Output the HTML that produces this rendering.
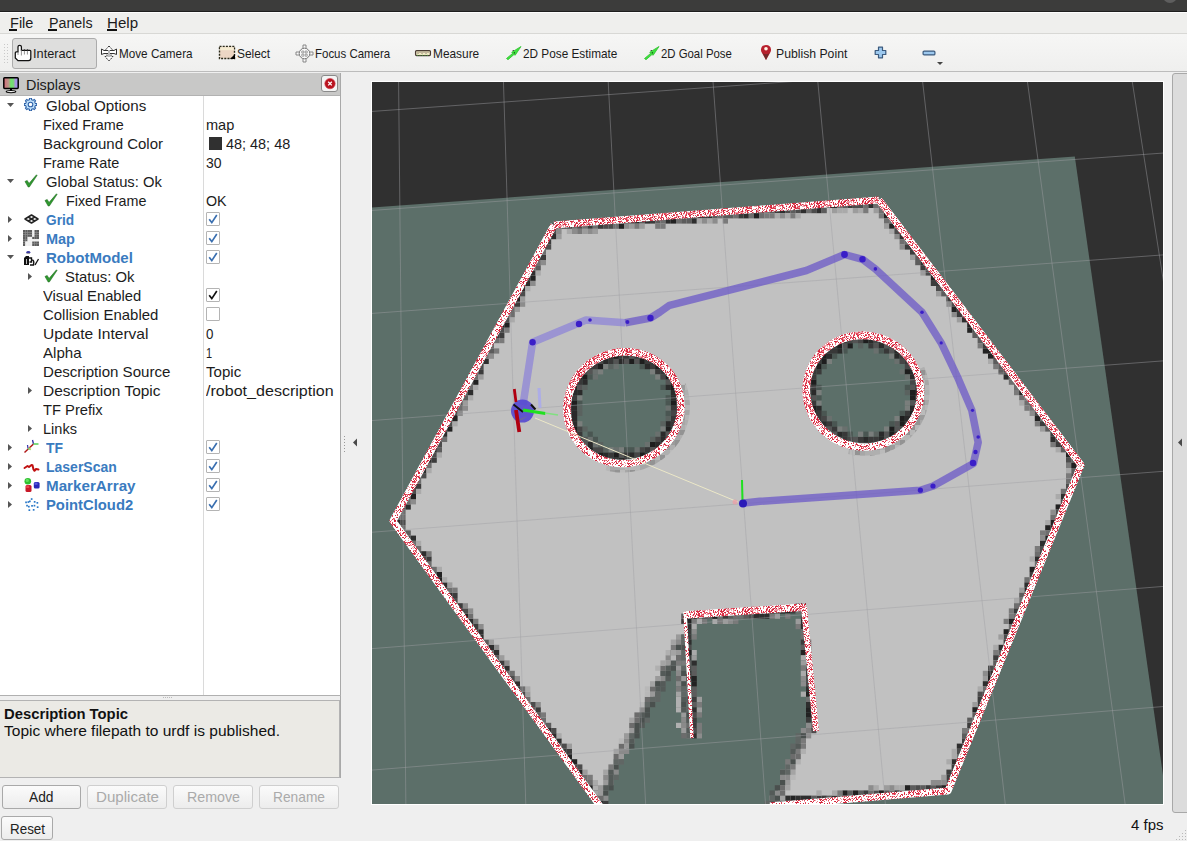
<!DOCTYPE html><html><head><meta charset="utf-8"><style>
html,body{margin:0;padding:0;width:1187px;height:841px;overflow:hidden;background:#efefef;position:relative}
.t{position:absolute;white-space:nowrap;font-family:"Liberation Sans",sans-serif;line-height:normal}
</style></head><body>
<div style="position:absolute;left:0px;top:0px;width:1187px;height:11px;background:#3c3c3b"></div>
<div style="position:absolute;left:0px;top:11px;width:1187px;height:1px;background:#1e1e1e"></div>
<div style="position:absolute;left:0px;top:12px;width:1187px;height:1px;background:#fdfdfd"></div>
<div style="position:absolute;left:0px;top:13px;width:1187px;height:20px;background:#efefed"></div>
<div style="position:absolute;left:0px;top:33px;width:1187px;height:1px;background:#d8d8d5"></div>
<div style="position:absolute;left:0px;top:34px;width:1187px;height:37px;background:linear-gradient(#f6f6f5,#efefee)"></div>
<div style="position:absolute;left:0px;top:71px;width:1187px;height:1px;background:#bcbcbc"></div>
<div style="position:absolute;left:0px;top:72px;width:1187px;height:769px;background:#efefef"></div>
<div class="t" style="left:10.00px;top:15.23px;font-size:14.00px;transform:scaleX(1.0382);transform-origin:0 0;color:#1c1c1c;">File</div>
<div class="t" style="left:48.50px;top:15.23px;font-size:14.00px;transform:scaleX(1.0177);transform-origin:0 0;color:#1c1c1c;">Panels</div>
<div class="t" style="left:107.30px;top:15.23px;font-size:14.00px;transform:scaleX(1.0775);transform-origin:0 0;color:#1c1c1c;">Help</div>
<div style="position:absolute;left:9px;top:29px;width:8px;height:2px;background:#111"></div>
<div style="position:absolute;left:48px;top:29px;width:9px;height:2px;background:#111"></div>
<div style="position:absolute;left:107px;top:29px;width:10px;height:2px;background:#111"></div>
<div style="position:absolute;left:4px;top:44px;width:1px;height:1px;background:#c9c9c9"></div>
<div style="position:absolute;left:7px;top:44px;width:1px;height:1px;background:#c9c9c9"></div>
<div style="position:absolute;left:4px;top:47px;width:1px;height:1px;background:#c9c9c9"></div>
<div style="position:absolute;left:7px;top:47px;width:1px;height:1px;background:#c9c9c9"></div>
<div style="position:absolute;left:4px;top:50px;width:1px;height:1px;background:#c9c9c9"></div>
<div style="position:absolute;left:7px;top:50px;width:1px;height:1px;background:#c9c9c9"></div>
<div style="position:absolute;left:4px;top:53px;width:1px;height:1px;background:#c9c9c9"></div>
<div style="position:absolute;left:7px;top:53px;width:1px;height:1px;background:#c9c9c9"></div>
<div style="position:absolute;left:4px;top:56px;width:1px;height:1px;background:#c9c9c9"></div>
<div style="position:absolute;left:7px;top:56px;width:1px;height:1px;background:#c9c9c9"></div>
<div style="position:absolute;left:4px;top:59px;width:1px;height:1px;background:#c9c9c9"></div>
<div style="position:absolute;left:7px;top:59px;width:1px;height:1px;background:#c9c9c9"></div>
<div style="position:absolute;left:4px;top:62px;width:1px;height:1px;background:#c9c9c9"></div>
<div style="position:absolute;left:7px;top:62px;width:1px;height:1px;background:#c9c9c9"></div>
<div style="position:absolute;left:12px;top:38px;width:83px;height:29px;border:1px solid #acacac;border-radius:3px;background:#dededd"></div>
<div class="t" style="left:33.00px;top:45.94px;font-size:13.00px;transform:scaleX(0.9803);transform-origin:0 0;color:#1c1c1c;">Interact</div>
<div class="t" style="left:119.00px;top:45.94px;font-size:13.00px;transform:scaleX(0.9008);transform-origin:0 0;color:#1c1c1c;">Move Camera</div>
<div class="t" style="left:237.00px;top:45.94px;font-size:13.00px;transform:scaleX(0.9159);transform-origin:0 0;color:#1c1c1c;">Select</div>
<div class="t" style="left:315.00px;top:45.94px;font-size:13.00px;transform:scaleX(0.8818);transform-origin:0 0;color:#1c1c1c;">Focus Camera</div>
<div class="t" style="left:433.00px;top:45.94px;font-size:13.00px;transform:scaleX(0.9136);transform-origin:0 0;color:#1c1c1c;">Measure</div>
<div class="t" style="left:523.00px;top:45.94px;font-size:13.00px;transform:scaleX(0.9071);transform-origin:0 0;color:#1c1c1c;">2D Pose Estimate</div>
<div class="t" style="left:661.20px;top:45.94px;font-size:13.00px;transform:scaleX(0.8749);transform-origin:0 0;color:#1c1c1c;">2D Goal Pose</div>
<div class="t" style="left:775.70px;top:45.94px;font-size:13.00px;transform:scaleX(0.9400);transform-origin:0 0;color:#1c1c1c;">Publish Point</div>
<div style="position:absolute;left:0px;top:73px;width:341px;height:23px;background:#c8c8c7"></div>
<div style="position:absolute;left:0px;top:95px;width:341px;height:1px;background:#b2b2b2"></div>
<div class="t" style="left:25.60px;top:77.28px;font-size:14.50px;transform:scaleX(0.9925);transform-origin:0 0;color:#1c1c1c;">Displays</div>
<div style="position:absolute;left:321px;top:75px;width:15px;height:15px;border:1px solid #8a8a8a;border-radius:3px;background:#f4f4f4"></div>
<svg style="position:absolute;left:322px;top:76px" width="16" height="16"><circle cx="8" cy="7.6" r="5.2" fill="#b8121e" stroke="#d04050" stroke-width="0.6"/><path d="M6.2 5.8 L9.8 9.4 M9.8 5.8 L6.2 9.4" stroke="#fff" stroke-width="1.3"/></svg>
<div style="position:absolute;left:0px;top:96px;width:340px;height:600px;background:#fff"></div>
<div style="position:absolute;left:340px;top:73px;width:1px;height:705px;background:#a9a9a9"></div>
<div style="position:absolute;left:0px;top:695px;width:341px;height:1px;background:#b0b0b0"></div>
<div style="position:absolute;left:203px;top:96px;width:1px;height:599px;background:#dadada"></div>
<div class="t" style="left:45.50px;top:97.98px;font-size:14.50px;transform:scaleX(1.0457);transform-origin:0 0;color:#1c1c1c;">Global Options</div>
<div class="t" style="left:43.40px;top:116.98px;font-size:14.50px;transform:scaleX(0.9912);transform-origin:0 0;color:#1c1c1c;">Fixed Frame</div>
<div class="t" style="left:206.40px;top:116.98px;font-size:14.50px;transform:scaleX(1.0035);transform-origin:0 0;color:#1c1c1c;">map</div>
<div class="t" style="left:43.40px;top:135.98px;font-size:14.50px;transform:scaleX(1.0338);transform-origin:0 0;color:#1c1c1c;">Background Color</div>
<div style="position:absolute;left:209px;top:137px;width:13px;height:13px;background:#303030;border:0"></div>
<div class="t" style="left:226.40px;top:135.98px;font-size:14.50px;transform:scaleX(0.9950);transform-origin:0 0;color:#1c1c1c;">48; 48; 48</div>
<div class="t" style="left:43.40px;top:154.98px;font-size:14.50px;transform:scaleX(0.9953);transform-origin:0 0;color:#1c1c1c;">Frame Rate</div>
<div class="t" style="left:206.40px;top:154.98px;font-size:14.50px;transform:scaleX(0.9630);transform-origin:0 0;color:#1c1c1c;">30</div>
<div class="t" style="left:45.50px;top:173.98px;font-size:14.50px;transform:scaleX(1.0195);transform-origin:0 0;color:#1c1c1c;">Global Status: Ok</div>
<div class="t" style="left:65.80px;top:192.98px;font-size:14.50px;transform:scaleX(0.9887);transform-origin:0 0;color:#1c1c1c;">Fixed Frame</div>
<div class="t" style="left:206.40px;top:192.98px;font-size:14.50px;transform:scaleX(0.9832);transform-origin:0 0;color:#1c1c1c;">OK</div>
<div class="t" style="left:45.90px;top:211.98px;font-size:14.50px;transform:scaleX(0.9430);transform-origin:0 0;font-weight:bold;color:#3a7bbf;">Grid</div>
<div style="position:absolute;left:206px;top:212px;width:12px;height:12px;border:1px solid #b4b4b4;border-radius:1px;background:#fff"></div>
<svg style="position:absolute;left:206px;top:212px" width="14" height="14"><path d="M3.2 7.2 L5.8 10.6 L10.8 3" fill="none" stroke="#3a6fb0" stroke-width="1.7"/></svg>
<div class="t" style="left:45.90px;top:230.98px;font-size:14.50px;transform:scaleX(1.0000);transform-origin:0 0;font-weight:bold;color:#3a7bbf;">Map</div>
<div style="position:absolute;left:206px;top:231px;width:12px;height:12px;border:1px solid #b4b4b4;border-radius:1px;background:#fff"></div>
<svg style="position:absolute;left:206px;top:231px" width="14" height="14"><path d="M3.2 7.2 L5.8 10.6 L10.8 3" fill="none" stroke="#3a6fb0" stroke-width="1.7"/></svg>
<div class="t" style="left:45.90px;top:249.98px;font-size:14.50px;transform:scaleX(1.0378);transform-origin:0 0;font-weight:bold;color:#3a7bbf;">RobotModel</div>
<div style="position:absolute;left:206px;top:250px;width:12px;height:12px;border:1px solid #b4b4b4;border-radius:1px;background:#fff"></div>
<svg style="position:absolute;left:206px;top:250px" width="14" height="14"><path d="M3.2 7.2 L5.8 10.6 L10.8 3" fill="none" stroke="#3a6fb0" stroke-width="1.7"/></svg>
<div class="t" style="left:64.90px;top:268.98px;font-size:14.50px;transform:scaleX(1.0267);transform-origin:0 0;color:#1c1c1c;">Status: Ok</div>
<div class="t" style="left:43.30px;top:287.98px;font-size:14.50px;transform:scaleX(1.0187);transform-origin:0 0;color:#1c1c1c;">Visual Enabled</div>
<div style="position:absolute;left:206px;top:288px;width:12px;height:12px;border:1px solid #b4b4b4;border-radius:1px;background:#fff"></div>
<svg style="position:absolute;left:206px;top:288px" width="14" height="14"><path d="M3.2 7.2 L5.8 10.6 L10.8 3" fill="none" stroke="#111" stroke-width="1.7"/></svg>
<div class="t" style="left:43.30px;top:306.98px;font-size:14.50px;transform:scaleX(1.0293);transform-origin:0 0;color:#1c1c1c;">Collision Enabled</div>
<div style="position:absolute;left:206px;top:307px;width:12px;height:12px;border:1px solid #b4b4b4;border-radius:1px;background:#fff"></div>
<div class="t" style="left:43.30px;top:325.98px;font-size:14.50px;transform:scaleX(1.0721);transform-origin:0 0;color:#1c1c1c;">Update Interval</div>
<div class="t" style="left:206.40px;top:325.98px;font-size:14.50px;transform:scaleX(0.9195);transform-origin:0 0;color:#1c1c1c;">0</div>
<div class="t" style="left:43.30px;top:344.98px;font-size:14.50px;transform:scaleX(1.0399);transform-origin:0 0;color:#1c1c1c;">Alpha</div>
<div class="t" style="left:206.40px;top:344.98px;font-size:14.50px;transform:scaleX(0.7580);transform-origin:0 0;color:#1c1c1c;">1</div>
<div class="t" style="left:43.30px;top:363.98px;font-size:14.50px;transform:scaleX(1.0398);transform-origin:0 0;color:#1c1c1c;">Description Source</div>
<div class="t" style="left:206.40px;top:363.98px;font-size:14.50px;transform:scaleX(1.0397);transform-origin:0 0;color:#1c1c1c;">Topic</div>
<div class="t" style="left:43.30px;top:382.98px;font-size:14.50px;transform:scaleX(1.0669);transform-origin:0 0;color:#1c1c1c;">Description Topic</div>
<div class="t" style="left:205.60px;top:382.98px;font-size:14.50px;transform:scaleX(1.1078);transform-origin:0 0;color:#1c1c1c;">/robot_description</div>
<div class="t" style="left:43.30px;top:401.98px;font-size:14.50px;transform:scaleX(1.0153);transform-origin:0 0;color:#1c1c1c;">TF Prefix</div>
<div class="t" style="left:43.30px;top:420.98px;font-size:14.50px;transform:scaleX(1.0042);transform-origin:0 0;color:#1c1c1c;">Links</div>
<div class="t" style="left:45.80px;top:439.98px;font-size:14.50px;transform:scaleX(0.9610);transform-origin:0 0;font-weight:bold;color:#3a7bbf;">TF</div>
<div style="position:absolute;left:206px;top:440px;width:12px;height:12px;border:1px solid #b4b4b4;border-radius:1px;background:#fff"></div>
<svg style="position:absolute;left:206px;top:440px" width="14" height="14"><path d="M3.2 7.2 L5.8 10.6 L10.8 3" fill="none" stroke="#3a6fb0" stroke-width="1.7"/></svg>
<div class="t" style="left:45.80px;top:458.98px;font-size:14.50px;transform:scaleX(0.9650);transform-origin:0 0;font-weight:bold;color:#3a7bbf;">LaserScan</div>
<div style="position:absolute;left:206px;top:459px;width:12px;height:12px;border:1px solid #b4b4b4;border-radius:1px;background:#fff"></div>
<svg style="position:absolute;left:206px;top:459px" width="14" height="14"><path d="M3.2 7.2 L5.8 10.6 L10.8 3" fill="none" stroke="#3a6fb0" stroke-width="1.7"/></svg>
<div class="t" style="left:45.80px;top:477.98px;font-size:14.50px;transform:scaleX(1.0482);transform-origin:0 0;font-weight:bold;color:#3a7bbf;">MarkerArray</div>
<div style="position:absolute;left:206px;top:478px;width:12px;height:12px;border:1px solid #b4b4b4;border-radius:1px;background:#fff"></div>
<svg style="position:absolute;left:206px;top:478px" width="14" height="14"><path d="M3.2 7.2 L5.8 10.6 L10.8 3" fill="none" stroke="#3a6fb0" stroke-width="1.7"/></svg>
<div class="t" style="left:45.80px;top:496.98px;font-size:14.50px;transform:scaleX(1.0210);transform-origin:0 0;font-weight:bold;color:#3a7bbf;">PointCloud2</div>
<div style="position:absolute;left:206px;top:497px;width:12px;height:12px;border:1px solid #b4b4b4;border-radius:1px;background:#fff"></div>
<svg style="position:absolute;left:206px;top:497px" width="14" height="14"><path d="M3.2 7.2 L5.8 10.6 L10.8 3" fill="none" stroke="#3a6fb0" stroke-width="1.7"/></svg>
<svg style="position:absolute;left:7px;top:103px" width="8" height="5"><path d="M0 0 L7 0 L3.5 4 Z" fill="#555"/></svg>
<svg style="position:absolute;left:7px;top:179px" width="8" height="5"><path d="M0 0 L7 0 L3.5 4 Z" fill="#555"/></svg>
<svg style="position:absolute;left:7px;top:255px" width="8" height="5"><path d="M0 0 L7 0 L3.5 4 Z" fill="#555"/></svg>
<svg style="position:absolute;left:8px;top:216px" width="5" height="8"><path d="M0 0 L4 3.5 L0 7 Z" fill="#555"/></svg>
<svg style="position:absolute;left:8px;top:235px" width="5" height="8"><path d="M0 0 L4 3.5 L0 7 Z" fill="#555"/></svg>
<svg style="position:absolute;left:8px;top:444px" width="5" height="8"><path d="M0 0 L4 3.5 L0 7 Z" fill="#555"/></svg>
<svg style="position:absolute;left:8px;top:463px" width="5" height="8"><path d="M0 0 L4 3.5 L0 7 Z" fill="#555"/></svg>
<svg style="position:absolute;left:8px;top:482px" width="5" height="8"><path d="M0 0 L4 3.5 L0 7 Z" fill="#555"/></svg>
<svg style="position:absolute;left:8px;top:501px" width="5" height="8"><path d="M0 0 L4 3.5 L0 7 Z" fill="#555"/></svg>
<svg style="position:absolute;left:28px;top:273px" width="5" height="8"><path d="M0 0 L4 3.5 L0 7 Z" fill="#555"/></svg>
<svg style="position:absolute;left:28px;top:387px" width="5" height="8"><path d="M0 0 L4 3.5 L0 7 Z" fill="#555"/></svg>
<svg style="position:absolute;left:28px;top:425px" width="5" height="8"><path d="M0 0 L4 3.5 L0 7 Z" fill="#555"/></svg>
<div style="position:absolute;left:0px;top:700px;width:339px;height:76px;border:1px solid #b3b3b3;border-left:0;background:#ebeae5"></div>
<div class="t" style="left:4.40px;top:706.48px;font-size:14.50px;transform:scaleX(1.0217);transform-origin:0 0;font-weight:bold;color:#111;">Description Topic</div>
<div class="t" style="left:4.40px;top:723.28px;font-size:14.50px;transform:scaleX(1.0700);transform-origin:0 0;color:#111;">Topic where filepath to urdf is published.</div>
<div style="position:absolute;left:163px;top:697px;width:1px;height:1px;background:#bbb"></div>
<div style="position:absolute;left:165px;top:697px;width:1px;height:1px;background:#bbb"></div>
<div style="position:absolute;left:167px;top:697px;width:1px;height:1px;background:#bbb"></div>
<div style="position:absolute;left:169px;top:697px;width:1px;height:1px;background:#bbb"></div>
<div style="position:absolute;left:171px;top:697px;width:1px;height:1px;background:#bbb"></div>
<div style="position:absolute;left:1.5px;top:784.5px;width:77.5px;height:22px;border:1px solid #a9a9a9;border-radius:3px;background:linear-gradient(#fbfbfb,#ececec)"></div>
<div class="t" style="left:29.00px;top:789.28px;font-size:14.50px;transform:scaleX(0.9492);transform-origin:0 0;color:#222;">Add</div>
<div style="position:absolute;left:87.4px;top:784.5px;width:77.5px;height:22px;border:1px solid #cfcfcf;border-radius:3px;background:linear-gradient(#fbfbfb,#ececec)"></div>
<div class="t" style="left:95.65px;top:789.28px;font-size:14.50px;transform:scaleX(1.0419);transform-origin:0 0;color:#aaa;">Duplicate</div>
<div style="position:absolute;left:173.3px;top:784.5px;width:77.5px;height:22px;border:1px solid #cfcfcf;border-radius:3px;background:linear-gradient(#fbfbfb,#ececec)"></div>
<div class="t" style="left:186.55px;top:789.28px;font-size:14.50px;transform:scaleX(0.9813);transform-origin:0 0;color:#aaa;">Remove</div>
<div style="position:absolute;left:259.2px;top:784.5px;width:77.5px;height:22px;border:1px solid #cfcfcf;border-radius:3px;background:linear-gradient(#fbfbfb,#ececec)"></div>
<div class="t" style="left:272.95px;top:789.28px;font-size:14.50px;transform:scaleX(0.9487);transform-origin:0 0;color:#aaa;">Rename</div>
<div style="position:absolute;left:1.3px;top:816px;width:50.2px;height:21.5px;border:1px solid #a9a9a9;border-radius:3px;background:linear-gradient(#fbfbfb,#ececec)"></div>
<div class="t" style="left:9.90px;top:820.78px;font-size:14.50px;transform:scaleX(0.9248);transform-origin:0 0;color:#222;">Reset</div>
<div class="t" style="left:1131.00px;top:816.02px;font-size:15.00px;transform:scaleX(0.9985);transform-origin:0 0;color:#111;">4 fps</div>
<div style="position:absolute;left:1185px;top:830px;width:1px;height:1px;background:#b8b8b8"></div>
<div style="position:absolute;left:1185px;top:833px;width:1px;height:1px;background:#b8b8b8"></div>
<div style="position:absolute;left:1182px;top:833px;width:1px;height:1px;background:#b8b8b8"></div>
<div style="position:absolute;left:1185px;top:836px;width:1px;height:1px;background:#b8b8b8"></div>
<div style="position:absolute;left:1182px;top:836px;width:1px;height:1px;background:#b8b8b8"></div>
<div style="position:absolute;left:1179px;top:836px;width:1px;height:1px;background:#b8b8b8"></div>
<div style="position:absolute;left:1185px;top:839px;width:1px;height:1px;background:#b8b8b8"></div>
<div style="position:absolute;left:1182px;top:839px;width:1px;height:1px;background:#b8b8b8"></div>
<div style="position:absolute;left:1179px;top:839px;width:1px;height:1px;background:#b8b8b8"></div>
<div style="position:absolute;left:1176px;top:839px;width:1px;height:1px;background:#b8b8b8"></div>
<div style="position:absolute;left:344px;top:436px;width:1px;height:1px;background:#999"></div>
<div style="position:absolute;left:344px;top:439px;width:1px;height:1px;background:#999"></div>
<div style="position:absolute;left:344px;top:442px;width:1px;height:1px;background:#999"></div>
<div style="position:absolute;left:344px;top:445px;width:1px;height:1px;background:#999"></div>
<div style="position:absolute;left:344px;top:448px;width:1px;height:1px;background:#999"></div>
<div style="position:absolute;left:344px;top:451px;width:1px;height:1px;background:#999"></div>
<svg style="position:absolute;left:352px;top:438px" width="6" height="10"><path d="M5 0.5 L5 8.5 L1 4.5 Z" fill="#4a4a4a"/></svg>
<div style="position:absolute;left:1172px;top:73px;width:20px;height:738px;border:1px solid #a8a8a8;border-radius:3px;background:#dcdcdc"></div>
<svg style="position:absolute;left:1177px;top:438px" width="6" height="10"><path d="M5 0.5 L5 8.5 L1 4.5 Z" fill="#4a4a4a"/></svg>
<div style="position:absolute;left:371px;top:81px;width:793px;height:724px;background:#fff"></div>
<div style="position:absolute;left:372px;top:82px;width:791px;height:722px;background:#303030"></div>
<div style="position:absolute;left:1163px;top:-11px;width:14px;height:13.5px;border-radius:50%;background:#5e5e5e"></div>
<svg style="position:absolute;left:372px;top:82px" width="791" height="722" viewBox="372 82 791 722"><defs><pattern id="spR" patternUnits="userSpaceOnUse" width="24" height="24"><rect width="24" height="24" fill="#ffffff"/><rect x="13" y="19" width="1" height="1" fill="#e24a5c"/><rect x="6" y="10" width="1" height="1" fill="#ee8290"/><rect x="16" y="20" width="1" height="1" fill="#f2a4ae"/><rect x="2" y="1" width="1" height="1" fill="#e24a5c"/><rect x="3" y="2" width="1" height="1" fill="#f2a4ae"/><rect x="22" y="20" width="1" height="1" fill="#ee8290"/><rect x="4" y="0" width="1" height="1" fill="#ee8290"/><rect x="15" y="14" width="1" height="1" fill="#f2a4ae"/><rect x="2" y="11" width="1" height="1" fill="#dc3448"/><rect x="21" y="15" width="1" height="1" fill="#e24a5c"/><rect x="9" y="3" width="1" height="1" fill="#d42038"/><rect x="1" y="14" width="1" height="1" fill="#ee8290"/><rect x="3" y="16" width="1" height="1" fill="#dc3448"/><rect x="18" y="12" width="1" height="1" fill="#f2a4ae"/><rect x="17" y="20" width="1" height="1" fill="#f2a4ae"/><rect x="2" y="23" width="1" height="1" fill="#dc3448"/><rect x="10" y="6" width="1" height="1" fill="#f2a4ae"/><rect x="3" y="20" width="1" height="1" fill="#e24a5c"/><rect x="18" y="2" width="1" height="1" fill="#f2a4ae"/><rect x="2" y="12" width="1" height="1" fill="#e24a5c"/><rect x="5" y="6" width="1" height="1" fill="#f2a4ae"/><rect x="9" y="12" width="1" height="1" fill="#f2a4ae"/><rect x="2" y="15" width="1" height="1" fill="#d42038"/><rect x="16" y="22" width="1" height="1" fill="#dc3448"/><rect x="2" y="2" width="1" height="1" fill="#e24a5c"/><rect x="9" y="10" width="1" height="1" fill="#f2a4ae"/><rect x="1" y="23" width="1" height="1" fill="#d42038"/><rect x="5" y="16" width="1" height="1" fill="#e24a5c"/><rect x="12" y="8" width="1" height="1" fill="#e24a5c"/><rect x="17" y="21" width="1" height="1" fill="#e24a5c"/><rect x="6" y="3" width="1" height="1" fill="#dc3448"/><rect x="5" y="0" width="1" height="1" fill="#f2a4ae"/><rect x="13" y="3" width="1" height="1" fill="#d42038"/><rect x="7" y="17" width="1" height="1" fill="#f2a4ae"/><rect x="4" y="9" width="1" height="1" fill="#d42038"/><rect x="8" y="0" width="1" height="1" fill="#ee8290"/><rect x="15" y="21" width="1" height="1" fill="#f2a4ae"/><rect x="4" y="3" width="1" height="1" fill="#f2a4ae"/><rect x="2" y="16" width="1" height="1" fill="#f2a4ae"/><rect x="2" y="13" width="1" height="1" fill="#dc3448"/><rect x="8" y="18" width="1" height="1" fill="#d42038"/><rect x="21" y="4" width="1" height="1" fill="#f2a4ae"/><rect x="18" y="5" width="1" height="1" fill="#d42038"/><rect x="13" y="9" width="1" height="1" fill="#e24a5c"/><rect x="19" y="20" width="1" height="1" fill="#e24a5c"/><rect x="19" y="8" width="1" height="1" fill="#ee8290"/><rect x="15" y="10" width="1" height="1" fill="#d42038"/><rect x="12" y="18" width="1" height="1" fill="#d42038"/><rect x="10" y="14" width="1" height="1" fill="#f2a4ae"/><rect x="7" y="16" width="1" height="1" fill="#dc3448"/><rect x="10" y="9" width="1" height="1" fill="#f2a4ae"/><rect x="3" y="11" width="1" height="1" fill="#d42038"/><rect x="12" y="19" width="1" height="1" fill="#d42038"/><rect x="21" y="2" width="1" height="1" fill="#dc3448"/><rect x="14" y="15" width="1" height="1" fill="#ee8290"/><rect x="19" y="3" width="1" height="1" fill="#f2a4ae"/><rect x="12" y="6" width="1" height="1" fill="#f2a4ae"/><rect x="23" y="19" width="1" height="1" fill="#f2a4ae"/><rect x="22" y="16" width="1" height="1" fill="#f2a4ae"/><rect x="23" y="9" width="1" height="1" fill="#e24a5c"/><rect x="7" y="0" width="1" height="1" fill="#ee8290"/><rect x="14" y="14" width="1" height="1" fill="#dc3448"/><rect x="6" y="11" width="1" height="1" fill="#f2a4ae"/><rect x="20" y="20" width="1" height="1" fill="#f2a4ae"/><rect x="17" y="23" width="1" height="1" fill="#dc3448"/><rect x="0" y="20" width="1" height="1" fill="#f2a4ae"/><rect x="20" y="12" width="1" height="1" fill="#e24a5c"/><rect x="14" y="6" width="1" height="1" fill="#f2a4ae"/><rect x="1" y="15" width="1" height="1" fill="#ee8290"/><rect x="16" y="7" width="1" height="1" fill="#f2a4ae"/><rect x="11" y="21" width="1" height="1" fill="#e24a5c"/><rect x="12" y="5" width="1" height="1" fill="#dc3448"/><rect x="23" y="21" width="1" height="1" fill="#e24a5c"/><rect x="18" y="16" width="1" height="1" fill="#dc3448"/><rect x="17" y="10" width="1" height="1" fill="#d42038"/><rect x="6" y="16" width="1" height="1" fill="#dc3448"/><rect x="7" y="6" width="1" height="1" fill="#dc3448"/><rect x="14" y="19" width="1" height="1" fill="#ee8290"/><rect x="7" y="11" width="1" height="1" fill="#d42038"/><rect x="12" y="16" width="1" height="1" fill="#e24a5c"/><rect x="21" y="23" width="1" height="1" fill="#dc3448"/><rect x="22" y="19" width="1" height="1" fill="#d42038"/><rect x="17" y="0" width="1" height="1" fill="#e24a5c"/><rect x="9" y="17" width="1" height="1" fill="#ee8290"/><rect x="1" y="11" width="1" height="1" fill="#d42038"/><rect x="17" y="22" width="1" height="1" fill="#e24a5c"/><rect x="22" y="21" width="1" height="1" fill="#ee8290"/><rect x="20" y="3" width="1" height="1" fill="#e24a5c"/><rect x="5" y="18" width="1" height="1" fill="#ee8290"/><rect x="10" y="2" width="1" height="1" fill="#e24a5c"/><rect x="14" y="20" width="1" height="1" fill="#dc3448"/><rect x="14" y="4" width="1" height="1" fill="#e24a5c"/><rect x="1" y="9" width="1" height="1" fill="#d42038"/><rect x="1" y="7" width="1" height="1" fill="#dc3448"/><rect x="23" y="16" width="1" height="1" fill="#dc3448"/><rect x="14" y="23" width="1" height="1" fill="#e24a5c"/><rect x="6" y="14" width="1" height="1" fill="#e24a5c"/><rect x="23" y="23" width="1" height="1" fill="#e24a5c"/><rect x="12" y="7" width="1" height="1" fill="#dc3448"/><rect x="14" y="12" width="1" height="1" fill="#f2a4ae"/><rect x="17" y="12" width="1" height="1" fill="#dc3448"/><rect x="23" y="2" width="1" height="1" fill="#ee8290"/><rect x="6" y="1" width="1" height="1" fill="#dc3448"/><rect x="15" y="6" width="1" height="1" fill="#e24a5c"/><rect x="8" y="5" width="1" height="1" fill="#ee8290"/><rect x="18" y="22" width="1" height="1" fill="#ee8290"/><rect x="22" y="6" width="1" height="1" fill="#d42038"/><rect x="7" y="9" width="1" height="1" fill="#ee8290"/><rect x="0" y="11" width="1" height="1" fill="#d42038"/><rect x="9" y="20" width="1" height="1" fill="#ee8290"/><rect x="7" y="13" width="1" height="1" fill="#f2a4ae"/><rect x="3" y="14" width="1" height="1" fill="#dc3448"/><rect x="13" y="0" width="1" height="1" fill="#dc3448"/><rect x="23" y="15" width="1" height="1" fill="#d42038"/><rect x="10" y="12" width="1" height="1" fill="#dc3448"/><rect x="1" y="6" width="1" height="1" fill="#ee8290"/><rect x="4" y="15" width="1" height="1" fill="#f2a4ae"/><rect x="16" y="9" width="1" height="1" fill="#f2a4ae"/><rect x="22" y="17" width="1" height="1" fill="#ee8290"/><rect x="2" y="18" width="1" height="1" fill="#f2a4ae"/><rect x="15" y="18" width="1" height="1" fill="#d42038"/><rect x="23" y="3" width="1" height="1" fill="#d42038"/><rect x="8" y="11" width="1" height="1" fill="#e24a5c"/><rect x="8" y="8" width="1" height="1" fill="#d42038"/><rect x="18" y="14" width="1" height="1" fill="#d42038"/><rect x="20" y="15" width="1" height="1" fill="#ee8290"/><rect x="1" y="17" width="1" height="1" fill="#ee8290"/><rect x="3" y="13" width="1" height="1" fill="#d42038"/><rect x="9" y="13" width="1" height="1" fill="#e24a5c"/><rect x="8" y="13" width="1" height="1" fill="#ee8290"/><rect x="11" y="17" width="1" height="1" fill="#e24a5c"/><rect x="5" y="22" width="1" height="1" fill="#dc3448"/><rect x="2" y="22" width="1" height="1" fill="#ee8290"/><rect x="17" y="11" width="1" height="1" fill="#dc3448"/><rect x="9" y="4" width="1" height="1" fill="#e24a5c"/><rect x="18" y="13" width="1" height="1" fill="#f2a4ae"/><rect x="23" y="10" width="1" height="1" fill="#f2a4ae"/><rect x="15" y="1" width="1" height="1" fill="#f2a4ae"/><rect x="8" y="20" width="1" height="1" fill="#dc3448"/><rect x="7" y="15" width="1" height="1" fill="#ee8290"/><rect x="14" y="13" width="1" height="1" fill="#d42038"/><rect x="8" y="2" width="1" height="1" fill="#ee8290"/><rect x="4" y="22" width="1" height="1" fill="#d42038"/><rect x="3" y="5" width="1" height="1" fill="#e24a5c"/><rect x="1" y="18" width="1" height="1" fill="#dc3448"/><rect x="3" y="18" width="1" height="1" fill="#d42038"/><rect x="18" y="0" width="1" height="1" fill="#ee8290"/><rect x="18" y="1" width="1" height="1" fill="#d42038"/><rect x="14" y="1" width="1" height="1" fill="#d42038"/><rect x="4" y="23" width="1" height="1" fill="#ee8290"/><rect x="0" y="6" width="1" height="1" fill="#d42038"/><rect x="10" y="8" width="1" height="1" fill="#f2a4ae"/><rect x="12" y="13" width="1" height="1" fill="#e24a5c"/><rect x="3" y="21" width="1" height="1" fill="#d42038"/><rect x="5" y="14" width="1" height="1" fill="#ee8290"/><rect x="6" y="0" width="1" height="1" fill="#d42038"/><rect x="0" y="2" width="1" height="1" fill="#dc3448"/><rect x="21" y="14" width="1" height="1" fill="#d42038"/><rect x="8" y="22" width="1" height="1" fill="#ee8290"/><rect x="11" y="9" width="1" height="1" fill="#f2a4ae"/><rect x="7" y="21" width="1" height="1" fill="#dc3448"/><rect x="19" y="7" width="1" height="1" fill="#ee8290"/><rect x="12" y="1" width="1" height="1" fill="#f2a4ae"/><rect x="6" y="19" width="1" height="1" fill="#e24a5c"/><rect x="22" y="9" width="1" height="1" fill="#d42038"/><rect x="14" y="17" width="1" height="1" fill="#f2a4ae"/><rect x="10" y="23" width="1" height="1" fill="#e24a5c"/><rect x="13" y="4" width="1" height="1" fill="#d42038"/><rect x="13" y="23" width="1" height="1" fill="#e24a5c"/><rect x="14" y="10" width="1" height="1" fill="#ee8290"/><rect x="18" y="23" width="1" height="1" fill="#d42038"/><rect x="1" y="3" width="1" height="1" fill="#e24a5c"/><rect x="21" y="5" width="1" height="1" fill="#e24a5c"/><rect x="16" y="15" width="1" height="1" fill="#ee8290"/><rect x="22" y="3" width="1" height="1" fill="#ee8290"/><rect x="11" y="22" width="1" height="1" fill="#f2a4ae"/><rect x="18" y="20" width="1" height="1" fill="#e24a5c"/><rect x="18" y="21" width="1" height="1" fill="#ee8290"/><rect x="8" y="12" width="1" height="1" fill="#dc3448"/><rect x="8" y="9" width="1" height="1" fill="#f2a4ae"/><rect x="2" y="5" width="1" height="1" fill="#e24a5c"/><rect x="23" y="7" width="1" height="1" fill="#ee8290"/><rect x="13" y="12" width="1" height="1" fill="#ee8290"/><rect x="18" y="19" width="1" height="1" fill="#d42038"/><rect x="20" y="2" width="1" height="1" fill="#ee8290"/><rect x="4" y="1" width="1" height="1" fill="#d42038"/><rect x="1" y="10" width="1" height="1" fill="#d42038"/><rect x="4" y="10" width="1" height="1" fill="#d42038"/><rect x="9" y="9" width="1" height="1" fill="#f2a4ae"/><rect x="21" y="20" width="1" height="1" fill="#f2a4ae"/><rect x="2" y="8" width="1" height="1" fill="#e24a5c"/><rect x="20" y="19" width="1" height="1" fill="#f2a4ae"/><rect x="21" y="19" width="1" height="1" fill="#dc3448"/><rect x="1" y="2" width="1" height="1" fill="#e24a5c"/><rect x="2" y="4" width="1" height="1" fill="#dc3448"/><rect x="0" y="0" width="1" height="1" fill="#d42038"/><rect x="12" y="2" width="1" height="1" fill="#dc3448"/><rect x="22" y="18" width="1" height="1" fill="#dc3448"/><rect x="11" y="10" width="1" height="1" fill="#f2a4ae"/><rect x="2" y="3" width="1" height="1" fill="#dc3448"/><rect x="7" y="18" width="1" height="1" fill="#f2a4ae"/><rect x="13" y="2" width="1" height="1" fill="#ee8290"/><rect x="0" y="13" width="1" height="1" fill="#e24a5c"/><rect x="1" y="12" width="1" height="1" fill="#e24a5c"/><rect x="16" y="4" width="1" height="1" fill="#ee8290"/><rect x="20" y="1" width="1" height="1" fill="#e24a5c"/><rect x="22" y="12" width="1" height="1" fill="#e24a5c"/><rect x="3" y="4" width="1" height="1" fill="#dc3448"/><rect x="19" y="2" width="1" height="1" fill="#ee8290"/><rect x="5" y="9" width="1" height="1" fill="#d42038"/><rect x="19" y="12" width="1" height="1" fill="#e24a5c"/><rect x="12" y="20" width="1" height="1" fill="#d42038"/><rect x="15" y="15" width="1" height="1" fill="#d42038"/><rect x="20" y="6" width="1" height="1" fill="#ee8290"/><rect x="2" y="14" width="1" height="1" fill="#dc3448"/><rect x="19" y="6" width="1" height="1" fill="#e24a5c"/><rect x="21" y="21" width="1" height="1" fill="#d42038"/><rect x="9" y="22" width="1" height="1" fill="#d42038"/><rect x="10" y="5" width="1" height="1" fill="#dc3448"/><rect x="10" y="7" width="1" height="1" fill="#f2a4ae"/><rect x="6" y="15" width="1" height="1" fill="#ee8290"/><rect x="1" y="19" width="1" height="1" fill="#f2a4ae"/><rect x="3" y="1" width="1" height="1" fill="#e24a5c"/><rect x="22" y="11" width="1" height="1" fill="#ee8290"/><rect x="7" y="7" width="1" height="1" fill="#d42038"/><rect x="5" y="15" width="1" height="1" fill="#dc3448"/><rect x="14" y="21" width="1" height="1" fill="#e24a5c"/><rect x="3" y="10" width="1" height="1" fill="#e24a5c"/><rect x="11" y="0" width="1" height="1" fill="#ee8290"/><rect x="19" y="11" width="1" height="1" fill="#dc3448"/><rect x="22" y="13" width="1" height="1" fill="#d42038"/><rect x="11" y="6" width="1" height="1" fill="#ee8290"/><rect x="22" y="14" width="1" height="1" fill="#ee8290"/><rect x="3" y="3" width="1" height="1" fill="#ee8290"/><rect x="11" y="14" width="1" height="1" fill="#f2a4ae"/><rect x="15" y="13" width="1" height="1" fill="#ee8290"/><rect x="14" y="8" width="1" height="1" fill="#e24a5c"/><rect x="6" y="8" width="1" height="1" fill="#d42038"/><rect x="13" y="17" width="1" height="1" fill="#ee8290"/><rect x="1" y="22" width="1" height="1" fill="#e24a5c"/><rect x="5" y="13" width="1" height="1" fill="#ee8290"/><rect x="11" y="1" width="1" height="1" fill="#e24a5c"/><rect x="7" y="19" width="1" height="1" fill="#d42038"/><rect x="20" y="22" width="1" height="1" fill="#ee8290"/><rect x="7" y="14" width="1" height="1" fill="#dc3448"/><rect x="4" y="18" width="1" height="1" fill="#d42038"/><rect x="11" y="8" width="1" height="1" fill="#dc3448"/><rect x="11" y="13" width="1" height="1" fill="#ee8290"/><rect x="10" y="17" width="1" height="1" fill="#f2a4ae"/><rect x="21" y="11" width="1" height="1" fill="#e24a5c"/><rect x="13" y="13" width="1" height="1" fill="#e24a5c"/><rect x="13" y="18" width="1" height="1" fill="#f2a4ae"/><rect x="13" y="1" width="1" height="1" fill="#d42038"/><rect x="22" y="10" width="1" height="1" fill="#d42038"/><rect x="5" y="2" width="1" height="1" fill="#ee8290"/><rect x="16" y="8" width="1" height="1" fill="#d42038"/><rect x="4" y="20" width="1" height="1" fill="#e24a5c"/><rect x="4" y="6" width="1" height="1" fill="#dc3448"/><rect x="13" y="22" width="1" height="1" fill="#f2a4ae"/><rect x="19" y="5" width="1" height="1" fill="#d42038"/><rect x="19" y="22" width="1" height="1" fill="#dc3448"/><rect x="0" y="14" width="1" height="1" fill="#d42038"/><rect x="22" y="1" width="1" height="1" fill="#ee8290"/><rect x="5" y="23" width="1" height="1" fill="#ee8290"/><rect x="10" y="1" width="1" height="1" fill="#e24a5c"/><rect x="5" y="12" width="1" height="1" fill="#d42038"/><rect x="13" y="10" width="1" height="1" fill="#f2a4ae"/><rect x="7" y="8" width="1" height="1" fill="#f2a4ae"/><rect x="19" y="18" width="1" height="1" fill="#e24a5c"/><rect x="7" y="10" width="1" height="1" fill="#f2a4ae"/><rect x="15" y="3" width="1" height="1" fill="#dc3448"/><rect x="18" y="17" width="1" height="1" fill="#ee8290"/><rect x="4" y="16" width="1" height="1" fill="#dc3448"/><rect x="14" y="16" width="1" height="1" fill="#e24a5c"/><rect x="13" y="7" width="1" height="1" fill="#ee8290"/><rect x="10" y="0" width="1" height="1" fill="#f2a4ae"/><rect x="4" y="4" width="1" height="1" fill="#e24a5c"/><rect x="7" y="4" width="1" height="1" fill="#d42038"/><rect x="4" y="8" width="1" height="1" fill="#f2a4ae"/><rect x="20" y="5" width="1" height="1" fill="#dc3448"/><rect x="15" y="20" width="1" height="1" fill="#f2a4ae"/><rect x="18" y="3" width="1" height="1" fill="#e24a5c"/><rect x="15" y="4" width="1" height="1" fill="#f2a4ae"/><rect x="14" y="18" width="1" height="1" fill="#f2a4ae"/><rect x="22" y="8" width="1" height="1" fill="#f2a4ae"/><rect x="8" y="6" width="1" height="1" fill="#d42038"/><rect x="13" y="6" width="1" height="1" fill="#f2a4ae"/><rect x="10" y="4" width="1" height="1" fill="#e24a5c"/><rect x="3" y="19" width="1" height="1" fill="#d42038"/><rect x="9" y="6" width="1" height="1" fill="#d42038"/><rect x="7" y="2" width="1" height="1" fill="#d42038"/><rect x="1" y="20" width="1" height="1" fill="#e24a5c"/><rect x="8" y="10" width="1" height="1" fill="#ee8290"/><rect x="9" y="21" width="1" height="1" fill="#d42038"/><rect x="13" y="8" width="1" height="1" fill="#dc3448"/><rect x="12" y="4" width="1" height="1" fill="#dc3448"/><rect x="3" y="9" width="1" height="1" fill="#f2a4ae"/><rect x="3" y="15" width="1" height="1" fill="#d42038"/><rect x="2" y="17" width="1" height="1" fill="#d42038"/><rect x="13" y="11" width="1" height="1" fill="#f2a4ae"/><rect x="16" y="21" width="1" height="1" fill="#e24a5c"/><rect x="14" y="22" width="1" height="1" fill="#dc3448"/><rect x="20" y="21" width="1" height="1" fill="#ee8290"/><rect x="15" y="2" width="1" height="1" fill="#d42038"/><rect x="20" y="17" width="1" height="1" fill="#dc3448"/><rect x="3" y="7" width="1" height="1" fill="#d42038"/><rect x="2" y="19" width="1" height="1" fill="#f2a4ae"/><rect x="0" y="10" width="1" height="1" fill="#f2a4ae"/><rect x="0" y="7" width="1" height="1" fill="#d42038"/><rect x="12" y="14" width="1" height="1" fill="#f2a4ae"/><rect x="23" y="8" width="1" height="1" fill="#d42038"/><rect x="16" y="16" width="1" height="1" fill="#dc3448"/><rect x="12" y="21" width="1" height="1" fill="#ee8290"/><rect x="4" y="12" width="1" height="1" fill="#d42038"/><rect x="11" y="12" width="1" height="1" fill="#ee8290"/><rect x="5" y="8" width="1" height="1" fill="#e24a5c"/></pattern><pattern id="spW" patternUnits="userSpaceOnUse" width="24" height="24"><rect width="24" height="24" fill="#ffffff"/><rect x="8" y="18" width="1" height="1" fill="#e24a5c"/><rect x="9" y="20" width="1" height="1" fill="#dc3448"/><rect x="19" y="15" width="1" height="1" fill="#dc3448"/><rect x="21" y="1" width="1" height="1" fill="#dc3448"/><rect x="16" y="7" width="1" height="1" fill="#dc3448"/><rect x="3" y="6" width="1" height="1" fill="#ee8290"/><rect x="20" y="10" width="1" height="1" fill="#d42038"/><rect x="12" y="6" width="1" height="1" fill="#e24a5c"/><rect x="1" y="23" width="1" height="1" fill="#d42038"/><rect x="8" y="11" width="1" height="1" fill="#dc3448"/><rect x="3" y="7" width="1" height="1" fill="#dc3448"/><rect x="6" y="6" width="1" height="1" fill="#f2a4ae"/><rect x="14" y="3" width="1" height="1" fill="#dc3448"/><rect x="10" y="20" width="1" height="1" fill="#d42038"/><rect x="12" y="23" width="1" height="1" fill="#d42038"/><rect x="5" y="16" width="1" height="1" fill="#dc3448"/><rect x="0" y="12" width="1" height="1" fill="#f2a4ae"/><rect x="20" y="13" width="1" height="1" fill="#dc3448"/><rect x="2" y="14" width="1" height="1" fill="#dc3448"/><rect x="20" y="17" width="1" height="1" fill="#e24a5c"/><rect x="11" y="11" width="1" height="1" fill="#d42038"/><rect x="4" y="5" width="1" height="1" fill="#e24a5c"/><rect x="9" y="6" width="1" height="1" fill="#e24a5c"/><rect x="20" y="21" width="1" height="1" fill="#e24a5c"/><rect x="12" y="9" width="1" height="1" fill="#f2a4ae"/><rect x="22" y="0" width="1" height="1" fill="#d42038"/><rect x="12" y="4" width="1" height="1" fill="#dc3448"/><rect x="19" y="19" width="1" height="1" fill="#d42038"/><rect x="19" y="21" width="1" height="1" fill="#f2a4ae"/><rect x="22" y="19" width="1" height="1" fill="#d42038"/><rect x="5" y="1" width="1" height="1" fill="#d42038"/><rect x="8" y="12" width="1" height="1" fill="#e24a5c"/><rect x="13" y="7" width="1" height="1" fill="#e24a5c"/><rect x="3" y="15" width="1" height="1" fill="#f2a4ae"/><rect x="20" y="4" width="1" height="1" fill="#d42038"/><rect x="0" y="17" width="1" height="1" fill="#ee8290"/><rect x="12" y="8" width="1" height="1" fill="#e24a5c"/><rect x="19" y="13" width="1" height="1" fill="#ee8290"/><rect x="23" y="18" width="1" height="1" fill="#f2a4ae"/><rect x="21" y="14" width="1" height="1" fill="#dc3448"/><rect x="19" y="4" width="1" height="1" fill="#d42038"/><rect x="23" y="3" width="1" height="1" fill="#d42038"/><rect x="16" y="12" width="1" height="1" fill="#d42038"/><rect x="8" y="22" width="1" height="1" fill="#ee8290"/><rect x="8" y="23" width="1" height="1" fill="#f2a4ae"/><rect x="3" y="4" width="1" height="1" fill="#f2a4ae"/><rect x="3" y="20" width="1" height="1" fill="#e24a5c"/><rect x="6" y="1" width="1" height="1" fill="#dc3448"/><rect x="11" y="4" width="1" height="1" fill="#ee8290"/><rect x="15" y="8" width="1" height="1" fill="#e24a5c"/><rect x="5" y="15" width="1" height="1" fill="#f2a4ae"/><rect x="21" y="16" width="1" height="1" fill="#d42038"/><rect x="11" y="22" width="1" height="1" fill="#d42038"/><rect x="4" y="19" width="1" height="1" fill="#f2a4ae"/><rect x="15" y="13" width="1" height="1" fill="#ee8290"/><rect x="23" y="22" width="1" height="1" fill="#dc3448"/><rect x="21" y="5" width="1" height="1" fill="#ee8290"/><rect x="23" y="4" width="1" height="1" fill="#ee8290"/><rect x="16" y="19" width="1" height="1" fill="#e24a5c"/><rect x="1" y="1" width="1" height="1" fill="#dc3448"/><rect x="6" y="18" width="1" height="1" fill="#f2a4ae"/><rect x="0" y="3" width="1" height="1" fill="#e24a5c"/><rect x="20" y="23" width="1" height="1" fill="#f2a4ae"/><rect x="19" y="5" width="1" height="1" fill="#e24a5c"/><rect x="17" y="7" width="1" height="1" fill="#d42038"/><rect x="6" y="10" width="1" height="1" fill="#dc3448"/><rect x="15" y="12" width="1" height="1" fill="#ee8290"/><rect x="3" y="0" width="1" height="1" fill="#d42038"/><rect x="8" y="21" width="1" height="1" fill="#d42038"/><rect x="7" y="8" width="1" height="1" fill="#e24a5c"/><rect x="8" y="0" width="1" height="1" fill="#dc3448"/><rect x="6" y="17" width="1" height="1" fill="#dc3448"/><rect x="2" y="13" width="1" height="1" fill="#d42038"/><rect x="17" y="22" width="1" height="1" fill="#ee8290"/><rect x="7" y="1" width="1" height="1" fill="#e24a5c"/><rect x="0" y="0" width="1" height="1" fill="#dc3448"/><rect x="6" y="22" width="1" height="1" fill="#ee8290"/><rect x="16" y="0" width="1" height="1" fill="#e24a5c"/><rect x="7" y="5" width="1" height="1" fill="#dc3448"/><rect x="17" y="21" width="1" height="1" fill="#d42038"/><rect x="23" y="14" width="1" height="1" fill="#ee8290"/><rect x="21" y="9" width="1" height="1" fill="#dc3448"/><rect x="20" y="1" width="1" height="1" fill="#ee8290"/><rect x="19" y="18" width="1" height="1" fill="#dc3448"/><rect x="4" y="4" width="1" height="1" fill="#e24a5c"/><rect x="15" y="5" width="1" height="1" fill="#d42038"/><rect x="0" y="6" width="1" height="1" fill="#ee8290"/><rect x="21" y="8" width="1" height="1" fill="#f2a4ae"/><rect x="15" y="18" width="1" height="1" fill="#d42038"/><rect x="6" y="4" width="1" height="1" fill="#e24a5c"/><rect x="5" y="9" width="1" height="1" fill="#dc3448"/><rect x="7" y="22" width="1" height="1" fill="#e24a5c"/><rect x="1" y="9" width="1" height="1" fill="#ee8290"/><rect x="8" y="9" width="1" height="1" fill="#e24a5c"/><rect x="8" y="7" width="1" height="1" fill="#e24a5c"/><rect x="18" y="13" width="1" height="1" fill="#dc3448"/><rect x="12" y="13" width="1" height="1" fill="#e24a5c"/><rect x="1" y="15" width="1" height="1" fill="#ee8290"/><rect x="7" y="16" width="1" height="1" fill="#ee8290"/><rect x="19" y="17" width="1" height="1" fill="#d42038"/><rect x="9" y="3" width="1" height="1" fill="#f2a4ae"/><rect x="16" y="2" width="1" height="1" fill="#dc3448"/><rect x="5" y="20" width="1" height="1" fill="#f2a4ae"/><rect x="18" y="5" width="1" height="1" fill="#e24a5c"/><rect x="1" y="0" width="1" height="1" fill="#e24a5c"/><rect x="5" y="23" width="1" height="1" fill="#dc3448"/><rect x="2" y="4" width="1" height="1" fill="#dc3448"/><rect x="1" y="2" width="1" height="1" fill="#d42038"/><rect x="17" y="19" width="1" height="1" fill="#f2a4ae"/><rect x="14" y="2" width="1" height="1" fill="#e24a5c"/><rect x="6" y="2" width="1" height="1" fill="#dc3448"/><rect x="13" y="13" width="1" height="1" fill="#d42038"/><rect x="22" y="2" width="1" height="1" fill="#e24a5c"/><rect x="5" y="7" width="1" height="1" fill="#d42038"/><rect x="23" y="8" width="1" height="1" fill="#f2a4ae"/><rect x="9" y="7" width="1" height="1" fill="#e24a5c"/><rect x="10" y="21" width="1" height="1" fill="#dc3448"/><rect x="21" y="0" width="1" height="1" fill="#d42038"/><rect x="4" y="1" width="1" height="1" fill="#d42038"/><rect x="16" y="11" width="1" height="1" fill="#e24a5c"/><rect x="7" y="23" width="1" height="1" fill="#dc3448"/><rect x="16" y="17" width="1" height="1" fill="#dc3448"/><rect x="22" y="20" width="1" height="1" fill="#ee8290"/><rect x="18" y="20" width="1" height="1" fill="#d42038"/><rect x="0" y="14" width="1" height="1" fill="#d42038"/><rect x="21" y="7" width="1" height="1" fill="#e24a5c"/><rect x="16" y="5" width="1" height="1" fill="#ee8290"/><rect x="13" y="11" width="1" height="1" fill="#e24a5c"/><rect x="22" y="16" width="1" height="1" fill="#e24a5c"/><rect x="11" y="19" width="1" height="1" fill="#f2a4ae"/><rect x="11" y="17" width="1" height="1" fill="#dc3448"/><rect x="4" y="8" width="1" height="1" fill="#d42038"/><rect x="21" y="22" width="1" height="1" fill="#ee8290"/><rect x="1" y="17" width="1" height="1" fill="#dc3448"/><rect x="21" y="12" width="1" height="1" fill="#ee8290"/><rect x="15" y="14" width="1" height="1" fill="#ee8290"/><rect x="23" y="23" width="1" height="1" fill="#dc3448"/><rect x="9" y="14" width="1" height="1" fill="#e24a5c"/><rect x="13" y="2" width="1" height="1" fill="#d42038"/><rect x="16" y="1" width="1" height="1" fill="#d42038"/><rect x="2" y="22" width="1" height="1" fill="#d42038"/><rect x="13" y="17" width="1" height="1" fill="#ee8290"/><rect x="19" y="9" width="1" height="1" fill="#d42038"/><rect x="10" y="8" width="1" height="1" fill="#ee8290"/><rect x="18" y="9" width="1" height="1" fill="#dc3448"/><rect x="20" y="0" width="1" height="1" fill="#d42038"/><rect x="2" y="17" width="1" height="1" fill="#f2a4ae"/><rect x="22" y="14" width="1" height="1" fill="#e24a5c"/><rect x="10" y="1" width="1" height="1" fill="#dc3448"/><rect x="8" y="20" width="1" height="1" fill="#ee8290"/><rect x="7" y="7" width="1" height="1" fill="#ee8290"/><rect x="6" y="0" width="1" height="1" fill="#dc3448"/><rect x="6" y="8" width="1" height="1" fill="#d42038"/><rect x="5" y="10" width="1" height="1" fill="#d42038"/><rect x="20" y="7" width="1" height="1" fill="#dc3448"/><rect x="17" y="13" width="1" height="1" fill="#e24a5c"/><rect x="13" y="22" width="1" height="1" fill="#ee8290"/><rect x="5" y="13" width="1" height="1" fill="#f2a4ae"/><rect x="8" y="15" width="1" height="1" fill="#dc3448"/><rect x="13" y="23" width="1" height="1" fill="#e24a5c"/><rect x="5" y="2" width="1" height="1" fill="#ee8290"/><rect x="21" y="6" width="1" height="1" fill="#ee8290"/><rect x="10" y="7" width="1" height="1" fill="#dc3448"/><rect x="11" y="21" width="1" height="1" fill="#d42038"/><rect x="14" y="6" width="1" height="1" fill="#dc3448"/><rect x="20" y="2" width="1" height="1" fill="#e24a5c"/><rect x="20" y="14" width="1" height="1" fill="#dc3448"/><rect x="3" y="13" width="1" height="1" fill="#d42038"/><rect x="18" y="2" width="1" height="1" fill="#dc3448"/><rect x="3" y="10" width="1" height="1" fill="#d42038"/><rect x="1" y="14" width="1" height="1" fill="#dc3448"/><rect x="4" y="10" width="1" height="1" fill="#d42038"/><rect x="10" y="16" width="1" height="1" fill="#d42038"/><rect x="10" y="14" width="1" height="1" fill="#ee8290"/><rect x="20" y="22" width="1" height="1" fill="#e24a5c"/><rect x="4" y="16" width="1" height="1" fill="#d42038"/><rect x="9" y="15" width="1" height="1" fill="#f2a4ae"/><rect x="7" y="2" width="1" height="1" fill="#ee8290"/><rect x="16" y="4" width="1" height="1" fill="#ee8290"/><rect x="18" y="6" width="1" height="1" fill="#ee8290"/><rect x="9" y="2" width="1" height="1" fill="#ee8290"/><rect x="2" y="23" width="1" height="1" fill="#f2a4ae"/><rect x="11" y="16" width="1" height="1" fill="#d42038"/><rect x="4" y="2" width="1" height="1" fill="#ee8290"/><rect x="5" y="4" width="1" height="1" fill="#ee8290"/><rect x="1" y="22" width="1" height="1" fill="#ee8290"/><rect x="3" y="17" width="1" height="1" fill="#ee8290"/><rect x="17" y="17" width="1" height="1" fill="#d42038"/><rect x="11" y="20" width="1" height="1" fill="#f2a4ae"/><rect x="16" y="6" width="1" height="1" fill="#d42038"/><rect x="6" y="19" width="1" height="1" fill="#d42038"/><rect x="18" y="18" width="1" height="1" fill="#e24a5c"/><rect x="7" y="20" width="1" height="1" fill="#d42038"/><rect x="5" y="12" width="1" height="1" fill="#dc3448"/><rect x="12" y="3" width="1" height="1" fill="#dc3448"/><rect x="4" y="7" width="1" height="1" fill="#dc3448"/><rect x="0" y="10" width="1" height="1" fill="#ee8290"/><rect x="8" y="19" width="1" height="1" fill="#dc3448"/><rect x="8" y="4" width="1" height="1" fill="#dc3448"/><rect x="17" y="12" width="1" height="1" fill="#e24a5c"/><rect x="21" y="23" width="1" height="1" fill="#dc3448"/><rect x="4" y="11" width="1" height="1" fill="#e24a5c"/><rect x="23" y="20" width="1" height="1" fill="#d42038"/><rect x="5" y="18" width="1" height="1" fill="#ee8290"/><rect x="22" y="8" width="1" height="1" fill="#e24a5c"/><rect x="1" y="7" width="1" height="1" fill="#f2a4ae"/><rect x="10" y="15" width="1" height="1" fill="#e24a5c"/><rect x="5" y="22" width="1" height="1" fill="#ee8290"/><rect x="23" y="16" width="1" height="1" fill="#ee8290"/><rect x="22" y="18" width="1" height="1" fill="#dc3448"/><rect x="2" y="16" width="1" height="1" fill="#ee8290"/><rect x="14" y="15" width="1" height="1" fill="#f2a4ae"/><rect x="10" y="17" width="1" height="1" fill="#d42038"/><rect x="11" y="6" width="1" height="1" fill="#f2a4ae"/><rect x="13" y="10" width="1" height="1" fill="#e24a5c"/><rect x="4" y="14" width="1" height="1" fill="#dc3448"/><rect x="23" y="15" width="1" height="1" fill="#e24a5c"/><rect x="21" y="15" width="1" height="1" fill="#e24a5c"/></pattern><pattern id="spM" patternUnits="userSpaceOnUse" width="24" height="24"><rect width="24" height="24" fill="#ffffff"/><rect x="17" y="9" width="1" height="1" fill="#d42038"/><rect x="2" y="18" width="1" height="1" fill="#e24a5c"/><rect x="1" y="10" width="1" height="1" fill="#ee8290"/><rect x="20" y="13" width="1" height="1" fill="#dc3448"/><rect x="23" y="13" width="1" height="1" fill="#ee8290"/><rect x="23" y="5" width="1" height="1" fill="#d42038"/><rect x="13" y="21" width="1" height="1" fill="#dc3448"/><rect x="6" y="20" width="1" height="1" fill="#f2a4ae"/><rect x="18" y="4" width="1" height="1" fill="#f2a4ae"/><rect x="4" y="11" width="1" height="1" fill="#d42038"/><rect x="3" y="1" width="1" height="1" fill="#d42038"/><rect x="11" y="7" width="1" height="1" fill="#e24a5c"/><rect x="3" y="14" width="1" height="1" fill="#d42038"/><rect x="8" y="21" width="1" height="1" fill="#ee8290"/><rect x="4" y="2" width="1" height="1" fill="#f2a4ae"/><rect x="17" y="23" width="1" height="1" fill="#d42038"/><rect x="21" y="6" width="1" height="1" fill="#d42038"/><rect x="19" y="1" width="1" height="1" fill="#f2a4ae"/><rect x="7" y="9" width="1" height="1" fill="#dc3448"/><rect x="9" y="23" width="1" height="1" fill="#e24a5c"/><rect x="5" y="16" width="1" height="1" fill="#d42038"/><rect x="17" y="18" width="1" height="1" fill="#d42038"/><rect x="19" y="15" width="1" height="1" fill="#f2a4ae"/><rect x="10" y="0" width="1" height="1" fill="#d42038"/><rect x="22" y="23" width="1" height="1" fill="#e24a5c"/><rect x="5" y="4" width="1" height="1" fill="#e24a5c"/><rect x="12" y="12" width="1" height="1" fill="#dc3448"/><rect x="22" y="21" width="1" height="1" fill="#ee8290"/><rect x="11" y="22" width="1" height="1" fill="#e24a5c"/><rect x="11" y="10" width="1" height="1" fill="#e24a5c"/><rect x="15" y="21" width="1" height="1" fill="#d42038"/><rect x="10" y="20" width="1" height="1" fill="#ee8290"/><rect x="11" y="2" width="1" height="1" fill="#f2a4ae"/><rect x="8" y="11" width="1" height="1" fill="#ee8290"/><rect x="18" y="17" width="1" height="1" fill="#e24a5c"/><rect x="10" y="13" width="1" height="1" fill="#ee8290"/><rect x="7" y="22" width="1" height="1" fill="#f2a4ae"/><rect x="10" y="11" width="1" height="1" fill="#ee8290"/><rect x="10" y="1" width="1" height="1" fill="#dc3448"/><rect x="6" y="13" width="1" height="1" fill="#e24a5c"/><rect x="12" y="0" width="1" height="1" fill="#ee8290"/><rect x="8" y="0" width="1" height="1" fill="#f2a4ae"/><rect x="13" y="22" width="1" height="1" fill="#dc3448"/><rect x="23" y="22" width="1" height="1" fill="#e24a5c"/><rect x="16" y="21" width="1" height="1" fill="#f2a4ae"/><rect x="10" y="17" width="1" height="1" fill="#ee8290"/><rect x="22" y="10" width="1" height="1" fill="#f2a4ae"/><rect x="21" y="15" width="1" height="1" fill="#f2a4ae"/><rect x="9" y="20" width="1" height="1" fill="#e24a5c"/><rect x="4" y="6" width="1" height="1" fill="#ee8290"/><rect x="19" y="19" width="1" height="1" fill="#ee8290"/><rect x="1" y="13" width="1" height="1" fill="#d42038"/><rect x="4" y="8" width="1" height="1" fill="#e24a5c"/><rect x="0" y="4" width="1" height="1" fill="#e24a5c"/><rect x="20" y="6" width="1" height="1" fill="#dc3448"/><rect x="21" y="23" width="1" height="1" fill="#e24a5c"/><rect x="19" y="3" width="1" height="1" fill="#ee8290"/><rect x="15" y="22" width="1" height="1" fill="#ee8290"/><rect x="1" y="17" width="1" height="1" fill="#dc3448"/><rect x="22" y="20" width="1" height="1" fill="#e24a5c"/><rect x="9" y="22" width="1" height="1" fill="#ee8290"/><rect x="5" y="2" width="1" height="1" fill="#d42038"/><rect x="2" y="3" width="1" height="1" fill="#f2a4ae"/><rect x="8" y="2" width="1" height="1" fill="#d42038"/><rect x="8" y="6" width="1" height="1" fill="#ee8290"/><rect x="19" y="20" width="1" height="1" fill="#dc3448"/><rect x="1" y="14" width="1" height="1" fill="#f2a4ae"/><rect x="22" y="11" width="1" height="1" fill="#f2a4ae"/><rect x="10" y="22" width="1" height="1" fill="#f2a4ae"/><rect x="18" y="11" width="1" height="1" fill="#d42038"/><rect x="3" y="19" width="1" height="1" fill="#ee8290"/><rect x="9" y="13" width="1" height="1" fill="#f2a4ae"/><rect x="12" y="20" width="1" height="1" fill="#dc3448"/><rect x="5" y="13" width="1" height="1" fill="#ee8290"/><rect x="16" y="12" width="1" height="1" fill="#ee8290"/><rect x="16" y="14" width="1" height="1" fill="#dc3448"/><rect x="14" y="4" width="1" height="1" fill="#ee8290"/><rect x="20" y="4" width="1" height="1" fill="#f2a4ae"/><rect x="0" y="3" width="1" height="1" fill="#e24a5c"/><rect x="2" y="6" width="1" height="1" fill="#ee8290"/><rect x="13" y="14" width="1" height="1" fill="#ee8290"/><rect x="12" y="17" width="1" height="1" fill="#d42038"/><rect x="15" y="3" width="1" height="1" fill="#dc3448"/><rect x="13" y="5" width="1" height="1" fill="#e24a5c"/><rect x="7" y="11" width="1" height="1" fill="#e24a5c"/><rect x="4" y="15" width="1" height="1" fill="#f2a4ae"/><rect x="0" y="19" width="1" height="1" fill="#d42038"/><rect x="7" y="20" width="1" height="1" fill="#ee8290"/><rect x="7" y="6" width="1" height="1" fill="#f2a4ae"/><rect x="3" y="0" width="1" height="1" fill="#ee8290"/><rect x="0" y="22" width="1" height="1" fill="#ee8290"/><rect x="21" y="19" width="1" height="1" fill="#f2a4ae"/><rect x="5" y="10" width="1" height="1" fill="#ee8290"/><rect x="20" y="9" width="1" height="1" fill="#d42038"/><rect x="12" y="18" width="1" height="1" fill="#d42038"/><rect x="15" y="14" width="1" height="1" fill="#e24a5c"/><rect x="23" y="17" width="1" height="1" fill="#e24a5c"/><rect x="19" y="11" width="1" height="1" fill="#ee8290"/><rect x="20" y="18" width="1" height="1" fill="#f2a4ae"/><rect x="23" y="23" width="1" height="1" fill="#dc3448"/><rect x="0" y="5" width="1" height="1" fill="#dc3448"/><rect x="17" y="11" width="1" height="1" fill="#f2a4ae"/><rect x="6" y="23" width="1" height="1" fill="#ee8290"/><rect x="8" y="17" width="1" height="1" fill="#d42038"/><rect x="14" y="11" width="1" height="1" fill="#e24a5c"/><rect x="21" y="4" width="1" height="1" fill="#dc3448"/><rect x="3" y="22" width="1" height="1" fill="#e24a5c"/><rect x="20" y="12" width="1" height="1" fill="#f2a4ae"/><rect x="6" y="15" width="1" height="1" fill="#d42038"/><rect x="1" y="15" width="1" height="1" fill="#d42038"/><rect x="19" y="21" width="1" height="1" fill="#d42038"/><rect x="0" y="16" width="1" height="1" fill="#d42038"/><rect x="16" y="23" width="1" height="1" fill="#f2a4ae"/><rect x="22" y="12" width="1" height="1" fill="#ee8290"/><rect x="11" y="16" width="1" height="1" fill="#ee8290"/><rect x="10" y="7" width="1" height="1" fill="#d42038"/><rect x="1" y="8" width="1" height="1" fill="#f2a4ae"/><rect x="8" y="16" width="1" height="1" fill="#ee8290"/><rect x="21" y="9" width="1" height="1" fill="#f2a4ae"/><rect x="19" y="7" width="1" height="1" fill="#e24a5c"/><rect x="8" y="10" width="1" height="1" fill="#dc3448"/><rect x="14" y="3" width="1" height="1" fill="#f2a4ae"/><rect x="11" y="17" width="1" height="1" fill="#ee8290"/><rect x="3" y="7" width="1" height="1" fill="#f2a4ae"/><rect x="13" y="15" width="1" height="1" fill="#e24a5c"/><rect x="11" y="9" width="1" height="1" fill="#e24a5c"/><rect x="1" y="22" width="1" height="1" fill="#ee8290"/><rect x="22" y="5" width="1" height="1" fill="#f2a4ae"/><rect x="3" y="11" width="1" height="1" fill="#dc3448"/><rect x="22" y="14" width="1" height="1" fill="#e24a5c"/><rect x="14" y="20" width="1" height="1" fill="#e24a5c"/><rect x="5" y="18" width="1" height="1" fill="#d42038"/><rect x="19" y="16" width="1" height="1" fill="#e24a5c"/><rect x="6" y="1" width="1" height="1" fill="#e24a5c"/><rect x="14" y="5" width="1" height="1" fill="#dc3448"/><rect x="22" y="8" width="1" height="1" fill="#d42038"/><rect x="23" y="10" width="1" height="1" fill="#d42038"/><rect x="1" y="2" width="1" height="1" fill="#e24a5c"/><rect x="19" y="22" width="1" height="1" fill="#ee8290"/><rect x="22" y="17" width="1" height="1" fill="#dc3448"/><rect x="12" y="2" width="1" height="1" fill="#ee8290"/><rect x="7" y="14" width="1" height="1" fill="#d42038"/><rect x="8" y="20" width="1" height="1" fill="#d42038"/><rect x="18" y="7" width="1" height="1" fill="#f2a4ae"/><rect x="0" y="9" width="1" height="1" fill="#ee8290"/><rect x="16" y="8" width="1" height="1" fill="#f2a4ae"/><rect x="17" y="2" width="1" height="1" fill="#f2a4ae"/><rect x="7" y="18" width="1" height="1" fill="#dc3448"/><rect x="13" y="17" width="1" height="1" fill="#f2a4ae"/><rect x="4" y="4" width="1" height="1" fill="#f2a4ae"/><rect x="8" y="8" width="1" height="1" fill="#dc3448"/><rect x="15" y="12" width="1" height="1" fill="#e24a5c"/><rect x="8" y="15" width="1" height="1" fill="#e24a5c"/><rect x="19" y="9" width="1" height="1" fill="#d42038"/><rect x="20" y="17" width="1" height="1" fill="#d42038"/><rect x="9" y="6" width="1" height="1" fill="#d42038"/><rect x="3" y="8" width="1" height="1" fill="#f2a4ae"/><rect x="9" y="0" width="1" height="1" fill="#d42038"/><rect x="2" y="10" width="1" height="1" fill="#dc3448"/><rect x="22" y="13" width="1" height="1" fill="#e24a5c"/><rect x="17" y="15" width="1" height="1" fill="#e24a5c"/><rect x="12" y="7" width="1" height="1" fill="#e24a5c"/><rect x="17" y="20" width="1" height="1" fill="#d42038"/><rect x="9" y="19" width="1" height="1" fill="#d42038"/><rect x="16" y="11" width="1" height="1" fill="#d42038"/><rect x="18" y="15" width="1" height="1" fill="#f2a4ae"/><rect x="22" y="4" width="1" height="1" fill="#f2a4ae"/><rect x="0" y="7" width="1" height="1" fill="#e24a5c"/><rect x="18" y="6" width="1" height="1" fill="#e24a5c"/><rect x="11" y="18" width="1" height="1" fill="#dc3448"/><rect x="21" y="17" width="1" height="1" fill="#e24a5c"/><rect x="13" y="16" width="1" height="1" fill="#f2a4ae"/><rect x="18" y="14" width="1" height="1" fill="#f2a4ae"/><rect x="1" y="21" width="1" height="1" fill="#f2a4ae"/><rect x="12" y="5" width="1" height="1" fill="#dc3448"/><rect x="13" y="6" width="1" height="1" fill="#f2a4ae"/><rect x="7" y="21" width="1" height="1" fill="#e24a5c"/><rect x="15" y="17" width="1" height="1" fill="#f2a4ae"/><rect x="10" y="18" width="1" height="1" fill="#ee8290"/><rect x="3" y="15" width="1" height="1" fill="#d42038"/><rect x="3" y="2" width="1" height="1" fill="#ee8290"/><rect x="7" y="10" width="1" height="1" fill="#d42038"/><rect x="18" y="10" width="1" height="1" fill="#dc3448"/><rect x="3" y="10" width="1" height="1" fill="#f2a4ae"/><rect x="22" y="15" width="1" height="1" fill="#d42038"/><rect x="20" y="21" width="1" height="1" fill="#dc3448"/><rect x="23" y="21" width="1" height="1" fill="#dc3448"/><rect x="2" y="7" width="1" height="1" fill="#dc3448"/><rect x="8" y="4" width="1" height="1" fill="#d42038"/><rect x="22" y="1" width="1" height="1" fill="#dc3448"/><rect x="16" y="1" width="1" height="1" fill="#e24a5c"/><rect x="4" y="5" width="1" height="1" fill="#e24a5c"/><rect x="6" y="10" width="1" height="1" fill="#d42038"/><rect x="2" y="16" width="1" height="1" fill="#ee8290"/><rect x="20" y="5" width="1" height="1" fill="#e24a5c"/><rect x="19" y="4" width="1" height="1" fill="#d42038"/><rect x="6" y="17" width="1" height="1" fill="#d42038"/><rect x="1" y="3" width="1" height="1" fill="#ee8290"/><rect x="12" y="23" width="1" height="1" fill="#ee8290"/><rect x="13" y="13" width="1" height="1" fill="#d42038"/><rect x="21" y="7" width="1" height="1" fill="#ee8290"/><rect x="1" y="20" width="1" height="1" fill="#f2a4ae"/><rect x="15" y="4" width="1" height="1" fill="#dc3448"/><rect x="19" y="12" width="1" height="1" fill="#f2a4ae"/><rect x="14" y="16" width="1" height="1" fill="#ee8290"/><rect x="17" y="22" width="1" height="1" fill="#ee8290"/><rect x="18" y="19" width="1" height="1" fill="#e24a5c"/><rect x="4" y="17" width="1" height="1" fill="#d42038"/><rect x="17" y="16" width="1" height="1" fill="#f2a4ae"/><rect x="17" y="7" width="1" height="1" fill="#d42038"/><rect x="13" y="2" width="1" height="1" fill="#e24a5c"/><rect x="23" y="2" width="1" height="1" fill="#ee8290"/><rect x="10" y="2" width="1" height="1" fill="#e24a5c"/><rect x="3" y="21" width="1" height="1" fill="#e24a5c"/><rect x="12" y="1" width="1" height="1" fill="#e24a5c"/><rect x="20" y="10" width="1" height="1" fill="#ee8290"/><rect x="0" y="21" width="1" height="1" fill="#e24a5c"/><rect x="8" y="12" width="1" height="1" fill="#dc3448"/><rect x="11" y="1" width="1" height="1" fill="#ee8290"/><rect x="19" y="18" width="1" height="1" fill="#f2a4ae"/><rect x="16" y="3" width="1" height="1" fill="#e24a5c"/><rect x="7" y="15" width="1" height="1" fill="#dc3448"/><rect x="2" y="15" width="1" height="1" fill="#f2a4ae"/><rect x="3" y="4" width="1" height="1" fill="#dc3448"/><rect x="5" y="6" width="1" height="1" fill="#dc3448"/><rect x="23" y="9" width="1" height="1" fill="#f2a4ae"/><rect x="14" y="23" width="1" height="1" fill="#d42038"/><rect x="11" y="23" width="1" height="1" fill="#d42038"/><rect x="14" y="8" width="1" height="1" fill="#dc3448"/><rect x="20" y="2" width="1" height="1" fill="#e24a5c"/><rect x="18" y="9" width="1" height="1" fill="#f2a4ae"/><rect x="6" y="21" width="1" height="1" fill="#ee8290"/><rect x="2" y="12" width="1" height="1" fill="#e24a5c"/><rect x="8" y="7" width="1" height="1" fill="#dc3448"/><rect x="20" y="1" width="1" height="1" fill="#f2a4ae"/><rect x="9" y="17" width="1" height="1" fill="#f2a4ae"/><rect x="18" y="21" width="1" height="1" fill="#d42038"/><rect x="13" y="9" width="1" height="1" fill="#f2a4ae"/><rect x="6" y="12" width="1" height="1" fill="#e24a5c"/><rect x="13" y="20" width="1" height="1" fill="#e24a5c"/><rect x="8" y="23" width="1" height="1" fill="#d42038"/><rect x="18" y="8" width="1" height="1" fill="#d42038"/><rect x="12" y="10" width="1" height="1" fill="#d42038"/><rect x="5" y="7" width="1" height="1" fill="#d42038"/><rect x="9" y="1" width="1" height="1" fill="#f2a4ae"/><rect x="14" y="6" width="1" height="1" fill="#e24a5c"/><rect x="20" y="8" width="1" height="1" fill="#ee8290"/><rect x="9" y="12" width="1" height="1" fill="#e24a5c"/><rect x="22" y="2" width="1" height="1" fill="#d42038"/><rect x="9" y="8" width="1" height="1" fill="#d42038"/><rect x="21" y="1" width="1" height="1" fill="#d42038"/><rect x="0" y="11" width="1" height="1" fill="#e24a5c"/><rect x="0" y="1" width="1" height="1" fill="#d42038"/><rect x="13" y="4" width="1" height="1" fill="#d42038"/><rect x="10" y="10" width="1" height="1" fill="#d42038"/><rect x="21" y="11" width="1" height="1" fill="#d42038"/><rect x="5" y="0" width="1" height="1" fill="#f2a4ae"/><rect x="16" y="20" width="1" height="1" fill="#ee8290"/><rect x="13" y="10" width="1" height="1" fill="#e24a5c"/><rect x="9" y="18" width="1" height="1" fill="#f2a4ae"/><rect x="15" y="16" width="1" height="1" fill="#d42038"/><rect x="23" y="20" width="1" height="1" fill="#dc3448"/><rect x="14" y="22" width="1" height="1" fill="#d42038"/><rect x="20" y="16" width="1" height="1" fill="#e24a5c"/></pattern><pattern id="bkD" patternUnits="userSpaceOnUse" width="30" height="30"><rect x="0" y="0" width="5" height="5" fill="#2e2e2e"/><rect x="0" y="5" width="5" height="5" fill="#2e2e2e"/><rect x="0" y="10" width="5" height="5" fill="#202020"/><rect x="0" y="15" width="5" height="5" fill="#202020"/><rect x="0" y="20" width="5" height="5" fill="#202020"/><rect x="0" y="25" width="5" height="5" fill="#6e6e6e"/><rect x="5" y="0" width="5" height="5" fill="#202020"/><rect x="5" y="5" width="5" height="5" fill="#6e6e6e"/><rect x="5" y="10" width="5" height="5" fill="#6e6e6e"/><rect x="5" y="15" width="5" height="5" fill="#3c3c3c"/><rect x="5" y="20" width="5" height="5" fill="#4a4a4a"/><rect x="5" y="25" width="5" height="5" fill="#202020"/><rect x="10" y="0" width="5" height="5" fill="#2e2e2e"/><rect x="10" y="5" width="5" height="5" fill="#202020"/><rect x="10" y="10" width="5" height="5" fill="#6e6e6e"/><rect x="10" y="15" width="5" height="5" fill="#2e2e2e"/><rect x="10" y="20" width="5" height="5" fill="#3c3c3c"/><rect x="10" y="25" width="5" height="5" fill="#3c3c3c"/><rect x="15" y="0" width="5" height="5" fill="#3c3c3c"/><rect x="15" y="5" width="5" height="5" fill="#4a4a4a"/><rect x="15" y="10" width="5" height="5" fill="#3c3c3c"/><rect x="15" y="15" width="5" height="5" fill="#202020"/><rect x="15" y="20" width="5" height="5" fill="#3c3c3c"/><rect x="15" y="25" width="5" height="5" fill="#3c3c3c"/><rect x="20" y="0" width="5" height="5" fill="#3c3c3c"/><rect x="20" y="5" width="5" height="5" fill="#202020"/><rect x="20" y="10" width="5" height="5" fill="#6e6e6e"/><rect x="20" y="15" width="5" height="5" fill="#3c3c3c"/><rect x="20" y="20" width="5" height="5" fill="#3c3c3c"/><rect x="20" y="25" width="5" height="5" fill="#5c5c5c"/><rect x="25" y="0" width="5" height="5" fill="#5c5c5c"/><rect x="25" y="5" width="5" height="5" fill="#4a4a4a"/><rect x="25" y="10" width="5" height="5" fill="#3c3c3c"/><rect x="25" y="15" width="5" height="5" fill="#5c5c5c"/><rect x="25" y="20" width="5" height="5" fill="#6e6e6e"/><rect x="25" y="25" width="5" height="5" fill="#202020"/></pattern><pattern id="bkL" patternUnits="userSpaceOnUse" width="30" height="30"><rect x="0" y="0" width="5" height="5" fill="#9a9a9a"/><rect x="0" y="5" width="5" height="5" fill="#5a5a5a"/><rect x="0" y="10" width="5" height="5" fill="#9a9a9a"/><rect x="0" y="15" width="5" height="5" fill="#aaaaaa"/><rect x="0" y="20" width="5" height="5" fill="#5a5a5a"/><rect x="0" y="25" width="5" height="5" fill="#888888"/><rect x="5" y="0" width="5" height="5" fill="#9a9a9a"/><rect x="5" y="5" width="5" height="5" fill="#b4b4b4"/><rect x="5" y="10" width="5" height="5" fill="#5a5a5a"/><rect x="5" y="15" width="5" height="5" fill="#aaaaaa"/><rect x="5" y="20" width="5" height="5" fill="#aaaaaa"/><rect x="5" y="25" width="5" height="5" fill="#707070"/><rect x="10" y="0" width="5" height="5" fill="#b4b4b4"/><rect x="10" y="5" width="5" height="5" fill="#5a5a5a"/><rect x="10" y="10" width="5" height="5" fill="#aaaaaa"/><rect x="10" y="15" width="5" height="5" fill="#888888"/><rect x="10" y="20" width="5" height="5" fill="#707070"/><rect x="10" y="25" width="5" height="5" fill="#9a9a9a"/><rect x="15" y="0" width="5" height="5" fill="#5a5a5a"/><rect x="15" y="5" width="5" height="5" fill="#aaaaaa"/><rect x="15" y="10" width="5" height="5" fill="#707070"/><rect x="15" y="15" width="5" height="5" fill="#888888"/><rect x="15" y="20" width="5" height="5" fill="#5a5a5a"/><rect x="15" y="25" width="5" height="5" fill="#5a5a5a"/><rect x="20" y="0" width="5" height="5" fill="#888888"/><rect x="20" y="5" width="5" height="5" fill="#9a9a9a"/><rect x="20" y="10" width="5" height="5" fill="#5a5a5a"/><rect x="20" y="15" width="5" height="5" fill="#9a9a9a"/><rect x="20" y="20" width="5" height="5" fill="#b4b4b4"/><rect x="20" y="25" width="5" height="5" fill="#707070"/><rect x="25" y="0" width="5" height="5" fill="#9a9a9a"/><rect x="25" y="5" width="5" height="5" fill="#aaaaaa"/><rect x="25" y="10" width="5" height="5" fill="#888888"/><rect x="25" y="15" width="5" height="5" fill="#aaaaaa"/><rect x="25" y="20" width="5" height="5" fill="#888888"/><rect x="25" y="25" width="5" height="5" fill="#aaaaaa"/></pattern><clipPath id="cpFree"><polygon points="554.0,225.5 879.0,201.0 1081.0,465.0 948.0,791.0 771.0,806.0 804.0,732.0 816.0,730.0 806.0,607.0 685.0,615.0 685.0,636.0 601.0,797.0 598.0,806.0 393.0,521.0"/></clipPath><clipPath id="cpNotch"><polygon points="685,615 806,607 816,730 692,738"/></clipPath><clipPath id="cpC1"><polygon points="680.8,402.7 680.9,406.6 680.7,410.5 680.3,414.4 679.6,418.3 678.6,422.1 677.3,425.8 675.8,429.5 674.0,433.0 671.9,436.5 669.7,439.7 667.2,442.9 664.5,445.8 661.5,448.6 658.4,451.2 655.2,453.5 651.7,455.7 648.2,457.5 644.5,459.2 640.7,460.6 636.8,461.7 632.8,462.6 628.9,463.1 624.8,463.4 620.8,463.5 616.8,463.2 612.9,462.7 608.9,461.9 605.1,460.8 601.4,459.5 597.7,457.9 594.2,456.1 590.9,454.0 587.7,451.7 584.7,449.1 581.9,446.4 579.3,443.5 576.9,440.4 574.8,437.2 572.9,433.8 571.2,430.2 569.8,426.6 568.7,422.9 567.9,419.1 567.3,415.2 567.0,411.3 567.0,407.4 567.2,403.5 567.8,399.7 568.6,395.8 569.6,392.1 571.0,388.4 572.6,384.8 574.4,381.3 576.5,377.9 578.8,374.7 581.3,371.7 584.0,368.8 586.9,366.1 590.0,363.6 593.3,361.3 596.7,359.3 600.2,357.5 603.8,355.9 607.6,354.6 611.4,353.5 615.2,352.7 619.1,352.1 623.1,351.8 627.0,351.8 630.9,352.0 634.8,352.5 638.7,353.3 642.4,354.3 646.1,355.6 649.7,357.1 653.1,358.9 656.4,360.9 659.6,363.1 662.6,365.6 665.4,368.2 668.0,371.1 670.4,374.1 672.6,377.3 674.5,380.6 676.2,384.1 677.7,387.6 678.9,391.3 679.8,395.1 680.4,398.9"/></clipPath><clipPath id="cpC2"><polygon points="920.2,386.3 920.5,390.2 920.5,394.1 920.2,398.0 919.7,401.8 918.8,405.6 917.7,409.4 916.4,413.0 914.7,416.6 912.8,420.0 910.7,423.3 908.4,426.4 905.8,429.4 903.0,432.1 900.0,434.7 896.8,437.1 893.4,439.2 889.9,441.1 886.3,442.7 882.6,444.1 878.7,445.2 874.8,446.1 870.8,446.7 866.8,447.0 862.8,447.0 858.8,446.8 854.8,446.2 850.8,445.4 846.9,444.4 843.1,443.0 839.4,441.4 835.8,439.6 832.3,437.5 829.1,435.2 825.9,432.7 823.0,430.0 820.3,427.0 817.7,423.9 815.4,420.7 813.4,417.3 811.6,413.8 810.0,410.1 808.7,406.4 807.7,402.6 806.9,398.8 806.5,394.9 806.3,391.0 806.4,387.1 806.7,383.2 807.4,379.4 808.3,375.6 809.4,371.9 810.9,368.3 812.6,364.9 814.5,361.5 816.7,358.3 819.0,355.2 821.6,352.4 824.4,349.7 827.4,347.2 830.6,344.9 833.9,342.9 837.3,341.0 840.9,339.5 844.6,338.1 848.4,337.0 852.2,336.2 856.1,335.7 860.0,335.4 864.0,335.3 867.9,335.6 871.8,336.1 875.7,336.9 879.6,337.9 883.3,339.2 887.0,340.7 890.5,342.5 893.9,344.5 897.2,346.7 900.3,349.1 903.2,351.8 906.0,354.6 908.5,357.6 910.8,360.8 912.9,364.2 914.8,367.6 916.4,371.2 917.8,374.9 918.8,378.6 919.7,382.4"/></clipPath></defs><rect x="372" y="82" width="791" height="722" fill="#303030"/><polygon points="76.5,228.8 1074.8,156.5 1208.8,1096.4 25.5,1198.1" fill="#5c6f69"/><polygon points="554.0,225.5 879.0,201.0 1081.0,465.0 948.0,791.0 771.0,806.0 804.0,732.0 816.0,730.0 806.0,607.0 685.0,615.0 685.0,636.0 601.0,797.0 598.0,806.0 393.0,521.0" fill="#c1c1c1"/><polygon points="680.8,402.7 680.9,406.6 680.7,410.5 680.3,414.4 679.6,418.3 678.6,422.1 677.3,425.8 675.8,429.5 674.0,433.0 671.9,436.5 669.7,439.7 667.2,442.9 664.5,445.8 661.5,448.6 658.4,451.2 655.2,453.5 651.7,455.7 648.2,457.5 644.5,459.2 640.7,460.6 636.8,461.7 632.8,462.6 628.9,463.1 624.8,463.4 620.8,463.5 616.8,463.2 612.9,462.7 608.9,461.9 605.1,460.8 601.4,459.5 597.7,457.9 594.2,456.1 590.9,454.0 587.7,451.7 584.7,449.1 581.9,446.4 579.3,443.5 576.9,440.4 574.8,437.2 572.9,433.8 571.2,430.2 569.8,426.6 568.7,422.9 567.9,419.1 567.3,415.2 567.0,411.3 567.0,407.4 567.2,403.5 567.8,399.7 568.6,395.8 569.6,392.1 571.0,388.4 572.6,384.8 574.4,381.3 576.5,377.9 578.8,374.7 581.3,371.7 584.0,368.8 586.9,366.1 590.0,363.6 593.3,361.3 596.7,359.3 600.2,357.5 603.8,355.9 607.6,354.6 611.4,353.5 615.2,352.7 619.1,352.1 623.1,351.8 627.0,351.8 630.9,352.0 634.8,352.5 638.7,353.3 642.4,354.3 646.1,355.6 649.7,357.1 653.1,358.9 656.4,360.9 659.6,363.1 662.6,365.6 665.4,368.2 668.0,371.1 670.4,374.1 672.6,377.3 674.5,380.6 676.2,384.1 677.7,387.6 678.9,391.3 679.8,395.1 680.4,398.9" fill="#5c6f69"/><polygon points="920.2,386.3 920.5,390.2 920.5,394.1 920.2,398.0 919.7,401.8 918.8,405.6 917.7,409.4 916.4,413.0 914.7,416.6 912.8,420.0 910.7,423.3 908.4,426.4 905.8,429.4 903.0,432.1 900.0,434.7 896.8,437.1 893.4,439.2 889.9,441.1 886.3,442.7 882.6,444.1 878.7,445.2 874.8,446.1 870.8,446.7 866.8,447.0 862.8,447.0 858.8,446.8 854.8,446.2 850.8,445.4 846.9,444.4 843.1,443.0 839.4,441.4 835.8,439.6 832.3,437.5 829.1,435.2 825.9,432.7 823.0,430.0 820.3,427.0 817.7,423.9 815.4,420.7 813.4,417.3 811.6,413.8 810.0,410.1 808.7,406.4 807.7,402.6 806.9,398.8 806.5,394.9 806.3,391.0 806.4,387.1 806.7,383.2 807.4,379.4 808.3,375.6 809.4,371.9 810.9,368.3 812.6,364.9 814.5,361.5 816.7,358.3 819.0,355.2 821.6,352.4 824.4,349.7 827.4,347.2 830.6,344.9 833.9,342.9 837.3,341.0 840.9,339.5 844.6,338.1 848.4,337.0 852.2,336.2 856.1,335.7 860.0,335.4 864.0,335.3 867.9,335.6 871.8,336.1 875.7,336.9 879.6,337.9 883.3,339.2 887.0,340.7 890.5,342.5 893.9,344.5 897.2,346.7 900.3,349.1 903.2,351.8 906.0,354.6 908.5,357.6 910.8,360.8 912.9,364.2 914.8,367.6 916.4,371.2 917.8,374.9 918.8,378.6 919.7,382.4" fill="#5c6f69"/><g><rect x="598.0" y="800.8" width="5.2" height="5.2" fill="#2e2e2e"/><rect x="603.2" y="800.8" width="5.2" height="5.2" fill="#3c3c3c"/><rect x="603.2" y="795.6" width="5.2" height="5.2" fill="#8c8c8c"/><rect x="598.0" y="795.6" width="5.2" height="5.2" fill="#6e6e6e"/><rect x="598.0" y="790.4" width="5.2" height="5.2" fill="#8c8c8c"/><rect x="592.8" y="795.6" width="5.2" height="5.2" fill="#4c4c4c"/><rect x="592.8" y="790.4" width="5.2" height="5.2" fill="#2e2e2e"/><rect x="592.8" y="785.2" width="5.2" height="5.2" fill="#222222"/><rect x="587.6" y="790.4" width="5.2" height="5.2" fill="#6e6e6e"/><rect x="587.6" y="785.2" width="5.2" height="5.2" fill="#222222"/><rect x="592.8" y="780.0" width="5.2" height="5.2" fill="#aaaaaa"/><rect x="587.6" y="780.0" width="5.2" height="5.2" fill="#6e6e6e"/><rect x="582.4" y="780.0" width="5.2" height="5.2" fill="#5c5c5c"/><rect x="587.6" y="774.8" width="5.2" height="5.2" fill="#7a7a7a"/><rect x="582.4" y="774.8" width="5.2" height="5.2" fill="#6e6e6e"/><rect x="582.4" y="769.6" width="5.2" height="5.2" fill="#9c9c9c"/><rect x="577.2" y="774.8" width="5.2" height="5.2" fill="#3c3c3c"/><rect x="577.2" y="769.6" width="5.2" height="5.2" fill="#222222"/><rect x="577.2" y="764.4" width="5.2" height="5.2" fill="#4c4c4c"/><rect x="572.0" y="764.4" width="5.2" height="5.2" fill="#4c4c4c"/><rect x="572.0" y="759.2" width="5.2" height="5.2" fill="#222222"/><rect x="566.8" y="759.2" width="5.2" height="5.2" fill="#4c4c4c"/><rect x="566.8" y="754.0" width="5.2" height="5.2" fill="#222222"/><rect x="566.8" y="748.8" width="5.2" height="5.2" fill="#3c3c3c"/><rect x="561.6" y="754.0" width="5.2" height="5.2" fill="#2e2e2e"/><rect x="561.6" y="748.8" width="5.2" height="5.2" fill="#3c3c3c"/><rect x="566.8" y="743.6" width="5.2" height="5.2" fill="#9c9c9c"/><rect x="561.6" y="743.6" width="5.2" height="5.2" fill="#4c4c4c"/><rect x="556.4" y="743.6" width="5.2" height="5.2" fill="#5c5c5c"/><rect x="556.4" y="738.4" width="5.2" height="5.2" fill="#2e2e2e"/><rect x="556.4" y="733.2" width="5.2" height="5.2" fill="#aaaaaa"/><rect x="551.2" y="738.4" width="5.2" height="5.2" fill="#6e6e6e"/><rect x="551.2" y="733.2" width="5.2" height="5.2" fill="#2e2e2e"/><rect x="551.2" y="728.0" width="5.2" height="5.2" fill="#4c4c4c"/><rect x="546.0" y="728.0" width="5.2" height="5.2" fill="#2e2e2e"/><rect x="546.0" y="722.8" width="5.2" height="5.2" fill="#5c5c5c"/><rect x="540.8" y="722.8" width="5.2" height="5.2" fill="#6e6e6e"/><rect x="540.8" y="717.6" width="5.2" height="5.2" fill="#6e6e6e"/><rect x="540.8" y="712.4" width="5.2" height="5.2" fill="#7a7a7a"/><rect x="535.6" y="717.6" width="5.2" height="5.2" fill="#3c3c3c"/><rect x="535.6" y="712.4" width="5.2" height="5.2" fill="#5c5c5c"/><rect x="535.6" y="707.2" width="5.2" height="5.2" fill="#3c3c3c"/><rect x="530.4" y="707.2" width="5.2" height="5.2" fill="#5c5c5c"/><rect x="535.6" y="702.0" width="5.2" height="5.2" fill="#8c8c8c"/><rect x="530.4" y="702.0" width="5.2" height="5.2" fill="#4c4c4c"/><rect x="525.2" y="702.0" width="5.2" height="5.2" fill="#6e6e6e"/><rect x="525.2" y="696.8" width="5.2" height="5.2" fill="#6e6e6e"/><rect x="525.2" y="691.6" width="5.2" height="5.2" fill="#9c9c9c"/><rect x="520.0" y="696.8" width="5.2" height="5.2" fill="#2e2e2e"/><rect x="520.0" y="691.6" width="5.2" height="5.2" fill="#4c4c4c"/><rect x="525.2" y="686.4" width="5.2" height="5.2" fill="#aaaaaa"/><rect x="520.0" y="686.4" width="5.2" height="5.2" fill="#6e6e6e"/><rect x="514.8" y="686.4" width="5.2" height="5.2" fill="#3c3c3c"/><rect x="514.8" y="681.2" width="5.2" height="5.2" fill="#2e2e2e"/><rect x="514.8" y="676.0" width="5.2" height="5.2" fill="#8c8c8c"/><rect x="509.6" y="681.2" width="5.2" height="5.2" fill="#3c3c3c"/><rect x="509.6" y="676.0" width="5.2" height="5.2" fill="#4c4c4c"/><rect x="509.6" y="670.8" width="5.2" height="5.2" fill="#6e6e6e"/><rect x="504.4" y="670.8" width="5.2" height="5.2" fill="#6e6e6e"/><rect x="504.4" y="665.6" width="5.2" height="5.2" fill="#2e2e2e"/><rect x="499.2" y="665.6" width="5.2" height="5.2" fill="#5c5c5c"/><rect x="504.4" y="660.4" width="5.2" height="5.2" fill="#8c8c8c"/><rect x="499.2" y="660.4" width="5.2" height="5.2" fill="#3c3c3c"/><rect x="499.2" y="655.2" width="5.2" height="5.2" fill="#9c9c9c"/><rect x="494.0" y="660.4" width="5.2" height="5.2" fill="#6e6e6e"/><rect x="494.0" y="655.2" width="5.2" height="5.2" fill="#5c5c5c"/><rect x="494.0" y="650.0" width="5.2" height="5.2" fill="#2e2e2e"/><rect x="488.8" y="650.0" width="5.2" height="5.2" fill="#6e6e6e"/><rect x="494.0" y="644.8" width="5.2" height="5.2" fill="#8c8c8c"/><rect x="488.8" y="644.8" width="5.2" height="5.2" fill="#2e2e2e"/><rect x="483.6" y="644.8" width="5.2" height="5.2" fill="#6e6e6e"/><rect x="488.8" y="639.6" width="5.2" height="5.2" fill="#9c9c9c"/><rect x="483.6" y="639.6" width="5.2" height="5.2" fill="#5c5c5c"/><rect x="478.4" y="639.6" width="5.2" height="5.2" fill="#3c3c3c"/><rect x="478.4" y="634.4" width="5.2" height="5.2" fill="#2e2e2e"/><rect x="478.4" y="629.2" width="5.2" height="5.2" fill="#2e2e2e"/><rect x="473.2" y="629.2" width="5.2" height="5.2" fill="#3c3c3c"/><rect x="478.4" y="624.0" width="5.2" height="5.2" fill="#8c8c8c"/><rect x="473.2" y="624.0" width="5.2" height="5.2" fill="#3c3c3c"/><rect x="468.0" y="624.0" width="5.2" height="5.2" fill="#6e6e6e"/><rect x="473.2" y="618.8" width="5.2" height="5.2" fill="#7a7a7a"/><rect x="468.0" y="618.8" width="5.2" height="5.2" fill="#2e2e2e"/><rect x="468.0" y="613.6" width="5.2" height="5.2" fill="#6e6e6e"/><rect x="462.8" y="613.6" width="5.2" height="5.2" fill="#222222"/><rect x="468.0" y="608.4" width="5.2" height="5.2" fill="#8c8c8c"/><rect x="462.8" y="608.4" width="5.2" height="5.2" fill="#4c4c4c"/><rect x="457.6" y="608.4" width="5.2" height="5.2" fill="#2e2e2e"/><rect x="462.8" y="603.2" width="5.2" height="5.2" fill="#8c8c8c"/><rect x="457.6" y="603.2" width="5.2" height="5.2" fill="#3c3c3c"/><rect x="452.4" y="603.2" width="5.2" height="5.2" fill="#3c3c3c"/><rect x="452.4" y="598.0" width="5.2" height="5.2" fill="#4c4c4c"/><rect x="452.4" y="592.8" width="5.2" height="5.2" fill="#3c3c3c"/><rect x="447.2" y="592.8" width="5.2" height="5.2" fill="#2e2e2e"/><rect x="452.4" y="587.6" width="5.2" height="5.2" fill="#7a7a7a"/><rect x="447.2" y="587.6" width="5.2" height="5.2" fill="#6e6e6e"/><rect x="442.0" y="587.6" width="5.2" height="5.2" fill="#222222"/><rect x="447.2" y="582.4" width="5.2" height="5.2" fill="#9c9c9c"/><rect x="442.0" y="582.4" width="5.2" height="5.2" fill="#2e2e2e"/><rect x="442.0" y="577.2" width="5.2" height="5.2" fill="#aaaaaa"/><rect x="436.8" y="582.4" width="5.2" height="5.2" fill="#4c4c4c"/><rect x="436.8" y="577.2" width="5.2" height="5.2" fill="#222222"/><rect x="436.8" y="572.0" width="5.2" height="5.2" fill="#222222"/><rect x="431.6" y="572.0" width="5.2" height="5.2" fill="#4c4c4c"/><rect x="436.8" y="566.8" width="5.2" height="5.2" fill="#aaaaaa"/><rect x="431.6" y="566.8" width="5.2" height="5.2" fill="#6e6e6e"/><rect x="426.4" y="566.8" width="5.2" height="5.2" fill="#2e2e2e"/><rect x="426.4" y="561.6" width="5.2" height="5.2" fill="#6e6e6e"/><rect x="426.4" y="556.4" width="5.2" height="5.2" fill="#3c3c3c"/><rect x="421.2" y="556.4" width="5.2" height="5.2" fill="#4c4c4c"/><rect x="426.4" y="551.2" width="5.2" height="5.2" fill="#7a7a7a"/><rect x="421.2" y="551.2" width="5.2" height="5.2" fill="#2e2e2e"/><rect x="416.0" y="551.2" width="5.2" height="5.2" fill="#3c3c3c"/><rect x="416.0" y="546.0" width="5.2" height="5.2" fill="#6e6e6e"/><rect x="416.0" y="540.8" width="5.2" height="5.2" fill="#aaaaaa"/><rect x="410.8" y="546.0" width="5.2" height="5.2" fill="#222222"/><rect x="410.8" y="540.8" width="5.2" height="5.2" fill="#6e6e6e"/><rect x="410.8" y="535.6" width="5.2" height="5.2" fill="#2e2e2e"/><rect x="405.6" y="535.6" width="5.2" height="5.2" fill="#4c4c4c"/><rect x="405.6" y="530.4" width="5.2" height="5.2" fill="#5c5c5c"/><rect x="400.4" y="530.4" width="5.2" height="5.2" fill="#5c5c5c"/><rect x="400.4" y="525.2" width="5.2" height="5.2" fill="#6e6e6e"/><rect x="400.4" y="520.0" width="5.2" height="5.2" fill="#4c4c4c"/><rect x="395.2" y="520.0" width="5.2" height="5.2" fill="#2e2e2e"/><rect x="400.4" y="514.8" width="5.2" height="5.2" fill="#6e6e6e"/><rect x="395.2" y="514.8" width="5.2" height="5.2" fill="#6e6e6e"/><rect x="395.2" y="509.6" width="5.2" height="5.2" fill="#6e6e6e"/><rect x="400.4" y="509.6" width="5.2" height="5.2" fill="#6e6e6e"/><rect x="400.4" y="504.4" width="5.2" height="5.2" fill="#5c5c5c"/><rect x="405.6" y="504.4" width="5.2" height="5.2" fill="#2e2e2e"/><rect x="405.6" y="499.2" width="5.2" height="5.2" fill="#6e6e6e"/><rect x="410.8" y="499.2" width="5.2" height="5.2" fill="#8c8c8c"/><rect x="405.6" y="494.0" width="5.2" height="5.2" fill="#6e6e6e"/><rect x="410.8" y="494.0" width="5.2" height="5.2" fill="#222222"/><rect x="410.8" y="488.8" width="5.2" height="5.2" fill="#4c4c4c"/><rect x="416.0" y="488.8" width="5.2" height="5.2" fill="#aaaaaa"/><rect x="410.8" y="483.6" width="5.2" height="5.2" fill="#3c3c3c"/><rect x="416.0" y="483.6" width="5.2" height="5.2" fill="#3c3c3c"/><rect x="416.0" y="478.4" width="5.2" height="5.2" fill="#6e6e6e"/><rect x="416.0" y="473.2" width="5.2" height="5.2" fill="#222222"/><rect x="421.2" y="473.2" width="5.2" height="5.2" fill="#4c4c4c"/><rect x="421.2" y="468.0" width="5.2" height="5.2" fill="#2e2e2e"/><rect x="426.4" y="468.0" width="5.2" height="5.2" fill="#aaaaaa"/><rect x="421.2" y="462.8" width="5.2" height="5.2" fill="#6e6e6e"/><rect x="426.4" y="462.8" width="5.2" height="5.2" fill="#6e6e6e"/><rect x="426.4" y="457.6" width="5.2" height="5.2" fill="#2e2e2e"/><rect x="431.6" y="457.6" width="5.2" height="5.2" fill="#3c3c3c"/><rect x="426.4" y="452.4" width="5.2" height="5.2" fill="#4c4c4c"/><rect x="431.6" y="452.4" width="5.2" height="5.2" fill="#4c4c4c"/><rect x="436.8" y="452.4" width="5.2" height="5.2" fill="#aaaaaa"/><rect x="431.6" y="447.2" width="5.2" height="5.2" fill="#222222"/><rect x="436.8" y="447.2" width="5.2" height="5.2" fill="#5c5c5c"/><rect x="436.8" y="442.0" width="5.2" height="5.2" fill="#4c4c4c"/><rect x="436.8" y="436.8" width="5.2" height="5.2" fill="#6e6e6e"/><rect x="442.0" y="436.8" width="5.2" height="5.2" fill="#6e6e6e"/><rect x="442.0" y="431.6" width="5.2" height="5.2" fill="#2e2e2e"/><rect x="442.0" y="426.4" width="5.2" height="5.2" fill="#3c3c3c"/><rect x="447.2" y="426.4" width="5.2" height="5.2" fill="#222222"/><rect x="447.2" y="421.2" width="5.2" height="5.2" fill="#4c4c4c"/><rect x="452.4" y="421.2" width="5.2" height="5.2" fill="#aaaaaa"/><rect x="447.2" y="416.0" width="5.2" height="5.2" fill="#222222"/><rect x="452.4" y="416.0" width="5.2" height="5.2" fill="#222222"/><rect x="452.4" y="410.8" width="5.2" height="5.2" fill="#3c3c3c"/><rect x="457.6" y="410.8" width="5.2" height="5.2" fill="#8c8c8c"/><rect x="452.4" y="405.6" width="5.2" height="5.2" fill="#2e2e2e"/><rect x="457.6" y="405.6" width="5.2" height="5.2" fill="#6e6e6e"/><rect x="462.8" y="405.6" width="5.2" height="5.2" fill="#8c8c8c"/><rect x="457.6" y="400.4" width="5.2" height="5.2" fill="#5c5c5c"/><rect x="462.8" y="400.4" width="5.2" height="5.2" fill="#9c9c9c"/><rect x="457.6" y="395.2" width="5.2" height="5.2" fill="#222222"/><rect x="462.8" y="395.2" width="5.2" height="5.2" fill="#5c5c5c"/><rect x="468.0" y="395.2" width="5.2" height="5.2" fill="#aaaaaa"/><rect x="462.8" y="390.0" width="5.2" height="5.2" fill="#5c5c5c"/><rect x="468.0" y="390.0" width="5.2" height="5.2" fill="#2e2e2e"/><rect x="468.0" y="384.8" width="5.2" height="5.2" fill="#6e6e6e"/><rect x="473.2" y="384.8" width="5.2" height="5.2" fill="#aaaaaa"/><rect x="468.0" y="379.6" width="5.2" height="5.2" fill="#5c5c5c"/><rect x="473.2" y="379.6" width="5.2" height="5.2" fill="#222222"/><rect x="473.2" y="374.4" width="5.2" height="5.2" fill="#6e6e6e"/><rect x="478.4" y="374.4" width="5.2" height="5.2" fill="#9c9c9c"/><rect x="473.2" y="369.2" width="5.2" height="5.2" fill="#5c5c5c"/><rect x="478.4" y="369.2" width="5.2" height="5.2" fill="#3c3c3c"/><rect x="478.4" y="364.0" width="5.2" height="5.2" fill="#4c4c4c"/><rect x="478.4" y="358.8" width="5.2" height="5.2" fill="#4c4c4c"/><rect x="483.6" y="358.8" width="5.2" height="5.2" fill="#2e2e2e"/><rect x="483.6" y="353.6" width="5.2" height="5.2" fill="#6e6e6e"/><rect x="488.8" y="353.6" width="5.2" height="5.2" fill="#8c8c8c"/><rect x="483.6" y="348.4" width="5.2" height="5.2" fill="#4c4c4c"/><rect x="488.8" y="348.4" width="5.2" height="5.2" fill="#5c5c5c"/><rect x="494.0" y="348.4" width="5.2" height="5.2" fill="#7a7a7a"/><rect x="488.8" y="343.2" width="5.2" height="5.2" fill="#6e6e6e"/><rect x="488.8" y="338.0" width="5.2" height="5.2" fill="#3c3c3c"/><rect x="494.0" y="338.0" width="5.2" height="5.2" fill="#6e6e6e"/><rect x="499.2" y="338.0" width="5.2" height="5.2" fill="#7a7a7a"/><rect x="494.0" y="332.8" width="5.2" height="5.2" fill="#3c3c3c"/><rect x="499.2" y="332.8" width="5.2" height="5.2" fill="#3c3c3c"/><rect x="494.0" y="327.6" width="5.2" height="5.2" fill="#4c4c4c"/><rect x="499.2" y="327.6" width="5.2" height="5.2" fill="#4c4c4c"/><rect x="504.4" y="327.6" width="5.2" height="5.2" fill="#7a7a7a"/><rect x="499.2" y="322.4" width="5.2" height="5.2" fill="#222222"/><rect x="504.4" y="322.4" width="5.2" height="5.2" fill="#222222"/><rect x="504.4" y="317.2" width="5.2" height="5.2" fill="#4c4c4c"/><rect x="509.6" y="317.2" width="5.2" height="5.2" fill="#aaaaaa"/><rect x="504.4" y="312.0" width="5.2" height="5.2" fill="#6e6e6e"/><rect x="509.6" y="312.0" width="5.2" height="5.2" fill="#6e6e6e"/><rect x="509.6" y="306.8" width="5.2" height="5.2" fill="#6e6e6e"/><rect x="514.8" y="306.8" width="5.2" height="5.2" fill="#9c9c9c"/><rect x="509.6" y="301.6" width="5.2" height="5.2" fill="#5c5c5c"/><rect x="514.8" y="301.6" width="5.2" height="5.2" fill="#3c3c3c"/><rect x="514.8" y="296.4" width="5.2" height="5.2" fill="#222222"/><rect x="520.0" y="301.6" width="5.2" height="5.2" fill="#8c8c8c"/><rect x="520.0" y="296.4" width="5.2" height="5.2" fill="#9c9c9c"/><rect x="514.8" y="291.2" width="5.2" height="5.2" fill="#6e6e6e"/><rect x="520.0" y="291.2" width="5.2" height="5.2" fill="#4c4c4c"/><rect x="520.0" y="286.0" width="5.2" height="5.2" fill="#2e2e2e"/><rect x="525.2" y="286.0" width="5.2" height="5.2" fill="#aaaaaa"/><rect x="520.0" y="280.8" width="5.2" height="5.2" fill="#4c4c4c"/><rect x="525.2" y="280.8" width="5.2" height="5.2" fill="#2e2e2e"/><rect x="530.4" y="280.8" width="5.2" height="5.2" fill="#8c8c8c"/><rect x="525.2" y="275.6" width="5.2" height="5.2" fill="#2e2e2e"/><rect x="530.4" y="275.6" width="5.2" height="5.2" fill="#222222"/><rect x="525.2" y="270.4" width="5.2" height="5.2" fill="#6e6e6e"/><rect x="530.4" y="270.4" width="5.2" height="5.2" fill="#2e2e2e"/><rect x="535.6" y="270.4" width="5.2" height="5.2" fill="#aaaaaa"/><rect x="530.4" y="265.2" width="5.2" height="5.2" fill="#6e6e6e"/><rect x="535.6" y="265.2" width="5.2" height="5.2" fill="#5c5c5c"/><rect x="535.6" y="260.0" width="5.2" height="5.2" fill="#6e6e6e"/><rect x="540.8" y="260.0" width="5.2" height="5.2" fill="#8c8c8c"/><rect x="535.6" y="254.8" width="5.2" height="5.2" fill="#2e2e2e"/><rect x="540.8" y="254.8" width="5.2" height="5.2" fill="#3c3c3c"/><rect x="540.8" y="249.6" width="5.2" height="5.2" fill="#6e6e6e"/><rect x="540.8" y="244.4" width="5.2" height="5.2" fill="#4c4c4c"/><rect x="546.0" y="244.4" width="5.2" height="5.2" fill="#4c4c4c"/><rect x="546.0" y="239.2" width="5.2" height="5.2" fill="#3c3c3c"/><rect x="546.0" y="234.0" width="5.2" height="5.2" fill="#6e6e6e"/><rect x="551.2" y="234.0" width="5.2" height="5.2" fill="#2e2e2e"/><rect x="551.2" y="228.8" width="5.2" height="5.2" fill="#4c4c4c"/><rect x="556.4" y="234.0" width="5.2" height="5.2" fill="#9c9c9c"/><rect x="556.4" y="228.8" width="5.2" height="5.2" fill="#8c8c8c"/><rect x="551.2" y="223.6" width="5.2" height="5.2" fill="#3c3c3c"/><rect x="556.4" y="223.6" width="5.2" height="5.2" fill="#6e6e6e"/><rect x="561.6" y="223.6" width="5.2" height="5.2" fill="#4c4c4c"/><rect x="566.8" y="223.6" width="5.2" height="5.2" fill="#3c3c3c"/><rect x="566.8" y="228.8" width="5.2" height="5.2" fill="#aaaaaa"/><rect x="572.0" y="223.6" width="5.2" height="5.2" fill="#6e6e6e"/><rect x="572.0" y="228.8" width="5.2" height="5.2" fill="#8c8c8c"/><rect x="577.2" y="223.6" width="5.2" height="5.2" fill="#4c4c4c"/><rect x="577.2" y="228.8" width="5.2" height="5.2" fill="#7a7a7a"/><rect x="582.4" y="223.6" width="5.2" height="5.2" fill="#6e6e6e"/><rect x="582.4" y="228.8" width="5.2" height="5.2" fill="#9c9c9c"/><rect x="587.6" y="223.6" width="5.2" height="5.2" fill="#3c3c3c"/><rect x="587.6" y="228.8" width="5.2" height="5.2" fill="#8c8c8c"/><rect x="592.8" y="223.6" width="5.2" height="5.2" fill="#6e6e6e"/><rect x="592.8" y="228.8" width="5.2" height="5.2" fill="#9c9c9c"/><rect x="598.0" y="223.6" width="5.2" height="5.2" fill="#3c3c3c"/><rect x="603.2" y="223.6" width="5.2" height="5.2" fill="#4c4c4c"/><rect x="608.4" y="223.6" width="5.2" height="5.2" fill="#4c4c4c"/><rect x="608.4" y="218.4" width="5.2" height="5.2" fill="#4c4c4c"/><rect x="613.6" y="218.4" width="5.2" height="5.2" fill="#5c5c5c"/><rect x="613.6" y="223.6" width="5.2" height="5.2" fill="#6e6e6e"/><rect x="618.8" y="223.6" width="5.2" height="5.2" fill="#222222"/><rect x="618.8" y="218.4" width="5.2" height="5.2" fill="#6e6e6e"/><rect x="624.0" y="218.4" width="5.2" height="5.2" fill="#3c3c3c"/><rect x="624.0" y="223.6" width="5.2" height="5.2" fill="#8c8c8c"/><rect x="629.2" y="223.6" width="5.2" height="5.2" fill="#9c9c9c"/><rect x="629.2" y="218.4" width="5.2" height="5.2" fill="#4c4c4c"/><rect x="634.4" y="218.4" width="5.2" height="5.2" fill="#222222"/><rect x="634.4" y="223.6" width="5.2" height="5.2" fill="#7a7a7a"/><rect x="639.6" y="218.4" width="5.2" height="5.2" fill="#5c5c5c"/><rect x="639.6" y="223.6" width="5.2" height="5.2" fill="#9c9c9c"/><rect x="644.8" y="218.4" width="5.2" height="5.2" fill="#2e2e2e"/><rect x="650.0" y="218.4" width="5.2" height="5.2" fill="#3c3c3c"/><rect x="655.2" y="218.4" width="5.2" height="5.2" fill="#5c5c5c"/><rect x="655.2" y="223.6" width="5.2" height="5.2" fill="#7a7a7a"/><rect x="660.4" y="218.4" width="5.2" height="5.2" fill="#6e6e6e"/><rect x="660.4" y="223.6" width="5.2" height="5.2" fill="#7a7a7a"/><rect x="665.6" y="218.4" width="5.2" height="5.2" fill="#2e2e2e"/><rect x="670.8" y="218.4" width="5.2" height="5.2" fill="#222222"/><rect x="676.0" y="218.4" width="5.2" height="5.2" fill="#6e6e6e"/><rect x="676.0" y="213.2" width="5.2" height="5.2" fill="#3c3c3c"/><rect x="681.2" y="213.2" width="5.2" height="5.2" fill="#3c3c3c"/><rect x="681.2" y="218.4" width="5.2" height="5.2" fill="#5c5c5c"/><rect x="686.4" y="213.2" width="5.2" height="5.2" fill="#222222"/><rect x="686.4" y="218.4" width="5.2" height="5.2" fill="#5c5c5c"/><rect x="691.6" y="213.2" width="5.2" height="5.2" fill="#2e2e2e"/><rect x="691.6" y="218.4" width="5.2" height="5.2" fill="#2e2e2e"/><rect x="696.8" y="213.2" width="5.2" height="5.2" fill="#2e2e2e"/><rect x="696.8" y="218.4" width="5.2" height="5.2" fill="#aaaaaa"/><rect x="702.0" y="213.2" width="5.2" height="5.2" fill="#3c3c3c"/><rect x="702.0" y="218.4" width="5.2" height="5.2" fill="#8c8c8c"/><rect x="707.2" y="213.2" width="5.2" height="5.2" fill="#2e2e2e"/><rect x="707.2" y="218.4" width="5.2" height="5.2" fill="#aaaaaa"/><rect x="712.4" y="213.2" width="5.2" height="5.2" fill="#5c5c5c"/><rect x="712.4" y="218.4" width="5.2" height="5.2" fill="#8c8c8c"/><rect x="717.6" y="213.2" width="5.2" height="5.2" fill="#6e6e6e"/><rect x="722.8" y="213.2" width="5.2" height="5.2" fill="#5c5c5c"/><rect x="722.8" y="218.4" width="5.2" height="5.2" fill="#7a7a7a"/><rect x="728.0" y="213.2" width="5.2" height="5.2" fill="#5c5c5c"/><rect x="733.2" y="213.2" width="5.2" height="5.2" fill="#6e6e6e"/><rect x="738.4" y="213.2" width="5.2" height="5.2" fill="#3c3c3c"/><rect x="743.6" y="213.2" width="5.2" height="5.2" fill="#2e2e2e"/><rect x="743.6" y="208.0" width="5.2" height="5.2" fill="#4c4c4c"/><rect x="748.8" y="213.2" width="5.2" height="5.2" fill="#6e6e6e"/><rect x="748.8" y="208.0" width="5.2" height="5.2" fill="#2e2e2e"/><rect x="754.0" y="208.0" width="5.2" height="5.2" fill="#5c5c5c"/><rect x="754.0" y="213.2" width="5.2" height="5.2" fill="#222222"/><rect x="759.2" y="213.2" width="5.2" height="5.2" fill="#6e6e6e"/><rect x="759.2" y="208.0" width="5.2" height="5.2" fill="#4c4c4c"/><rect x="764.4" y="208.0" width="5.2" height="5.2" fill="#6e6e6e"/><rect x="764.4" y="213.2" width="5.2" height="5.2" fill="#7a7a7a"/><rect x="769.6" y="208.0" width="5.2" height="5.2" fill="#5c5c5c"/><rect x="769.6" y="213.2" width="5.2" height="5.2" fill="#7a7a7a"/><rect x="774.8" y="208.0" width="5.2" height="5.2" fill="#3c3c3c"/><rect x="774.8" y="213.2" width="5.2" height="5.2" fill="#aaaaaa"/><rect x="780.0" y="208.0" width="5.2" height="5.2" fill="#2e2e2e"/><rect x="780.0" y="213.2" width="5.2" height="5.2" fill="#8c8c8c"/><rect x="785.2" y="208.0" width="5.2" height="5.2" fill="#4c4c4c"/><rect x="785.2" y="213.2" width="5.2" height="5.2" fill="#aaaaaa"/><rect x="790.4" y="208.0" width="5.2" height="5.2" fill="#5c5c5c"/><rect x="790.4" y="213.2" width="5.2" height="5.2" fill="#7a7a7a"/><rect x="795.6" y="208.0" width="5.2" height="5.2" fill="#4c4c4c"/><rect x="795.6" y="213.2" width="5.2" height="5.2" fill="#aaaaaa"/><rect x="800.8" y="208.0" width="5.2" height="5.2" fill="#2e2e2e"/><rect x="806.0" y="208.0" width="5.2" height="5.2" fill="#6e6e6e"/><rect x="811.2" y="208.0" width="5.2" height="5.2" fill="#4c4c4c"/><rect x="811.2" y="202.8" width="5.2" height="5.2" fill="#2e2e2e"/><rect x="816.4" y="202.8" width="5.2" height="5.2" fill="#4c4c4c"/><rect x="816.4" y="208.0" width="5.2" height="5.2" fill="#2e2e2e"/><rect x="821.6" y="202.8" width="5.2" height="5.2" fill="#5c5c5c"/><rect x="821.6" y="208.0" width="5.2" height="5.2" fill="#5c5c5c"/><rect x="826.8" y="202.8" width="5.2" height="5.2" fill="#222222"/><rect x="832.0" y="202.8" width="5.2" height="5.2" fill="#2e2e2e"/><rect x="832.0" y="208.0" width="5.2" height="5.2" fill="#9c9c9c"/><rect x="837.2" y="208.0" width="5.2" height="5.2" fill="#aaaaaa"/><rect x="837.2" y="202.8" width="5.2" height="5.2" fill="#6e6e6e"/><rect x="842.4" y="202.8" width="5.2" height="5.2" fill="#5c5c5c"/><rect x="842.4" y="208.0" width="5.2" height="5.2" fill="#aaaaaa"/><rect x="847.6" y="202.8" width="5.2" height="5.2" fill="#3c3c3c"/><rect x="852.8" y="202.8" width="5.2" height="5.2" fill="#4c4c4c"/><rect x="852.8" y="208.0" width="5.2" height="5.2" fill="#9c9c9c"/><rect x="858.0" y="202.8" width="5.2" height="5.2" fill="#4c4c4c"/><rect x="858.0" y="208.0" width="5.2" height="5.2" fill="#aaaaaa"/><rect x="863.2" y="202.8" width="5.2" height="5.2" fill="#6e6e6e"/><rect x="863.2" y="208.0" width="5.2" height="5.2" fill="#7a7a7a"/><rect x="868.4" y="202.8" width="5.2" height="5.2" fill="#2e2e2e"/><rect x="873.6" y="202.8" width="5.2" height="5.2" fill="#6e6e6e"/><rect x="873.6" y="208.0" width="5.2" height="5.2" fill="#9c9c9c"/><rect x="878.8" y="202.8" width="5.2" height="5.2" fill="#6e6e6e"/><rect x="878.8" y="208.0" width="5.2" height="5.2" fill="#6e6e6e"/><rect x="873.6" y="197.6" width="5.2" height="5.2" fill="#222222"/><rect x="878.8" y="213.2" width="5.2" height="5.2" fill="#7a7a7a"/><rect x="884.0" y="208.0" width="5.2" height="5.2" fill="#5c5c5c"/><rect x="884.0" y="213.2" width="5.2" height="5.2" fill="#222222"/><rect x="884.0" y="218.4" width="5.2" height="5.2" fill="#6e6e6e"/><rect x="889.2" y="218.4" width="5.2" height="5.2" fill="#6e6e6e"/><rect x="884.0" y="223.6" width="5.2" height="5.2" fill="#9c9c9c"/><rect x="889.2" y="223.6" width="5.2" height="5.2" fill="#222222"/><rect x="894.4" y="223.6" width="5.2" height="5.2" fill="#5c5c5c"/><rect x="889.2" y="228.8" width="5.2" height="5.2" fill="#aaaaaa"/><rect x="894.4" y="228.8" width="5.2" height="5.2" fill="#4c4c4c"/><rect x="894.4" y="234.0" width="5.2" height="5.2" fill="#8c8c8c"/><rect x="899.6" y="228.8" width="5.2" height="5.2" fill="#222222"/><rect x="899.6" y="234.0" width="5.2" height="5.2" fill="#2e2e2e"/><rect x="899.6" y="239.2" width="5.2" height="5.2" fill="#6e6e6e"/><rect x="904.8" y="234.0" width="5.2" height="5.2" fill="#4c4c4c"/><rect x="904.8" y="239.2" width="5.2" height="5.2" fill="#6e6e6e"/><rect x="899.6" y="244.4" width="5.2" height="5.2" fill="#8c8c8c"/><rect x="904.8" y="244.4" width="5.2" height="5.2" fill="#3c3c3c"/><rect x="910.0" y="244.4" width="5.2" height="5.2" fill="#222222"/><rect x="910.0" y="249.6" width="5.2" height="5.2" fill="#3c3c3c"/><rect x="910.0" y="254.8" width="5.2" height="5.2" fill="#9c9c9c"/><rect x="915.2" y="249.6" width="5.2" height="5.2" fill="#4c4c4c"/><rect x="915.2" y="254.8" width="5.2" height="5.2" fill="#5c5c5c"/><rect x="915.2" y="260.0" width="5.2" height="5.2" fill="#5c5c5c"/><rect x="920.4" y="260.0" width="5.2" height="5.2" fill="#2e2e2e"/><rect x="920.4" y="265.2" width="5.2" height="5.2" fill="#3c3c3c"/><rect x="925.6" y="265.2" width="5.2" height="5.2" fill="#4c4c4c"/><rect x="920.4" y="270.4" width="5.2" height="5.2" fill="#9c9c9c"/><rect x="925.6" y="270.4" width="5.2" height="5.2" fill="#4c4c4c"/><rect x="930.8" y="270.4" width="5.2" height="5.2" fill="#3c3c3c"/><rect x="930.8" y="275.6" width="5.2" height="5.2" fill="#222222"/><rect x="930.8" y="280.8" width="5.2" height="5.2" fill="#3c3c3c"/><rect x="936.0" y="275.6" width="5.2" height="5.2" fill="#3c3c3c"/><rect x="936.0" y="280.8" width="5.2" height="5.2" fill="#3c3c3c"/><rect x="936.0" y="286.0" width="5.2" height="5.2" fill="#4c4c4c"/><rect x="941.2" y="286.0" width="5.2" height="5.2" fill="#4c4c4c"/><rect x="936.0" y="291.2" width="5.2" height="5.2" fill="#9c9c9c"/><rect x="941.2" y="291.2" width="5.2" height="5.2" fill="#5c5c5c"/><rect x="946.4" y="291.2" width="5.2" height="5.2" fill="#3c3c3c"/><rect x="946.4" y="296.4" width="5.2" height="5.2" fill="#3c3c3c"/><rect x="946.4" y="301.6" width="5.2" height="5.2" fill="#8c8c8c"/><rect x="951.6" y="296.4" width="5.2" height="5.2" fill="#6e6e6e"/><rect x="951.6" y="301.6" width="5.2" height="5.2" fill="#4c4c4c"/><rect x="951.6" y="306.8" width="5.2" height="5.2" fill="#222222"/><rect x="956.8" y="306.8" width="5.2" height="5.2" fill="#3c3c3c"/><rect x="951.6" y="312.0" width="5.2" height="5.2" fill="#8c8c8c"/><rect x="956.8" y="312.0" width="5.2" height="5.2" fill="#3c3c3c"/><rect x="962.0" y="312.0" width="5.2" height="5.2" fill="#6e6e6e"/><rect x="956.8" y="317.2" width="5.2" height="5.2" fill="#9c9c9c"/><rect x="962.0" y="317.2" width="5.2" height="5.2" fill="#2e2e2e"/><rect x="967.2" y="317.2" width="5.2" height="5.2" fill="#6e6e6e"/><rect x="967.2" y="322.4" width="5.2" height="5.2" fill="#222222"/><rect x="967.2" y="327.6" width="5.2" height="5.2" fill="#222222"/><rect x="972.4" y="327.6" width="5.2" height="5.2" fill="#4c4c4c"/><rect x="972.4" y="332.8" width="5.2" height="5.2" fill="#5c5c5c"/><rect x="977.6" y="332.8" width="5.2" height="5.2" fill="#4c4c4c"/><rect x="977.6" y="338.0" width="5.2" height="5.2" fill="#5c5c5c"/><rect x="977.6" y="343.2" width="5.2" height="5.2" fill="#7a7a7a"/><rect x="982.8" y="338.0" width="5.2" height="5.2" fill="#4c4c4c"/><rect x="982.8" y="343.2" width="5.2" height="5.2" fill="#3c3c3c"/><rect x="982.8" y="348.4" width="5.2" height="5.2" fill="#222222"/><rect x="988.0" y="348.4" width="5.2" height="5.2" fill="#222222"/><rect x="988.0" y="353.6" width="5.2" height="5.2" fill="#222222"/><rect x="993.2" y="353.6" width="5.2" height="5.2" fill="#2e2e2e"/><rect x="988.0" y="358.8" width="5.2" height="5.2" fill="#aaaaaa"/><rect x="993.2" y="358.8" width="5.2" height="5.2" fill="#5c5c5c"/><rect x="998.4" y="358.8" width="5.2" height="5.2" fill="#6e6e6e"/><rect x="993.2" y="364.0" width="5.2" height="5.2" fill="#7a7a7a"/><rect x="998.4" y="364.0" width="5.2" height="5.2" fill="#5c5c5c"/><rect x="998.4" y="369.2" width="5.2" height="5.2" fill="#5c5c5c"/><rect x="1003.6" y="364.0" width="5.2" height="5.2" fill="#5c5c5c"/><rect x="1003.6" y="369.2" width="5.2" height="5.2" fill="#4c4c4c"/><rect x="1003.6" y="374.4" width="5.2" height="5.2" fill="#2e2e2e"/><rect x="1008.8" y="374.4" width="5.2" height="5.2" fill="#6e6e6e"/><rect x="1008.8" y="379.6" width="5.2" height="5.2" fill="#6e6e6e"/><rect x="1014.0" y="379.6" width="5.2" height="5.2" fill="#5c5c5c"/><rect x="1014.0" y="384.8" width="5.2" height="5.2" fill="#6e6e6e"/><rect x="1014.0" y="390.0" width="5.2" height="5.2" fill="#7a7a7a"/><rect x="1019.2" y="384.8" width="5.2" height="5.2" fill="#2e2e2e"/><rect x="1019.2" y="390.0" width="5.2" height="5.2" fill="#222222"/><rect x="1019.2" y="395.2" width="5.2" height="5.2" fill="#6e6e6e"/><rect x="1024.4" y="395.2" width="5.2" height="5.2" fill="#6e6e6e"/><rect x="1019.2" y="400.4" width="5.2" height="5.2" fill="#aaaaaa"/><rect x="1024.4" y="400.4" width="5.2" height="5.2" fill="#6e6e6e"/><rect x="1029.6" y="400.4" width="5.2" height="5.2" fill="#2e2e2e"/><rect x="1024.4" y="405.6" width="5.2" height="5.2" fill="#7a7a7a"/><rect x="1029.6" y="405.6" width="5.2" height="5.2" fill="#6e6e6e"/><rect x="1029.6" y="410.8" width="5.2" height="5.2" fill="#8c8c8c"/><rect x="1034.8" y="405.6" width="5.2" height="5.2" fill="#222222"/><rect x="1034.8" y="410.8" width="5.2" height="5.2" fill="#4c4c4c"/><rect x="1034.8" y="416.0" width="5.2" height="5.2" fill="#222222"/><rect x="1040.0" y="416.0" width="5.2" height="5.2" fill="#6e6e6e"/><rect x="1034.8" y="421.2" width="5.2" height="5.2" fill="#7a7a7a"/><rect x="1040.0" y="421.2" width="5.2" height="5.2" fill="#3c3c3c"/><rect x="1045.2" y="421.2" width="5.2" height="5.2" fill="#2e2e2e"/><rect x="1040.0" y="426.4" width="5.2" height="5.2" fill="#9c9c9c"/><rect x="1045.2" y="426.4" width="5.2" height="5.2" fill="#5c5c5c"/><rect x="1050.4" y="426.4" width="5.2" height="5.2" fill="#3c3c3c"/><rect x="1050.4" y="431.6" width="5.2" height="5.2" fill="#3c3c3c"/><rect x="1050.4" y="436.8" width="5.2" height="5.2" fill="#2e2e2e"/><rect x="1055.6" y="436.8" width="5.2" height="5.2" fill="#4c4c4c"/><rect x="1050.4" y="442.0" width="5.2" height="5.2" fill="#7a7a7a"/><rect x="1055.6" y="442.0" width="5.2" height="5.2" fill="#3c3c3c"/><rect x="1060.8" y="442.0" width="5.2" height="5.2" fill="#222222"/><rect x="1055.6" y="447.2" width="5.2" height="5.2" fill="#aaaaaa"/><rect x="1060.8" y="447.2" width="5.2" height="5.2" fill="#5c5c5c"/><rect x="1066.0" y="447.2" width="5.2" height="5.2" fill="#5c5c5c"/><rect x="1066.0" y="452.4" width="5.2" height="5.2" fill="#222222"/><rect x="1066.0" y="457.6" width="5.2" height="5.2" fill="#4c4c4c"/><rect x="1071.2" y="452.4" width="5.2" height="5.2" fill="#5c5c5c"/><rect x="1071.2" y="457.6" width="5.2" height="5.2" fill="#5c5c5c"/><rect x="1066.0" y="462.8" width="5.2" height="5.2" fill="#7a7a7a"/><rect x="1071.2" y="462.8" width="5.2" height="5.2" fill="#222222"/><rect x="1076.4" y="462.8" width="5.2" height="5.2" fill="#4c4c4c"/><rect x="1071.2" y="468.0" width="5.2" height="5.2" fill="#5c5c5c"/><rect x="1076.4" y="468.0" width="5.2" height="5.2" fill="#6e6e6e"/><rect x="1066.0" y="468.0" width="5.2" height="5.2" fill="#aaaaaa"/><rect x="1071.2" y="473.2" width="5.2" height="5.2" fill="#4c4c4c"/><rect x="1066.0" y="473.2" width="5.2" height="5.2" fill="#7a7a7a"/><rect x="1071.2" y="478.4" width="5.2" height="5.2" fill="#222222"/><rect x="1066.0" y="478.4" width="5.2" height="5.2" fill="#6e6e6e"/><rect x="1066.0" y="483.6" width="5.2" height="5.2" fill="#4c4c4c"/><rect x="1066.0" y="488.8" width="5.2" height="5.2" fill="#5c5c5c"/><rect x="1060.8" y="488.8" width="5.2" height="5.2" fill="#6e6e6e"/><rect x="1060.8" y="494.0" width="5.2" height="5.2" fill="#2e2e2e"/><rect x="1055.6" y="494.0" width="5.2" height="5.2" fill="#aaaaaa"/><rect x="1060.8" y="499.2" width="5.2" height="5.2" fill="#4c4c4c"/><rect x="1060.8" y="504.4" width="5.2" height="5.2" fill="#222222"/><rect x="1055.6" y="504.4" width="5.2" height="5.2" fill="#222222"/><rect x="1055.6" y="509.6" width="5.2" height="5.2" fill="#4c4c4c"/><rect x="1050.4" y="509.6" width="5.2" height="5.2" fill="#8c8c8c"/><rect x="1055.6" y="514.8" width="5.2" height="5.2" fill="#2e2e2e"/><rect x="1050.4" y="514.8" width="5.2" height="5.2" fill="#6e6e6e"/><rect x="1050.4" y="520.0" width="5.2" height="5.2" fill="#222222"/><rect x="1045.2" y="520.0" width="5.2" height="5.2" fill="#aaaaaa"/><rect x="1050.4" y="525.2" width="5.2" height="5.2" fill="#222222"/><rect x="1045.2" y="525.2" width="5.2" height="5.2" fill="#222222"/><rect x="1050.4" y="530.4" width="5.2" height="5.2" fill="#6e6e6e"/><rect x="1045.2" y="530.4" width="5.2" height="5.2" fill="#6e6e6e"/><rect x="1040.0" y="530.4" width="5.2" height="5.2" fill="#7a7a7a"/><rect x="1045.2" y="535.6" width="5.2" height="5.2" fill="#222222"/><rect x="1040.0" y="535.6" width="5.2" height="5.2" fill="#8c8c8c"/><rect x="1045.2" y="540.8" width="5.2" height="5.2" fill="#222222"/><rect x="1040.0" y="540.8" width="5.2" height="5.2" fill="#2e2e2e"/><rect x="1040.0" y="546.0" width="5.2" height="5.2" fill="#4c4c4c"/><rect x="1034.8" y="546.0" width="5.2" height="5.2" fill="#7a7a7a"/><rect x="1040.0" y="551.2" width="5.2" height="5.2" fill="#3c3c3c"/><rect x="1034.8" y="551.2" width="5.2" height="5.2" fill="#6e6e6e"/><rect x="1040.0" y="556.4" width="5.2" height="5.2" fill="#5c5c5c"/><rect x="1034.8" y="556.4" width="5.2" height="5.2" fill="#2e2e2e"/><rect x="1029.6" y="556.4" width="5.2" height="5.2" fill="#aaaaaa"/><rect x="1034.8" y="561.6" width="5.2" height="5.2" fill="#6e6e6e"/><rect x="1034.8" y="566.8" width="5.2" height="5.2" fill="#2e2e2e"/><rect x="1029.6" y="566.8" width="5.2" height="5.2" fill="#222222"/><rect x="1029.6" y="572.0" width="5.2" height="5.2" fill="#3c3c3c"/><rect x="1029.6" y="577.2" width="5.2" height="5.2" fill="#6e6e6e"/><rect x="1024.4" y="577.2" width="5.2" height="5.2" fill="#6e6e6e"/><rect x="1024.4" y="582.4" width="5.2" height="5.2" fill="#2e2e2e"/><rect x="1024.4" y="587.6" width="5.2" height="5.2" fill="#222222"/><rect x="1019.2" y="587.6" width="5.2" height="5.2" fill="#9c9c9c"/><rect x="1024.4" y="592.8" width="5.2" height="5.2" fill="#6e6e6e"/><rect x="1019.2" y="592.8" width="5.2" height="5.2" fill="#5c5c5c"/><rect x="1019.2" y="598.0" width="5.2" height="5.2" fill="#6e6e6e"/><rect x="1014.0" y="598.0" width="5.2" height="5.2" fill="#aaaaaa"/><rect x="1019.2" y="603.2" width="5.2" height="5.2" fill="#4c4c4c"/><rect x="1014.0" y="603.2" width="5.2" height="5.2" fill="#6e6e6e"/><rect x="1014.0" y="608.4" width="5.2" height="5.2" fill="#3c3c3c"/><rect x="1008.8" y="608.4" width="5.2" height="5.2" fill="#7a7a7a"/><rect x="1014.0" y="613.6" width="5.2" height="5.2" fill="#6e6e6e"/><rect x="1008.8" y="613.6" width="5.2" height="5.2" fill="#7a7a7a"/><rect x="1014.0" y="618.8" width="5.2" height="5.2" fill="#222222"/><rect x="1008.8" y="618.8" width="5.2" height="5.2" fill="#222222"/><rect x="1003.6" y="618.8" width="5.2" height="5.2" fill="#7a7a7a"/><rect x="1008.8" y="624.0" width="5.2" height="5.2" fill="#6e6e6e"/><rect x="1008.8" y="629.2" width="5.2" height="5.2" fill="#5c5c5c"/><rect x="1003.6" y="629.2" width="5.2" height="5.2" fill="#222222"/><rect x="1003.6" y="634.4" width="5.2" height="5.2" fill="#4c4c4c"/><rect x="998.4" y="634.4" width="5.2" height="5.2" fill="#9c9c9c"/><rect x="1003.6" y="639.6" width="5.2" height="5.2" fill="#3c3c3c"/><rect x="1003.6" y="644.8" width="5.2" height="5.2" fill="#5c5c5c"/><rect x="998.4" y="644.8" width="5.2" height="5.2" fill="#2e2e2e"/><rect x="993.2" y="644.8" width="5.2" height="5.2" fill="#aaaaaa"/><rect x="998.4" y="650.0" width="5.2" height="5.2" fill="#5c5c5c"/><rect x="993.2" y="650.0" width="5.2" height="5.2" fill="#7a7a7a"/><rect x="998.4" y="655.2" width="5.2" height="5.2" fill="#3c3c3c"/><rect x="993.2" y="655.2" width="5.2" height="5.2" fill="#3c3c3c"/><rect x="993.2" y="660.4" width="5.2" height="5.2" fill="#5c5c5c"/><rect x="993.2" y="665.6" width="5.2" height="5.2" fill="#4c4c4c"/><rect x="988.0" y="665.6" width="5.2" height="5.2" fill="#4c4c4c"/><rect x="993.2" y="670.8" width="5.2" height="5.2" fill="#6e6e6e"/><rect x="988.0" y="670.8" width="5.2" height="5.2" fill="#2e2e2e"/><rect x="982.8" y="670.8" width="5.2" height="5.2" fill="#8c8c8c"/><rect x="988.0" y="676.0" width="5.2" height="5.2" fill="#222222"/><rect x="982.8" y="676.0" width="5.2" height="5.2" fill="#9c9c9c"/><rect x="988.0" y="681.2" width="5.2" height="5.2" fill="#6e6e6e"/><rect x="982.8" y="681.2" width="5.2" height="5.2" fill="#2e2e2e"/><rect x="982.8" y="686.4" width="5.2" height="5.2" fill="#6e6e6e"/><rect x="977.6" y="686.4" width="5.2" height="5.2" fill="#aaaaaa"/><rect x="982.8" y="691.6" width="5.2" height="5.2" fill="#4c4c4c"/><rect x="977.6" y="691.6" width="5.2" height="5.2" fill="#4c4c4c"/><rect x="982.8" y="696.8" width="5.2" height="5.2" fill="#4c4c4c"/><rect x="977.6" y="696.8" width="5.2" height="5.2" fill="#3c3c3c"/><rect x="977.6" y="702.0" width="5.2" height="5.2" fill="#3c3c3c"/><rect x="972.4" y="702.0" width="5.2" height="5.2" fill="#9c9c9c"/><rect x="977.6" y="707.2" width="5.2" height="5.2" fill="#3c3c3c"/><rect x="972.4" y="707.2" width="5.2" height="5.2" fill="#222222"/><rect x="972.4" y="712.4" width="5.2" height="5.2" fill="#5c5c5c"/><rect x="972.4" y="717.6" width="5.2" height="5.2" fill="#6e6e6e"/><rect x="967.2" y="717.6" width="5.2" height="5.2" fill="#5c5c5c"/><rect x="967.2" y="722.8" width="5.2" height="5.2" fill="#3c3c3c"/><rect x="967.2" y="728.0" width="5.2" height="5.2" fill="#6e6e6e"/><rect x="962.0" y="728.0" width="5.2" height="5.2" fill="#7a7a7a"/><rect x="967.2" y="733.2" width="5.2" height="5.2" fill="#2e2e2e"/><rect x="962.0" y="733.2" width="5.2" height="5.2" fill="#5c5c5c"/><rect x="962.0" y="738.4" width="5.2" height="5.2" fill="#3c3c3c"/><rect x="962.0" y="743.6" width="5.2" height="5.2" fill="#4c4c4c"/><rect x="956.8" y="743.6" width="5.2" height="5.2" fill="#2e2e2e"/><rect x="956.8" y="748.8" width="5.2" height="5.2" fill="#4c4c4c"/><rect x="951.6" y="748.8" width="5.2" height="5.2" fill="#aaaaaa"/><rect x="956.8" y="754.0" width="5.2" height="5.2" fill="#6e6e6e"/><rect x="951.6" y="754.0" width="5.2" height="5.2" fill="#aaaaaa"/><rect x="956.8" y="759.2" width="5.2" height="5.2" fill="#5c5c5c"/><rect x="951.6" y="759.2" width="5.2" height="5.2" fill="#2e2e2e"/><rect x="946.4" y="759.2" width="5.2" height="5.2" fill="#aaaaaa"/><rect x="951.6" y="764.4" width="5.2" height="5.2" fill="#3c3c3c"/><rect x="951.6" y="769.6" width="5.2" height="5.2" fill="#222222"/><rect x="946.4" y="769.6" width="5.2" height="5.2" fill="#3c3c3c"/><rect x="946.4" y="774.8" width="5.2" height="5.2" fill="#3c3c3c"/><rect x="941.2" y="774.8" width="5.2" height="5.2" fill="#9c9c9c"/><rect x="946.4" y="780.0" width="5.2" height="5.2" fill="#4c4c4c"/><rect x="941.2" y="780.0" width="5.2" height="5.2" fill="#8c8c8c"/><rect x="946.4" y="785.2" width="5.2" height="5.2" fill="#5c5c5c"/><rect x="941.2" y="785.2" width="5.2" height="5.2" fill="#222222"/><rect x="936.0" y="785.2" width="5.2" height="5.2" fill="#3c3c3c"/><rect x="936.0" y="780.0" width="5.2" height="5.2" fill="#8c8c8c"/><rect x="930.8" y="785.2" width="5.2" height="5.2" fill="#5c5c5c"/><rect x="930.8" y="780.0" width="5.2" height="5.2" fill="#8c8c8c"/><rect x="925.6" y="785.2" width="5.2" height="5.2" fill="#3c3c3c"/><rect x="920.4" y="785.2" width="5.2" height="5.2" fill="#5c5c5c"/><rect x="915.2" y="790.4" width="5.2" height="5.2" fill="#6e6e6e"/><rect x="915.2" y="785.2" width="5.2" height="5.2" fill="#4c4c4c"/><rect x="910.0" y="790.4" width="5.2" height="5.2" fill="#3c3c3c"/><rect x="910.0" y="785.2" width="5.2" height="5.2" fill="#5c5c5c"/><rect x="904.8" y="785.2" width="5.2" height="5.2" fill="#222222"/><rect x="904.8" y="790.4" width="5.2" height="5.2" fill="#5c5c5c"/><rect x="899.6" y="790.4" width="5.2" height="5.2" fill="#5c5c5c"/><rect x="899.6" y="785.2" width="5.2" height="5.2" fill="#aaaaaa"/><rect x="894.4" y="785.2" width="5.2" height="5.2" fill="#aaaaaa"/><rect x="894.4" y="790.4" width="5.2" height="5.2" fill="#2e2e2e"/><rect x="889.2" y="790.4" width="5.2" height="5.2" fill="#6e6e6e"/><rect x="889.2" y="785.2" width="5.2" height="5.2" fill="#8c8c8c"/><rect x="884.0" y="785.2" width="5.2" height="5.2" fill="#9c9c9c"/><rect x="884.0" y="790.4" width="5.2" height="5.2" fill="#5c5c5c"/><rect x="878.8" y="790.4" width="5.2" height="5.2" fill="#222222"/><rect x="873.6" y="790.4" width="5.2" height="5.2" fill="#4c4c4c"/><rect x="873.6" y="785.2" width="5.2" height="5.2" fill="#aaaaaa"/><rect x="868.4" y="790.4" width="5.2" height="5.2" fill="#6e6e6e"/><rect x="868.4" y="785.2" width="5.2" height="5.2" fill="#8c8c8c"/><rect x="863.2" y="790.4" width="5.2" height="5.2" fill="#3c3c3c"/><rect x="858.0" y="790.4" width="5.2" height="5.2" fill="#5c5c5c"/><rect x="852.8" y="790.4" width="5.2" height="5.2" fill="#222222"/><rect x="852.8" y="795.6" width="5.2" height="5.2" fill="#4c4c4c"/><rect x="847.6" y="795.6" width="5.2" height="5.2" fill="#4c4c4c"/><rect x="847.6" y="790.4" width="5.2" height="5.2" fill="#5c5c5c"/><rect x="842.4" y="790.4" width="5.2" height="5.2" fill="#222222"/><rect x="842.4" y="795.6" width="5.2" height="5.2" fill="#5c5c5c"/><rect x="837.2" y="795.6" width="5.2" height="5.2" fill="#3c3c3c"/><rect x="837.2" y="790.4" width="5.2" height="5.2" fill="#7a7a7a"/><rect x="832.0" y="795.6" width="5.2" height="5.2" fill="#2e2e2e"/><rect x="832.0" y="790.4" width="5.2" height="5.2" fill="#aaaaaa"/><rect x="826.8" y="795.6" width="5.2" height="5.2" fill="#5c5c5c"/><rect x="821.6" y="795.6" width="5.2" height="5.2" fill="#3c3c3c"/><rect x="816.4" y="795.6" width="5.2" height="5.2" fill="#3c3c3c"/><rect x="816.4" y="790.4" width="5.2" height="5.2" fill="#aaaaaa"/><rect x="811.2" y="795.6" width="5.2" height="5.2" fill="#5c5c5c"/><rect x="806.0" y="795.6" width="5.2" height="5.2" fill="#2e2e2e"/><rect x="800.8" y="795.6" width="5.2" height="5.2" fill="#2e2e2e"/><rect x="795.6" y="795.6" width="5.2" height="5.2" fill="#2e2e2e"/><rect x="790.4" y="800.8" width="5.2" height="5.2" fill="#2e2e2e"/><rect x="790.4" y="795.6" width="5.2" height="5.2" fill="#222222"/><rect x="785.2" y="795.6" width="5.2" height="5.2" fill="#2e2e2e"/><rect x="785.2" y="800.8" width="5.2" height="5.2" fill="#6e6e6e"/><rect x="780.0" y="800.8" width="5.2" height="5.2" fill="#3c3c3c"/><rect x="780.0" y="795.6" width="5.2" height="5.2" fill="#3c3c3c"/><rect x="774.8" y="800.8" width="5.2" height="5.2" fill="#5c5c5c"/><rect x="769.6" y="800.8" width="5.2" height="5.2" fill="#3c3c3c"/><rect x="769.6" y="795.6" width="5.2" height="5.2" fill="#aaaaaa"/><rect x="691.6" y="733.2" width="5.2" height="5.2" fill="#2e2e2e"/><rect x="696.8" y="733.2" width="5.2" height="5.2" fill="#8c8c8c"/><rect x="696.8" y="728.0" width="5.2" height="5.2" fill="#7a7a7a"/><rect x="691.6" y="728.0" width="5.2" height="5.2" fill="#4c4c4c"/><rect x="691.6" y="722.8" width="5.2" height="5.2" fill="#3c3c3c"/><rect x="696.8" y="722.8" width="5.2" height="5.2" fill="#7a7a7a"/><rect x="691.6" y="717.6" width="5.2" height="5.2" fill="#3c3c3c"/><rect x="691.6" y="712.4" width="5.2" height="5.2" fill="#4c4c4c"/><rect x="696.8" y="712.4" width="5.2" height="5.2" fill="#7a7a7a"/><rect x="691.6" y="707.2" width="5.2" height="5.2" fill="#2e2e2e"/><rect x="696.8" y="707.2" width="5.2" height="5.2" fill="#9c9c9c"/><rect x="691.6" y="702.0" width="5.2" height="5.2" fill="#5c5c5c"/><rect x="696.8" y="702.0" width="5.2" height="5.2" fill="#7a7a7a"/><rect x="691.6" y="696.8" width="5.2" height="5.2" fill="#3c3c3c"/><rect x="696.8" y="696.8" width="5.2" height="5.2" fill="#9c9c9c"/><rect x="691.6" y="691.6" width="5.2" height="5.2" fill="#5c5c5c"/><rect x="691.6" y="686.4" width="5.2" height="5.2" fill="#5c5c5c"/><rect x="691.6" y="681.2" width="5.2" height="5.2" fill="#222222"/><rect x="691.6" y="676.0" width="5.2" height="5.2" fill="#222222"/><rect x="686.4" y="676.0" width="5.2" height="5.2" fill="#222222"/><rect x="686.4" y="670.8" width="5.2" height="5.2" fill="#2e2e2e"/><rect x="691.6" y="670.8" width="5.2" height="5.2" fill="#5c5c5c"/><rect x="686.4" y="665.6" width="5.2" height="5.2" fill="#4c4c4c"/><rect x="691.6" y="665.6" width="5.2" height="5.2" fill="#5c5c5c"/><rect x="686.4" y="660.4" width="5.2" height="5.2" fill="#5c5c5c"/><rect x="691.6" y="660.4" width="5.2" height="5.2" fill="#2e2e2e"/><rect x="686.4" y="655.2" width="5.2" height="5.2" fill="#3c3c3c"/><rect x="691.6" y="655.2" width="5.2" height="5.2" fill="#9c9c9c"/><rect x="691.6" y="650.0" width="5.2" height="5.2" fill="#aaaaaa"/><rect x="686.4" y="650.0" width="5.2" height="5.2" fill="#222222"/><rect x="686.4" y="644.8" width="5.2" height="5.2" fill="#4c4c4c"/><rect x="686.4" y="639.6" width="5.2" height="5.2" fill="#2e2e2e"/><rect x="686.4" y="634.4" width="5.2" height="5.2" fill="#3c3c3c"/><rect x="691.6" y="634.4" width="5.2" height="5.2" fill="#7a7a7a"/><rect x="686.4" y="629.2" width="5.2" height="5.2" fill="#3c3c3c"/><rect x="691.6" y="629.2" width="5.2" height="5.2" fill="#8c8c8c"/><rect x="686.4" y="624.0" width="5.2" height="5.2" fill="#2e2e2e"/><rect x="691.6" y="624.0" width="5.2" height="5.2" fill="#aaaaaa"/><rect x="686.4" y="618.8" width="5.2" height="5.2" fill="#222222"/><rect x="691.6" y="618.8" width="5.2" height="5.2" fill="#7a7a7a"/><rect x="686.4" y="613.6" width="5.2" height="5.2" fill="#222222"/><rect x="691.6" y="613.6" width="5.2" height="5.2" fill="#222222"/><rect x="681.2" y="613.6" width="5.2" height="5.2" fill="#5c5c5c"/><rect x="681.2" y="618.8" width="5.2" height="5.2" fill="#3c3c3c"/><rect x="696.8" y="613.6" width="5.2" height="5.2" fill="#6e6e6e"/><rect x="696.8" y="618.8" width="5.2" height="5.2" fill="#aaaaaa"/><rect x="702.0" y="613.6" width="5.2" height="5.2" fill="#4c4c4c"/><rect x="702.0" y="618.8" width="5.2" height="5.2" fill="#7a7a7a"/><rect x="707.2" y="613.6" width="5.2" height="5.2" fill="#5c5c5c"/><rect x="712.4" y="618.8" width="5.2" height="5.2" fill="#aaaaaa"/><rect x="712.4" y="613.6" width="5.2" height="5.2" fill="#222222"/><rect x="717.6" y="613.6" width="5.2" height="5.2" fill="#6e6e6e"/><rect x="717.6" y="618.8" width="5.2" height="5.2" fill="#7a7a7a"/><rect x="722.8" y="613.6" width="5.2" height="5.2" fill="#3c3c3c"/><rect x="722.8" y="618.8" width="5.2" height="5.2" fill="#9c9c9c"/><rect x="728.0" y="613.6" width="5.2" height="5.2" fill="#5c5c5c"/><rect x="728.0" y="618.8" width="5.2" height="5.2" fill="#8c8c8c"/><rect x="733.2" y="613.6" width="5.2" height="5.2" fill="#6e6e6e"/><rect x="733.2" y="618.8" width="5.2" height="5.2" fill="#7a7a7a"/><rect x="738.4" y="613.6" width="5.2" height="5.2" fill="#6e6e6e"/><rect x="743.6" y="613.6" width="5.2" height="5.2" fill="#5c5c5c"/><rect x="748.8" y="613.6" width="5.2" height="5.2" fill="#4c4c4c"/><rect x="748.8" y="608.4" width="5.2" height="5.2" fill="#2e2e2e"/><rect x="754.0" y="608.4" width="5.2" height="5.2" fill="#4c4c4c"/><rect x="754.0" y="613.6" width="5.2" height="5.2" fill="#2e2e2e"/><rect x="759.2" y="608.4" width="5.2" height="5.2" fill="#3c3c3c"/><rect x="759.2" y="613.6" width="5.2" height="5.2" fill="#2e2e2e"/><rect x="764.4" y="608.4" width="5.2" height="5.2" fill="#6e6e6e"/><rect x="764.4" y="613.6" width="5.2" height="5.2" fill="#2e2e2e"/><rect x="769.6" y="608.4" width="5.2" height="5.2" fill="#2e2e2e"/><rect x="769.6" y="613.6" width="5.2" height="5.2" fill="#7a7a7a"/><rect x="774.8" y="608.4" width="5.2" height="5.2" fill="#3c3c3c"/><rect x="774.8" y="613.6" width="5.2" height="5.2" fill="#9c9c9c"/><rect x="780.0" y="608.4" width="5.2" height="5.2" fill="#222222"/><rect x="785.2" y="608.4" width="5.2" height="5.2" fill="#222222"/><rect x="785.2" y="613.6" width="5.2" height="5.2" fill="#7a7a7a"/><rect x="790.4" y="608.4" width="5.2" height="5.2" fill="#3c3c3c"/><rect x="795.6" y="608.4" width="5.2" height="5.2" fill="#6e6e6e"/><rect x="800.8" y="608.4" width="5.2" height="5.2" fill="#6e6e6e"/><rect x="800.8" y="613.6" width="5.2" height="5.2" fill="#4c4c4c"/><rect x="800.8" y="603.2" width="5.2" height="5.2" fill="#222222"/><rect x="795.6" y="603.2" width="5.2" height="5.2" fill="#7a7a7a"/><rect x="800.8" y="618.8" width="5.2" height="5.2" fill="#2e2e2e"/><rect x="795.6" y="618.8" width="5.2" height="5.2" fill="#9c9c9c"/><rect x="795.6" y="624.0" width="5.2" height="5.2" fill="#7a7a7a"/><rect x="800.8" y="624.0" width="5.2" height="5.2" fill="#2e2e2e"/><rect x="800.8" y="629.2" width="5.2" height="5.2" fill="#6e6e6e"/><rect x="800.8" y="634.4" width="5.2" height="5.2" fill="#6e6e6e"/><rect x="800.8" y="639.6" width="5.2" height="5.2" fill="#3c3c3c"/><rect x="806.0" y="639.6" width="5.2" height="5.2" fill="#5c5c5c"/><rect x="800.8" y="644.8" width="5.2" height="5.2" fill="#5c5c5c"/><rect x="806.0" y="644.8" width="5.2" height="5.2" fill="#4c4c4c"/><rect x="806.0" y="650.0" width="5.2" height="5.2" fill="#6e6e6e"/><rect x="800.8" y="650.0" width="5.2" height="5.2" fill="#222222"/><rect x="800.8" y="655.2" width="5.2" height="5.2" fill="#aaaaaa"/><rect x="806.0" y="655.2" width="5.2" height="5.2" fill="#3c3c3c"/><rect x="806.0" y="660.4" width="5.2" height="5.2" fill="#3c3c3c"/><rect x="800.8" y="660.4" width="5.2" height="5.2" fill="#9c9c9c"/><rect x="806.0" y="665.6" width="5.2" height="5.2" fill="#4c4c4c"/><rect x="800.8" y="665.6" width="5.2" height="5.2" fill="#7a7a7a"/><rect x="806.0" y="670.8" width="5.2" height="5.2" fill="#3c3c3c"/><rect x="800.8" y="670.8" width="5.2" height="5.2" fill="#aaaaaa"/><rect x="806.0" y="676.0" width="5.2" height="5.2" fill="#4c4c4c"/><rect x="800.8" y="676.0" width="5.2" height="5.2" fill="#8c8c8c"/><rect x="806.0" y="681.2" width="5.2" height="5.2" fill="#4c4c4c"/><rect x="800.8" y="681.2" width="5.2" height="5.2" fill="#8c8c8c"/><rect x="806.0" y="686.4" width="5.2" height="5.2" fill="#2e2e2e"/><rect x="806.0" y="691.6" width="5.2" height="5.2" fill="#222222"/><rect x="800.8" y="691.6" width="5.2" height="5.2" fill="#aaaaaa"/><rect x="806.0" y="696.8" width="5.2" height="5.2" fill="#6e6e6e"/><rect x="806.0" y="702.0" width="5.2" height="5.2" fill="#2e2e2e"/><rect x="806.0" y="707.2" width="5.2" height="5.2" fill="#222222"/><rect x="811.2" y="707.2" width="5.2" height="5.2" fill="#2e2e2e"/><rect x="811.2" y="712.4" width="5.2" height="5.2" fill="#2e2e2e"/><rect x="806.0" y="712.4" width="5.2" height="5.2" fill="#222222"/><rect x="811.2" y="717.6" width="5.2" height="5.2" fill="#5c5c5c"/><rect x="806.0" y="717.6" width="5.2" height="5.2" fill="#3c3c3c"/><rect x="811.2" y="722.8" width="5.2" height="5.2" fill="#6e6e6e"/><rect x="806.0" y="722.8" width="5.2" height="5.2" fill="#8c8c8c"/><rect x="811.2" y="728.0" width="5.2" height="5.2" fill="#4c4c4c"/><rect x="806.0" y="728.0" width="5.2" height="5.2" fill="#7a7a7a"/><rect x="676.0" y="400.4" width="5.2" height="5.2" fill="#464646"/><rect x="670.8" y="400.4" width="5.2" height="5.2" fill="#1e1e1e"/><rect x="665.6" y="400.4" width="5.2" height="5.2" fill="#4a5652"/><rect x="676.0" y="405.6" width="5.2" height="5.2" fill="#464646"/><rect x="670.8" y="405.6" width="5.2" height="5.2" fill="#383838"/><rect x="665.6" y="405.6" width="5.2" height="5.2" fill="#6a706e"/><rect x="676.0" y="410.8" width="5.2" height="5.2" fill="#2a2a2a"/><rect x="670.8" y="410.8" width="5.2" height="5.2" fill="#464646"/><rect x="665.6" y="410.8" width="5.2" height="5.2" fill="#4a5652"/><rect x="676.0" y="416.0" width="5.2" height="5.2" fill="#3a3a3a"/><rect x="670.8" y="416.0" width="5.2" height="5.2" fill="#383838"/><rect x="665.6" y="416.0" width="5.2" height="5.2" fill="#5a625f"/><rect x="670.8" y="421.2" width="5.2" height="5.2" fill="#383838"/><rect x="665.6" y="421.2" width="5.2" height="5.2" fill="#2a2a2a"/><rect x="670.8" y="426.4" width="5.2" height="5.2" fill="#3a3a3a"/><rect x="665.6" y="426.4" width="5.2" height="5.2" fill="#1e1e1e"/><rect x="660.4" y="421.2" width="5.2" height="5.2" fill="#5a625f"/><rect x="670.8" y="431.6" width="5.2" height="5.2" fill="#3a3a3a"/><rect x="660.4" y="426.4" width="5.2" height="5.2" fill="#7a7e7c"/><rect x="665.6" y="431.6" width="5.2" height="5.2" fill="#545454"/><rect x="660.4" y="431.6" width="5.2" height="5.2" fill="#2a2a2a"/><rect x="665.6" y="436.8" width="5.2" height="5.2" fill="#464646"/><rect x="660.4" y="436.8" width="5.2" height="5.2" fill="#2a2a2a"/><rect x="655.2" y="431.6" width="5.2" height="5.2" fill="#6a706e"/><rect x="655.2" y="436.8" width="5.2" height="5.2" fill="#464646"/><rect x="660.4" y="442.0" width="5.2" height="5.2" fill="#464646"/><rect x="655.2" y="442.0" width="5.2" height="5.2" fill="#2a2a2a"/><rect x="650.0" y="436.8" width="5.2" height="5.2" fill="#5a625f"/><rect x="650.0" y="442.0" width="5.2" height="5.2" fill="#1e1e1e"/><rect x="655.2" y="447.2" width="5.2" height="5.2" fill="#383838"/><rect x="650.0" y="447.2" width="5.2" height="5.2" fill="#545454"/><rect x="644.8" y="442.0" width="5.2" height="5.2" fill="#6a706e"/><rect x="644.8" y="447.2" width="5.2" height="5.2" fill="#383838"/><rect x="650.0" y="452.4" width="5.2" height="5.2" fill="#2a2a2a"/><rect x="644.8" y="452.4" width="5.2" height="5.2" fill="#383838"/><rect x="639.6" y="447.2" width="5.2" height="5.2" fill="#464646"/><rect x="639.6" y="452.4" width="5.2" height="5.2" fill="#1e1e1e"/><rect x="634.4" y="447.2" width="5.2" height="5.2" fill="#6a706e"/><rect x="634.4" y="452.4" width="5.2" height="5.2" fill="#464646"/><rect x="634.4" y="457.6" width="5.2" height="5.2" fill="#464646"/><rect x="629.2" y="447.2" width="5.2" height="5.2" fill="#4a5652"/><rect x="629.2" y="452.4" width="5.2" height="5.2" fill="#2a2a2a"/><rect x="629.2" y="457.6" width="5.2" height="5.2" fill="#545454"/><rect x="624.0" y="447.2" width="5.2" height="5.2" fill="#4a5652"/><rect x="624.0" y="452.4" width="5.2" height="5.2" fill="#3a3a3a"/><rect x="624.0" y="457.6" width="5.2" height="5.2" fill="#3a3a3a"/><rect x="618.8" y="457.6" width="5.2" height="5.2" fill="#2a2a2a"/><rect x="618.8" y="452.4" width="5.2" height="5.2" fill="#545454"/><rect x="618.8" y="447.2" width="5.2" height="5.2" fill="#7a7e7c"/><rect x="613.6" y="457.6" width="5.2" height="5.2" fill="#383838"/><rect x="613.6" y="452.4" width="5.2" height="5.2" fill="#1e1e1e"/><rect x="613.6" y="447.2" width="5.2" height="5.2" fill="#6a706e"/><rect x="608.4" y="457.6" width="5.2" height="5.2" fill="#2a2a2a"/><rect x="608.4" y="452.4" width="5.2" height="5.2" fill="#383838"/><rect x="608.4" y="447.2" width="5.2" height="5.2" fill="#7a7e7c"/><rect x="603.2" y="457.6" width="5.2" height="5.2" fill="#383838"/><rect x="603.2" y="452.4" width="5.2" height="5.2" fill="#2a2a2a"/><rect x="603.2" y="447.2" width="5.2" height="5.2" fill="#5a625f"/><rect x="598.0" y="452.4" width="5.2" height="5.2" fill="#1e1e1e"/><rect x="598.0" y="447.2" width="5.2" height="5.2" fill="#464646"/><rect x="592.8" y="452.4" width="5.2" height="5.2" fill="#383838"/><rect x="592.8" y="447.2" width="5.2" height="5.2" fill="#464646"/><rect x="598.0" y="442.0" width="5.2" height="5.2" fill="#5a625f"/><rect x="587.6" y="447.2" width="5.2" height="5.2" fill="#1e1e1e"/><rect x="592.8" y="442.0" width="5.2" height="5.2" fill="#6a706e"/><rect x="587.6" y="442.0" width="5.2" height="5.2" fill="#2a2a2a"/><rect x="592.8" y="436.8" width="5.2" height="5.2" fill="#4a5652"/><rect x="582.4" y="447.2" width="5.2" height="5.2" fill="#464646"/><rect x="582.4" y="442.0" width="5.2" height="5.2" fill="#545454"/><rect x="587.6" y="436.8" width="5.2" height="5.2" fill="#6a706e"/><rect x="582.4" y="436.8" width="5.2" height="5.2" fill="#545454"/><rect x="577.2" y="442.0" width="5.2" height="5.2" fill="#2a2a2a"/><rect x="577.2" y="436.8" width="5.2" height="5.2" fill="#464646"/><rect x="587.6" y="431.6" width="5.2" height="5.2" fill="#4a5652"/><rect x="577.2" y="431.6" width="5.2" height="5.2" fill="#383838"/><rect x="582.4" y="426.4" width="5.2" height="5.2" fill="#5a625f"/><rect x="572.0" y="431.6" width="5.2" height="5.2" fill="#383838"/><rect x="577.2" y="426.4" width="5.2" height="5.2" fill="#464646"/><rect x="572.0" y="426.4" width="5.2" height="5.2" fill="#1e1e1e"/><rect x="577.2" y="421.2" width="5.2" height="5.2" fill="#7a7e7c"/><rect x="572.0" y="421.2" width="5.2" height="5.2" fill="#2a2a2a"/><rect x="566.8" y="421.2" width="5.2" height="5.2" fill="#383838"/><rect x="572.0" y="416.0" width="5.2" height="5.2" fill="#2a2a2a"/><rect x="566.8" y="416.0" width="5.2" height="5.2" fill="#2a2a2a"/><rect x="577.2" y="410.8" width="5.2" height="5.2" fill="#5a625f"/><rect x="566.8" y="410.8" width="5.2" height="5.2" fill="#545454"/><rect x="572.0" y="410.8" width="5.2" height="5.2" fill="#2a2a2a"/><rect x="566.8" y="405.6" width="5.2" height="5.2" fill="#3a3a3a"/><rect x="572.0" y="405.6" width="5.2" height="5.2" fill="#2a2a2a"/><rect x="577.2" y="405.6" width="5.2" height="5.2" fill="#5a625f"/><rect x="566.8" y="400.4" width="5.2" height="5.2" fill="#545454"/><rect x="572.0" y="400.4" width="5.2" height="5.2" fill="#1e1e1e"/><rect x="577.2" y="400.4" width="5.2" height="5.2" fill="#4a5652"/><rect x="566.8" y="395.2" width="5.2" height="5.2" fill="#545454"/><rect x="572.0" y="395.2" width="5.2" height="5.2" fill="#3a3a3a"/><rect x="577.2" y="395.2" width="5.2" height="5.2" fill="#7a7e7c"/><rect x="566.8" y="390.0" width="5.2" height="5.2" fill="#383838"/><rect x="572.0" y="390.0" width="5.2" height="5.2" fill="#2a2a2a"/><rect x="577.2" y="390.0" width="5.2" height="5.2" fill="#2a2a2a"/><rect x="572.0" y="384.8" width="5.2" height="5.2" fill="#2a2a2a"/><rect x="577.2" y="384.8" width="5.2" height="5.2" fill="#545454"/><rect x="582.4" y="384.8" width="5.2" height="5.2" fill="#5a625f"/><rect x="572.0" y="379.6" width="5.2" height="5.2" fill="#545454"/><rect x="577.2" y="379.6" width="5.2" height="5.2" fill="#383838"/><rect x="582.4" y="379.6" width="5.2" height="5.2" fill="#2a2a2a"/><rect x="577.2" y="374.4" width="5.2" height="5.2" fill="#1e1e1e"/><rect x="582.4" y="374.4" width="5.2" height="5.2" fill="#1e1e1e"/><rect x="582.4" y="369.2" width="5.2" height="5.2" fill="#464646"/><rect x="587.6" y="374.4" width="5.2" height="5.2" fill="#4a5652"/><rect x="587.6" y="369.2" width="5.2" height="5.2" fill="#545454"/><rect x="592.8" y="374.4" width="5.2" height="5.2" fill="#6a706e"/><rect x="587.6" y="364.0" width="5.2" height="5.2" fill="#383838"/><rect x="592.8" y="369.2" width="5.2" height="5.2" fill="#6a706e"/><rect x="592.8" y="364.0" width="5.2" height="5.2" fill="#3a3a3a"/><rect x="598.0" y="369.2" width="5.2" height="5.2" fill="#7a7e7c"/><rect x="592.8" y="358.8" width="5.2" height="5.2" fill="#1e1e1e"/><rect x="598.0" y="364.0" width="5.2" height="5.2" fill="#1e1e1e"/><rect x="598.0" y="358.8" width="5.2" height="5.2" fill="#464646"/><rect x="603.2" y="364.0" width="5.2" height="5.2" fill="#7a7e7c"/><rect x="603.2" y="358.8" width="5.2" height="5.2" fill="#2a2a2a"/><rect x="603.2" y="353.6" width="5.2" height="5.2" fill="#3a3a3a"/><rect x="608.4" y="358.8" width="5.2" height="5.2" fill="#383838"/><rect x="608.4" y="364.0" width="5.2" height="5.2" fill="#5a625f"/><rect x="608.4" y="353.6" width="5.2" height="5.2" fill="#2a2a2a"/><rect x="613.6" y="358.8" width="5.2" height="5.2" fill="#545454"/><rect x="613.6" y="364.0" width="5.2" height="5.2" fill="#6a706e"/><rect x="613.6" y="353.6" width="5.2" height="5.2" fill="#1e1e1e"/><rect x="618.8" y="358.8" width="5.2" height="5.2" fill="#2a2a2a"/><rect x="618.8" y="353.6" width="5.2" height="5.2" fill="#3a3a3a"/><rect x="624.0" y="353.6" width="5.2" height="5.2" fill="#383838"/><rect x="624.0" y="358.8" width="5.2" height="5.2" fill="#545454"/><rect x="629.2" y="353.6" width="5.2" height="5.2" fill="#545454"/><rect x="629.2" y="358.8" width="5.2" height="5.2" fill="#1e1e1e"/><rect x="634.4" y="353.6" width="5.2" height="5.2" fill="#383838"/><rect x="634.4" y="358.8" width="5.2" height="5.2" fill="#545454"/><rect x="639.6" y="353.6" width="5.2" height="5.2" fill="#464646"/><rect x="639.6" y="358.8" width="5.2" height="5.2" fill="#1e1e1e"/><rect x="639.6" y="364.0" width="5.2" height="5.2" fill="#4a5652"/><rect x="644.8" y="353.6" width="5.2" height="5.2" fill="#383838"/><rect x="644.8" y="358.8" width="5.2" height="5.2" fill="#3a3a3a"/><rect x="644.8" y="364.0" width="5.2" height="5.2" fill="#2a2a2a"/><rect x="650.0" y="358.8" width="5.2" height="5.2" fill="#383838"/><rect x="650.0" y="364.0" width="5.2" height="5.2" fill="#3a3a3a"/><rect x="650.0" y="369.2" width="5.2" height="5.2" fill="#7a7e7c"/><rect x="655.2" y="358.8" width="5.2" height="5.2" fill="#545454"/><rect x="655.2" y="364.0" width="5.2" height="5.2" fill="#1e1e1e"/><rect x="655.2" y="369.2" width="5.2" height="5.2" fill="#383838"/><rect x="660.4" y="364.0" width="5.2" height="5.2" fill="#1e1e1e"/><rect x="660.4" y="369.2" width="5.2" height="5.2" fill="#3a3a3a"/><rect x="655.2" y="374.4" width="5.2" height="5.2" fill="#7a7e7c"/><rect x="660.4" y="374.4" width="5.2" height="5.2" fill="#464646"/><rect x="665.6" y="369.2" width="5.2" height="5.2" fill="#545454"/><rect x="665.6" y="374.4" width="5.2" height="5.2" fill="#1e1e1e"/><rect x="665.6" y="379.6" width="5.2" height="5.2" fill="#545454"/><rect x="670.8" y="379.6" width="5.2" height="5.2" fill="#2a2a2a"/><rect x="660.4" y="384.8" width="5.2" height="5.2" fill="#4a5652"/><rect x="665.6" y="384.8" width="5.2" height="5.2" fill="#2a2a2a"/><rect x="670.8" y="384.8" width="5.2" height="5.2" fill="#1e1e1e"/><rect x="670.8" y="390.0" width="5.2" height="5.2" fill="#2a2a2a"/><rect x="676.0" y="390.0" width="5.2" height="5.2" fill="#2a2a2a"/><rect x="670.8" y="395.2" width="5.2" height="5.2" fill="#2a2a2a"/><rect x="665.6" y="395.2" width="5.2" height="5.2" fill="#4a5652"/><rect x="676.0" y="395.2" width="5.2" height="5.2" fill="#383838"/><rect x="915.2" y="384.8" width="5.2" height="5.2" fill="#383838"/><rect x="910.0" y="384.8" width="5.2" height="5.2" fill="#545454"/><rect x="904.8" y="384.8" width="5.2" height="5.2" fill="#4a5652"/><rect x="915.2" y="390.0" width="5.2" height="5.2" fill="#1e1e1e"/><rect x="910.0" y="390.0" width="5.2" height="5.2" fill="#1e1e1e"/><rect x="904.8" y="390.0" width="5.2" height="5.2" fill="#5a625f"/><rect x="915.2" y="395.2" width="5.2" height="5.2" fill="#383838"/><rect x="910.0" y="395.2" width="5.2" height="5.2" fill="#1e1e1e"/><rect x="915.2" y="400.4" width="5.2" height="5.2" fill="#3a3a3a"/><rect x="910.0" y="400.4" width="5.2" height="5.2" fill="#545454"/><rect x="904.8" y="400.4" width="5.2" height="5.2" fill="#7a7e7c"/><rect x="915.2" y="405.6" width="5.2" height="5.2" fill="#545454"/><rect x="910.0" y="405.6" width="5.2" height="5.2" fill="#2a2a2a"/><rect x="904.8" y="405.6" width="5.2" height="5.2" fill="#7a7e7c"/><rect x="910.0" y="410.8" width="5.2" height="5.2" fill="#1e1e1e"/><rect x="904.8" y="410.8" width="5.2" height="5.2" fill="#383838"/><rect x="899.6" y="410.8" width="5.2" height="5.2" fill="#4a5652"/><rect x="910.0" y="416.0" width="5.2" height="5.2" fill="#3a3a3a"/><rect x="904.8" y="416.0" width="5.2" height="5.2" fill="#2a2a2a"/><rect x="899.6" y="416.0" width="5.2" height="5.2" fill="#1e1e1e"/><rect x="904.8" y="421.2" width="5.2" height="5.2" fill="#383838"/><rect x="899.6" y="421.2" width="5.2" height="5.2" fill="#1e1e1e"/><rect x="894.4" y="416.0" width="5.2" height="5.2" fill="#7a7e7c"/><rect x="899.6" y="426.4" width="5.2" height="5.2" fill="#464646"/><rect x="894.4" y="421.2" width="5.2" height="5.2" fill="#545454"/><rect x="894.4" y="426.4" width="5.2" height="5.2" fill="#545454"/><rect x="894.4" y="431.6" width="5.2" height="5.2" fill="#383838"/><rect x="889.2" y="426.4" width="5.2" height="5.2" fill="#1e1e1e"/><rect x="889.2" y="421.2" width="5.2" height="5.2" fill="#4a5652"/><rect x="889.2" y="431.6" width="5.2" height="5.2" fill="#1e1e1e"/><rect x="884.0" y="426.4" width="5.2" height="5.2" fill="#7a7e7c"/><rect x="889.2" y="436.8" width="5.2" height="5.2" fill="#2a2a2a"/><rect x="884.0" y="431.6" width="5.2" height="5.2" fill="#545454"/><rect x="884.0" y="436.8" width="5.2" height="5.2" fill="#545454"/><rect x="878.8" y="431.6" width="5.2" height="5.2" fill="#2a2a2a"/><rect x="878.8" y="436.8" width="5.2" height="5.2" fill="#2a2a2a"/><rect x="873.6" y="431.6" width="5.2" height="5.2" fill="#5a625f"/><rect x="873.6" y="436.8" width="5.2" height="5.2" fill="#3a3a3a"/><rect x="873.6" y="442.0" width="5.2" height="5.2" fill="#545454"/><rect x="868.4" y="431.6" width="5.2" height="5.2" fill="#7a7e7c"/><rect x="868.4" y="436.8" width="5.2" height="5.2" fill="#3a3a3a"/><rect x="868.4" y="442.0" width="5.2" height="5.2" fill="#464646"/><rect x="863.2" y="436.8" width="5.2" height="5.2" fill="#2a2a2a"/><rect x="863.2" y="431.6" width="5.2" height="5.2" fill="#4a5652"/><rect x="863.2" y="442.0" width="5.2" height="5.2" fill="#3a3a3a"/><rect x="858.0" y="442.0" width="5.2" height="5.2" fill="#464646"/><rect x="858.0" y="436.8" width="5.2" height="5.2" fill="#3a3a3a"/><rect x="858.0" y="431.6" width="5.2" height="5.2" fill="#7a7e7c"/><rect x="852.8" y="442.0" width="5.2" height="5.2" fill="#545454"/><rect x="852.8" y="436.8" width="5.2" height="5.2" fill="#545454"/><rect x="847.6" y="442.0" width="5.2" height="5.2" fill="#1e1e1e"/><rect x="847.6" y="436.8" width="5.2" height="5.2" fill="#464646"/><rect x="847.6" y="431.6" width="5.2" height="5.2" fill="#4a5652"/><rect x="842.4" y="436.8" width="5.2" height="5.2" fill="#383838"/><rect x="842.4" y="431.6" width="5.2" height="5.2" fill="#383838"/><rect x="837.2" y="436.8" width="5.2" height="5.2" fill="#464646"/><rect x="837.2" y="431.6" width="5.2" height="5.2" fill="#2a2a2a"/><rect x="842.4" y="426.4" width="5.2" height="5.2" fill="#6a706e"/><rect x="837.2" y="426.4" width="5.2" height="5.2" fill="#7a7e7c"/><rect x="832.0" y="431.6" width="5.2" height="5.2" fill="#545454"/><rect x="832.0" y="426.4" width="5.2" height="5.2" fill="#383838"/><rect x="826.8" y="431.6" width="5.2" height="5.2" fill="#464646"/><rect x="826.8" y="426.4" width="5.2" height="5.2" fill="#545454"/><rect x="832.0" y="421.2" width="5.2" height="5.2" fill="#4a5652"/><rect x="826.8" y="421.2" width="5.2" height="5.2" fill="#383838"/><rect x="821.6" y="426.4" width="5.2" height="5.2" fill="#545454"/><rect x="821.6" y="421.2" width="5.2" height="5.2" fill="#2a2a2a"/><rect x="826.8" y="416.0" width="5.2" height="5.2" fill="#6a706e"/><rect x="816.4" y="421.2" width="5.2" height="5.2" fill="#2a2a2a"/><rect x="821.6" y="416.0" width="5.2" height="5.2" fill="#464646"/><rect x="816.4" y="416.0" width="5.2" height="5.2" fill="#3a3a3a"/><rect x="821.6" y="410.8" width="5.2" height="5.2" fill="#4a5652"/><rect x="816.4" y="410.8" width="5.2" height="5.2" fill="#383838"/><rect x="811.2" y="410.8" width="5.2" height="5.2" fill="#1e1e1e"/><rect x="816.4" y="405.6" width="5.2" height="5.2" fill="#2a2a2a"/><rect x="811.2" y="405.6" width="5.2" height="5.2" fill="#1e1e1e"/><rect x="811.2" y="400.4" width="5.2" height="5.2" fill="#383838"/><rect x="816.4" y="400.4" width="5.2" height="5.2" fill="#7a7e7c"/><rect x="806.0" y="400.4" width="5.2" height="5.2" fill="#2a2a2a"/><rect x="811.2" y="395.2" width="5.2" height="5.2" fill="#545454"/><rect x="816.4" y="395.2" width="5.2" height="5.2" fill="#4a5652"/><rect x="806.0" y="395.2" width="5.2" height="5.2" fill="#2a2a2a"/><rect x="811.2" y="390.0" width="5.2" height="5.2" fill="#2a2a2a"/><rect x="816.4" y="390.0" width="5.2" height="5.2" fill="#7a7e7c"/><rect x="806.0" y="390.0" width="5.2" height="5.2" fill="#464646"/><rect x="806.0" y="384.8" width="5.2" height="5.2" fill="#464646"/><rect x="811.2" y="384.8" width="5.2" height="5.2" fill="#3a3a3a"/><rect x="816.4" y="384.8" width="5.2" height="5.2" fill="#4a5652"/><rect x="806.0" y="379.6" width="5.2" height="5.2" fill="#1e1e1e"/><rect x="811.2" y="379.6" width="5.2" height="5.2" fill="#1e1e1e"/><rect x="806.0" y="374.4" width="5.2" height="5.2" fill="#383838"/><rect x="811.2" y="374.4" width="5.2" height="5.2" fill="#3a3a3a"/><rect x="811.2" y="369.2" width="5.2" height="5.2" fill="#383838"/><rect x="816.4" y="369.2" width="5.2" height="5.2" fill="#3a3a3a"/><rect x="811.2" y="364.0" width="5.2" height="5.2" fill="#545454"/><rect x="816.4" y="364.0" width="5.2" height="5.2" fill="#1e1e1e"/><rect x="821.6" y="364.0" width="5.2" height="5.2" fill="#4a5652"/><rect x="816.4" y="358.8" width="5.2" height="5.2" fill="#383838"/><rect x="821.6" y="358.8" width="5.2" height="5.2" fill="#1e1e1e"/><rect x="816.4" y="353.6" width="5.2" height="5.2" fill="#545454"/><rect x="821.6" y="353.6" width="5.2" height="5.2" fill="#1e1e1e"/><rect x="826.8" y="358.8" width="5.2" height="5.2" fill="#7a7e7c"/><rect x="826.8" y="353.6" width="5.2" height="5.2" fill="#2a2a2a"/><rect x="821.6" y="348.4" width="5.2" height="5.2" fill="#1e1e1e"/><rect x="826.8" y="348.4" width="5.2" height="5.2" fill="#383838"/><rect x="832.0" y="353.6" width="5.2" height="5.2" fill="#4a5652"/><rect x="832.0" y="348.4" width="5.2" height="5.2" fill="#383838"/><rect x="826.8" y="343.2" width="5.2" height="5.2" fill="#383838"/><rect x="832.0" y="343.2" width="5.2" height="5.2" fill="#3a3a3a"/><rect x="837.2" y="348.4" width="5.2" height="5.2" fill="#2a2a2a"/><rect x="837.2" y="343.2" width="5.2" height="5.2" fill="#1e1e1e"/><rect x="842.4" y="348.4" width="5.2" height="5.2" fill="#4a5652"/><rect x="837.2" y="338.0" width="5.2" height="5.2" fill="#545454"/><rect x="842.4" y="343.2" width="5.2" height="5.2" fill="#545454"/><rect x="842.4" y="338.0" width="5.2" height="5.2" fill="#383838"/><rect x="847.6" y="343.2" width="5.2" height="5.2" fill="#1e1e1e"/><rect x="847.6" y="338.0" width="5.2" height="5.2" fill="#464646"/><rect x="852.8" y="338.0" width="5.2" height="5.2" fill="#545454"/><rect x="858.0" y="343.2" width="5.2" height="5.2" fill="#5a625f"/><rect x="858.0" y="338.0" width="5.2" height="5.2" fill="#464646"/><rect x="863.2" y="338.0" width="5.2" height="5.2" fill="#1e1e1e"/><rect x="868.4" y="338.0" width="5.2" height="5.2" fill="#2a2a2a"/><rect x="868.4" y="343.2" width="5.2" height="5.2" fill="#383838"/><rect x="873.6" y="338.0" width="5.2" height="5.2" fill="#464646"/><rect x="873.6" y="343.2" width="5.2" height="5.2" fill="#545454"/><rect x="878.8" y="338.0" width="5.2" height="5.2" fill="#383838"/><rect x="873.6" y="348.4" width="5.2" height="5.2" fill="#6a706e"/><rect x="878.8" y="343.2" width="5.2" height="5.2" fill="#2a2a2a"/><rect x="878.8" y="348.4" width="5.2" height="5.2" fill="#4a5652"/><rect x="884.0" y="338.0" width="5.2" height="5.2" fill="#3a3a3a"/><rect x="884.0" y="343.2" width="5.2" height="5.2" fill="#545454"/><rect x="884.0" y="348.4" width="5.2" height="5.2" fill="#383838"/><rect x="889.2" y="343.2" width="5.2" height="5.2" fill="#464646"/><rect x="889.2" y="348.4" width="5.2" height="5.2" fill="#545454"/><rect x="894.4" y="348.4" width="5.2" height="5.2" fill="#2a2a2a"/><rect x="889.2" y="353.6" width="5.2" height="5.2" fill="#7a7e7c"/><rect x="894.4" y="353.6" width="5.2" height="5.2" fill="#2a2a2a"/><rect x="899.6" y="348.4" width="5.2" height="5.2" fill="#545454"/><rect x="899.6" y="353.6" width="5.2" height="5.2" fill="#3a3a3a"/><rect x="894.4" y="358.8" width="5.2" height="5.2" fill="#6a706e"/><rect x="899.6" y="358.8" width="5.2" height="5.2" fill="#464646"/><rect x="904.8" y="353.6" width="5.2" height="5.2" fill="#545454"/><rect x="904.8" y="358.8" width="5.2" height="5.2" fill="#383838"/><rect x="904.8" y="364.0" width="5.2" height="5.2" fill="#464646"/><rect x="910.0" y="364.0" width="5.2" height="5.2" fill="#464646"/><rect x="899.6" y="369.2" width="5.2" height="5.2" fill="#6a706e"/><rect x="904.8" y="369.2" width="5.2" height="5.2" fill="#1e1e1e"/><rect x="910.0" y="369.2" width="5.2" height="5.2" fill="#2a2a2a"/><rect x="904.8" y="374.4" width="5.2" height="5.2" fill="#6a706e"/><rect x="910.0" y="374.4" width="5.2" height="5.2" fill="#2a2a2a"/><rect x="915.2" y="374.4" width="5.2" height="5.2" fill="#2a2a2a"/><rect x="915.2" y="379.6" width="5.2" height="5.2" fill="#545454"/><rect x="910.0" y="379.6" width="5.2" height="5.2" fill="#464646"/></g><g><rect x="598.0" y="795.6" width="5.2" height="5.2" fill="#6c6c6c"/><rect x="592.8" y="790.4" width="5.2" height="5.2" fill="#a4a4a4"/><rect x="598.0" y="790.4" width="5.2" height="5.2" fill="#9a9a9a"/><rect x="592.8" y="785.2" width="5.2" height="5.2" fill="#b0b0b0"/><rect x="603.2" y="790.4" width="5.2" height="5.2" fill="#8a8a8a"/><rect x="598.0" y="785.2" width="5.2" height="5.2" fill="#9a9a9a"/><rect x="603.2" y="785.2" width="5.2" height="5.2" fill="#9a9a9a"/><rect x="603.2" y="780.0" width="5.2" height="5.2" fill="#9a9a9a"/><rect x="608.4" y="780.0" width="5.2" height="5.2" fill="#9a9a9a"/><rect x="603.2" y="774.8" width="5.2" height="5.2" fill="#8a8a8a"/><rect x="608.4" y="774.8" width="5.2" height="5.2" fill="#9a9a9a"/><rect x="603.2" y="769.6" width="5.2" height="5.2" fill="#a4a4a4"/><rect x="608.4" y="769.6" width="5.2" height="5.2" fill="#7a7a7a"/><rect x="613.6" y="769.6" width="5.2" height="5.2" fill="#8a8a8a"/><rect x="608.4" y="764.4" width="5.2" height="5.2" fill="#7a7a7a"/><rect x="613.6" y="764.4" width="5.2" height="5.2" fill="#9a9a9a"/><rect x="613.6" y="759.2" width="5.2" height="5.2" fill="#7a7a7a"/><rect x="618.8" y="759.2" width="5.2" height="5.2" fill="#6c6c6c"/><rect x="613.6" y="754.0" width="5.2" height="5.2" fill="#6c6c6c"/><rect x="618.8" y="754.0" width="5.2" height="5.2" fill="#9a9a9a"/><rect x="613.6" y="748.8" width="5.2" height="5.2" fill="#a4a4a4"/><rect x="618.8" y="748.8" width="5.2" height="5.2" fill="#8a8a8a"/><rect x="624.0" y="748.8" width="5.2" height="5.2" fill="#8a8a8a"/><rect x="618.8" y="743.6" width="5.2" height="5.2" fill="#6c6c6c"/><rect x="624.0" y="743.6" width="5.2" height="5.2" fill="#9a9a9a"/><rect x="618.8" y="738.4" width="5.2" height="5.2" fill="#b8b8b8"/><rect x="624.0" y="738.4" width="5.2" height="5.2" fill="#8a8a8a"/><rect x="629.2" y="738.4" width="5.2" height="5.2" fill="#8a8a8a"/><rect x="624.0" y="733.2" width="5.2" height="5.2" fill="#9a9a9a"/><rect x="629.2" y="733.2" width="5.2" height="5.2" fill="#7a7a7a"/><rect x="629.2" y="728.0" width="5.2" height="5.2" fill="#9a9a9a"/><rect x="634.4" y="728.0" width="5.2" height="5.2" fill="#8a8a8a"/><rect x="629.2" y="722.8" width="5.2" height="5.2" fill="#6c6c6c"/><rect x="634.4" y="722.8" width="5.2" height="5.2" fill="#7a7a7a"/><rect x="629.2" y="717.6" width="5.2" height="5.2" fill="#a4a4a4"/><rect x="634.4" y="717.6" width="5.2" height="5.2" fill="#6c6c6c"/><rect x="639.6" y="717.6" width="5.2" height="5.2" fill="#7a7a7a"/><rect x="634.4" y="712.4" width="5.2" height="5.2" fill="#6c6c6c"/><rect x="639.6" y="712.4" width="5.2" height="5.2" fill="#6c6c6c"/><rect x="639.6" y="707.2" width="5.2" height="5.2" fill="#8a8a8a"/><rect x="644.8" y="707.2" width="5.2" height="5.2" fill="#6c6c6c"/><rect x="639.6" y="702.0" width="5.2" height="5.2" fill="#b8b8b8"/><rect x="644.8" y="702.0" width="5.2" height="5.2" fill="#7a7a7a"/><rect x="644.8" y="696.8" width="5.2" height="5.2" fill="#6c6c6c"/><rect x="650.0" y="702.0" width="5.2" height="5.2" fill="#6c6c6c"/><rect x="650.0" y="696.8" width="5.2" height="5.2" fill="#9a9a9a"/><rect x="644.8" y="691.6" width="5.2" height="5.2" fill="#b8b8b8"/><rect x="650.0" y="691.6" width="5.2" height="5.2" fill="#9a9a9a"/><rect x="644.8" y="686.4" width="5.2" height="5.2" fill="#b8b8b8"/><rect x="650.0" y="686.4" width="5.2" height="5.2" fill="#6c6c6c"/><rect x="655.2" y="691.6" width="5.2" height="5.2" fill="#6c6c6c"/><rect x="655.2" y="686.4" width="5.2" height="5.2" fill="#9a9a9a"/><rect x="650.0" y="681.2" width="5.2" height="5.2" fill="#a4a4a4"/><rect x="655.2" y="681.2" width="5.2" height="5.2" fill="#6c6c6c"/><rect x="660.4" y="681.2" width="5.2" height="5.2" fill="#6c6c6c"/><rect x="655.2" y="676.0" width="5.2" height="5.2" fill="#9a9a9a"/><rect x="660.4" y="676.0" width="5.2" height="5.2" fill="#8a8a8a"/><rect x="660.4" y="670.8" width="5.2" height="5.2" fill="#9a9a9a"/><rect x="655.2" y="665.6" width="5.2" height="5.2" fill="#b0b0b0"/><rect x="665.6" y="670.8" width="5.2" height="5.2" fill="#6c6c6c"/><rect x="660.4" y="665.6" width="5.2" height="5.2" fill="#6c6c6c"/><rect x="665.6" y="665.6" width="5.2" height="5.2" fill="#8a8a8a"/><rect x="660.4" y="660.4" width="5.2" height="5.2" fill="#a4a4a4"/><rect x="665.6" y="660.4" width="5.2" height="5.2" fill="#9a9a9a"/><rect x="670.8" y="660.4" width="5.2" height="5.2" fill="#9a9a9a"/><rect x="665.6" y="655.2" width="5.2" height="5.2" fill="#8a8a8a"/><rect x="670.8" y="655.2" width="5.2" height="5.2" fill="#9a9a9a"/><rect x="665.6" y="650.0" width="5.2" height="5.2" fill="#b0b0b0"/><rect x="670.8" y="650.0" width="5.2" height="5.2" fill="#6c6c6c"/><rect x="676.0" y="650.0" width="5.2" height="5.2" fill="#7a7a7a"/><rect x="670.8" y="644.8" width="5.2" height="5.2" fill="#7a7a7a"/><rect x="676.0" y="644.8" width="5.2" height="5.2" fill="#7a7a7a"/><rect x="670.8" y="639.6" width="5.2" height="5.2" fill="#b8b8b8"/><rect x="676.0" y="639.6" width="5.2" height="5.2" fill="#6c6c6c"/><rect x="681.2" y="639.6" width="5.2" height="5.2" fill="#9a9a9a"/><rect x="676.0" y="634.4" width="5.2" height="5.2" fill="#9a9a9a"/><rect x="681.2" y="634.4" width="5.2" height="5.2" fill="#6c6c6c"/><rect x="603.2" y="790.4" width="5.2" height="5.2" fill="#4a504e"/><rect x="603.2" y="785.2" width="5.2" height="5.2" fill="#545a58"/><rect x="608.4" y="785.2" width="5.2" height="5.2" fill="#4a504e"/><rect x="608.4" y="780.0" width="5.2" height="5.2" fill="#545a58"/><rect x="608.4" y="774.8" width="5.2" height="5.2" fill="#545a58"/><rect x="613.6" y="774.8" width="5.2" height="5.2" fill="#606664"/><rect x="608.4" y="769.6" width="5.2" height="5.2" fill="#545a58"/><rect x="613.6" y="764.4" width="5.2" height="5.2" fill="#4a504e"/><rect x="613.6" y="759.2" width="5.2" height="5.2" fill="#606664"/><rect x="618.8" y="759.2" width="5.2" height="5.2" fill="#606664"/><rect x="629.2" y="743.6" width="5.2" height="5.2" fill="#4a504e"/><rect x="629.2" y="738.4" width="5.2" height="5.2" fill="#545a58"/><rect x="629.2" y="733.2" width="5.2" height="5.2" fill="#606664"/><rect x="634.4" y="733.2" width="5.2" height="5.2" fill="#4a504e"/><rect x="634.4" y="728.0" width="5.2" height="5.2" fill="#4a504e"/><rect x="634.4" y="722.8" width="5.2" height="5.2" fill="#4a504e"/><rect x="639.6" y="722.8" width="5.2" height="5.2" fill="#545a58"/><rect x="639.6" y="717.6" width="5.2" height="5.2" fill="#4a504e"/><rect x="644.8" y="717.6" width="5.2" height="5.2" fill="#606664"/><rect x="639.6" y="712.4" width="5.2" height="5.2" fill="#545a58"/><rect x="644.8" y="712.4" width="5.2" height="5.2" fill="#4a504e"/><rect x="644.8" y="707.2" width="5.2" height="5.2" fill="#4a504e"/><rect x="644.8" y="702.0" width="5.2" height="5.2" fill="#606664"/><rect x="650.0" y="702.0" width="5.2" height="5.2" fill="#4a504e"/><rect x="650.0" y="696.8" width="5.2" height="5.2" fill="#606664"/><rect x="655.2" y="696.8" width="5.2" height="5.2" fill="#606664"/><rect x="655.2" y="691.6" width="5.2" height="5.2" fill="#606664"/><rect x="655.2" y="686.4" width="5.2" height="5.2" fill="#545a58"/><rect x="660.4" y="686.4" width="5.2" height="5.2" fill="#545a58"/><rect x="655.2" y="681.2" width="5.2" height="5.2" fill="#4a504e"/><rect x="660.4" y="681.2" width="5.2" height="5.2" fill="#545a58"/><rect x="665.6" y="676.0" width="5.2" height="5.2" fill="#545a58"/><rect x="660.4" y="670.8" width="5.2" height="5.2" fill="#545a58"/><rect x="665.6" y="670.8" width="5.2" height="5.2" fill="#4a504e"/><rect x="665.6" y="665.6" width="5.2" height="5.2" fill="#545a58"/><rect x="670.8" y="665.6" width="5.2" height="5.2" fill="#4a504e"/><rect x="670.8" y="660.4" width="5.2" height="5.2" fill="#545a58"/><rect x="670.8" y="655.2" width="5.2" height="5.2" fill="#545a58"/><rect x="676.0" y="655.2" width="5.2" height="5.2" fill="#545a58"/><rect x="670.8" y="650.0" width="5.2" height="5.2" fill="#606664"/><rect x="676.0" y="650.0" width="5.2" height="5.2" fill="#606664"/><rect x="681.2" y="644.8" width="5.2" height="5.2" fill="#4a504e"/><rect x="681.2" y="639.6" width="5.2" height="5.2" fill="#606664"/><rect x="681.2" y="634.4" width="5.2" height="5.2" fill="#606664"/><rect x="769.6" y="806.0" width="5.2" height="5.2" fill="#7a7a7a"/><rect x="774.8" y="806.0" width="5.2" height="5.2" fill="#b0b0b0"/><rect x="769.6" y="800.8" width="5.2" height="5.2" fill="#8a8a8a"/><rect x="774.8" y="800.8" width="5.2" height="5.2" fill="#7a7a7a"/><rect x="769.6" y="795.6" width="5.2" height="5.2" fill="#7a7a7a"/><rect x="774.8" y="795.6" width="5.2" height="5.2" fill="#7a7a7a"/><rect x="780.0" y="795.6" width="5.2" height="5.2" fill="#a4a4a4"/><rect x="774.8" y="790.4" width="5.2" height="5.2" fill="#8a8a8a"/><rect x="780.0" y="790.4" width="5.2" height="5.2" fill="#6c6c6c"/><rect x="774.8" y="785.2" width="5.2" height="5.2" fill="#6c6c6c"/><rect x="780.0" y="785.2" width="5.2" height="5.2" fill="#6c6c6c"/><rect x="785.2" y="785.2" width="5.2" height="5.2" fill="#a4a4a4"/><rect x="780.0" y="780.0" width="5.2" height="5.2" fill="#7a7a7a"/><rect x="785.2" y="780.0" width="5.2" height="5.2" fill="#9a9a9a"/><rect x="780.0" y="774.8" width="5.2" height="5.2" fill="#8a8a8a"/><rect x="785.2" y="774.8" width="5.2" height="5.2" fill="#8a8a8a"/><rect x="790.4" y="774.8" width="5.2" height="5.2" fill="#b8b8b8"/><rect x="780.0" y="769.6" width="5.2" height="5.2" fill="#9a9a9a"/><rect x="785.2" y="769.6" width="5.2" height="5.2" fill="#8a8a8a"/><rect x="790.4" y="769.6" width="5.2" height="5.2" fill="#a4a4a4"/><rect x="785.2" y="764.4" width="5.2" height="5.2" fill="#9a9a9a"/><rect x="790.4" y="764.4" width="5.2" height="5.2" fill="#7a7a7a"/><rect x="785.2" y="759.2" width="5.2" height="5.2" fill="#7a7a7a"/><rect x="790.4" y="759.2" width="5.2" height="5.2" fill="#9a9a9a"/><rect x="795.6" y="759.2" width="5.2" height="5.2" fill="#b0b0b0"/><rect x="790.4" y="754.0" width="5.2" height="5.2" fill="#6c6c6c"/><rect x="795.6" y="754.0" width="5.2" height="5.2" fill="#6c6c6c"/><rect x="790.4" y="748.8" width="5.2" height="5.2" fill="#7a7a7a"/><rect x="795.6" y="748.8" width="5.2" height="5.2" fill="#7a7a7a"/><rect x="800.8" y="748.8" width="5.2" height="5.2" fill="#b0b0b0"/><rect x="795.6" y="743.6" width="5.2" height="5.2" fill="#6c6c6c"/><rect x="800.8" y="743.6" width="5.2" height="5.2" fill="#7a7a7a"/><rect x="795.6" y="738.4" width="5.2" height="5.2" fill="#6c6c6c"/><rect x="800.8" y="738.4" width="5.2" height="5.2" fill="#7a7a7a"/><rect x="800.8" y="733.2" width="5.2" height="5.2" fill="#8a8a8a"/><rect x="806.0" y="733.2" width="5.2" height="5.2" fill="#8a8a8a"/><rect x="800.8" y="728.0" width="5.2" height="5.2" fill="#8a8a8a"/><rect x="769.6" y="800.8" width="5.2" height="5.2" fill="#545a58"/><rect x="764.4" y="800.8" width="5.2" height="5.2" fill="#606664"/><rect x="769.6" y="795.6" width="5.2" height="5.2" fill="#606664"/><rect x="774.8" y="795.6" width="5.2" height="5.2" fill="#4a504e"/><rect x="769.6" y="790.4" width="5.2" height="5.2" fill="#545a58"/><rect x="774.8" y="785.2" width="5.2" height="5.2" fill="#4a504e"/><rect x="780.0" y="780.0" width="5.2" height="5.2" fill="#4a504e"/><rect x="780.0" y="769.6" width="5.2" height="5.2" fill="#545a58"/><rect x="785.2" y="769.6" width="5.2" height="5.2" fill="#606664"/><rect x="785.2" y="764.4" width="5.2" height="5.2" fill="#606664"/><rect x="790.4" y="759.2" width="5.2" height="5.2" fill="#4a504e"/><rect x="790.4" y="748.8" width="5.2" height="5.2" fill="#545a58"/><rect x="790.4" y="743.6" width="5.2" height="5.2" fill="#606664"/><rect x="795.6" y="743.6" width="5.2" height="5.2" fill="#545a58"/><rect x="795.6" y="738.4" width="5.2" height="5.2" fill="#606664"/><rect x="795.6" y="733.2" width="5.2" height="5.2" fill="#606664"/><rect x="800.8" y="733.2" width="5.2" height="5.2" fill="#4a504e"/><rect x="676.0" y="639.6" width="5.2" height="5.2" fill="#8a8a8a"/><rect x="670.8" y="639.6" width="5.2" height="5.2" fill="#a4a4a4"/><rect x="676.0" y="644.8" width="5.2" height="5.2" fill="#9a9a9a"/><rect x="676.0" y="650.0" width="5.2" height="5.2" fill="#9a9a9a"/><rect x="670.8" y="650.0" width="5.2" height="5.2" fill="#a4a4a4"/><rect x="681.2" y="650.0" width="5.2" height="5.2" fill="#9a9a9a"/><rect x="676.0" y="655.2" width="5.2" height="5.2" fill="#6c6c6c"/><rect x="670.8" y="655.2" width="5.2" height="5.2" fill="#b8b8b8"/><rect x="681.2" y="655.2" width="5.2" height="5.2" fill="#6c6c6c"/><rect x="681.2" y="660.4" width="5.2" height="5.2" fill="#7a7a7a"/><rect x="676.0" y="660.4" width="5.2" height="5.2" fill="#7a7a7a"/><rect x="676.0" y="665.6" width="5.2" height="5.2" fill="#9a9a9a"/><rect x="681.2" y="665.6" width="5.2" height="5.2" fill="#8a8a8a"/><rect x="681.2" y="670.8" width="5.2" height="5.2" fill="#6c6c6c"/><rect x="676.0" y="670.8" width="5.2" height="5.2" fill="#8a8a8a"/><rect x="676.0" y="676.0" width="5.2" height="5.2" fill="#6c6c6c"/><rect x="681.2" y="676.0" width="5.2" height="5.2" fill="#9a9a9a"/><rect x="681.2" y="681.2" width="5.2" height="5.2" fill="#9a9a9a"/><rect x="676.0" y="681.2" width="5.2" height="5.2" fill="#8a8a8a"/><rect x="681.2" y="686.4" width="5.2" height="5.2" fill="#6c6c6c"/><rect x="676.0" y="686.4" width="5.2" height="5.2" fill="#7a7a7a"/><rect x="681.2" y="691.6" width="5.2" height="5.2" fill="#9a9a9a"/><rect x="676.0" y="691.6" width="5.2" height="5.2" fill="#a4a4a4"/><rect x="681.2" y="696.8" width="5.2" height="5.2" fill="#9a9a9a"/><rect x="676.0" y="696.8" width="5.2" height="5.2" fill="#b0b0b0"/><rect x="681.2" y="702.0" width="5.2" height="5.2" fill="#8a8a8a"/><rect x="676.0" y="702.0" width="5.2" height="5.2" fill="#b0b0b0"/><rect x="681.2" y="707.2" width="5.2" height="5.2" fill="#7a7a7a"/><rect x="676.0" y="707.2" width="5.2" height="5.2" fill="#b0b0b0"/><rect x="681.2" y="712.4" width="5.2" height="5.2" fill="#9a9a9a"/><rect x="681.2" y="717.6" width="5.2" height="5.2" fill="#8a8a8a"/><rect x="686.4" y="717.6" width="5.2" height="5.2" fill="#6c6c6c"/><rect x="686.4" y="722.8" width="5.2" height="5.2" fill="#6c6c6c"/><rect x="681.2" y="722.8" width="5.2" height="5.2" fill="#8a8a8a"/><rect x="676.0" y="722.8" width="5.2" height="5.2" fill="#b0b0b0"/><rect x="686.4" y="728.0" width="5.2" height="5.2" fill="#9a9a9a"/><rect x="681.2" y="728.0" width="5.2" height="5.2" fill="#9a9a9a"/><rect x="686.4" y="733.2" width="5.2" height="5.2" fill="#8a8a8a"/><rect x="681.2" y="733.2" width="5.2" height="5.2" fill="#6c6c6c"/><rect x="681.2" y="639.6" width="5.2" height="5.2" fill="#606664"/><rect x="676.0" y="644.8" width="5.2" height="5.2" fill="#4a504e"/><rect x="681.2" y="650.0" width="5.2" height="5.2" fill="#606664"/><rect x="681.2" y="655.2" width="5.2" height="5.2" fill="#606664"/><rect x="681.2" y="665.6" width="5.2" height="5.2" fill="#606664"/><rect x="681.2" y="670.8" width="5.2" height="5.2" fill="#4a504e"/><rect x="681.2" y="681.2" width="5.2" height="5.2" fill="#4a504e"/><rect x="681.2" y="686.4" width="5.2" height="5.2" fill="#606664"/><rect x="681.2" y="691.6" width="5.2" height="5.2" fill="#606664"/><rect x="686.4" y="691.6" width="5.2" height="5.2" fill="#606664"/><rect x="681.2" y="696.8" width="5.2" height="5.2" fill="#545a58"/><rect x="686.4" y="696.8" width="5.2" height="5.2" fill="#545a58"/><rect x="681.2" y="702.0" width="5.2" height="5.2" fill="#4a504e"/><rect x="681.2" y="707.2" width="5.2" height="5.2" fill="#545a58"/><rect x="686.4" y="707.2" width="5.2" height="5.2" fill="#606664"/><rect x="686.4" y="712.4" width="5.2" height="5.2" fill="#4a504e"/><rect x="686.4" y="717.6" width="5.2" height="5.2" fill="#545a58"/><rect x="686.4" y="728.0" width="5.2" height="5.2" fill="#545a58"/><rect x="686.4" y="733.2" width="5.2" height="5.2" fill="#606664"/></g><path d="M96.2 -145.5L25.5 1198.1M196.4 -152.2L154.0 1187.1M296.4 -159.0L282.0 1176.1M396.1 -165.7L409.5 1165.1M495.6 -172.3L536.6 1154.2M594.7 -179.0L663.2 1143.3M693.6 -185.7L789.4 1132.5M792.2 -192.3L915.1 1121.7M890.5 -198.9L1040.4 1110.9M988.6 -205.5L1165.2 1100.2M1086.4 -212.1L1289.6 1089.5M1183.9 -218.6L1413.6 1078.9M1281.1 -225.2L1537.1 1068.2M96.2 -145.5L1378.1 -231.7M91.5 -56.4L1396.9 -145.8M86.6 36.0L1416.4 -56.7M81.6 132.1L1436.6 35.7M76.3 231.9L1457.6 131.7M70.9 335.7L1479.4 231.5M65.2 443.7L1502.1 335.3M59.3 556.3L1525.8 443.4M53.1 673.7L1550.4 556.0M46.7 796.2L1576.1 673.4M39.9 924.2L1602.9 795.9M32.9 1058.0L1630.9 923.8M25.5 1198.1L1660.2 1057.7" stroke="#a0a0a4" stroke-opacity="0.45" stroke-width="1" fill="none"/><polyline points="879.0,200.0 1081.0,465.0 948.0,791.0 770.0,806.0" fill="none" stroke="url(#spW)" stroke-width="7" stroke-linejoin="round"/><polyline points="600.0,806.0 393.0,521.0 554.0,225.0" fill="none" stroke="url(#spW)" stroke-width="7" stroke-linejoin="round"/><polyline points="554.0,225.0 879.0,200.0" fill="none" stroke="url(#spR)" stroke-width="7" stroke-linejoin="round"/><polyline points="879.0,200.0 1081.0,465.0" fill="none" stroke="url(#spM)" stroke-width="7" stroke-linejoin="round"/><polyline points="685.0,615.0 806.0,607.0" fill="none" stroke="url(#spR)" stroke-width="7.5"/><polyline points="804.0,607.0 816.0,731.0" fill="none" stroke="url(#spM)" stroke-width="6"/><polyline points="685.0,612.0 692.0,738.0" fill="none" stroke="url(#spW)" stroke-width="3.5"/><polyline points="681.9,384.8 682.7,386.8 683.4,388.9 684.0,391.1 684.5,393.2 684.9,395.4 685.3,397.6 685.6,399.8 685.8,402.0 685.9,404.2 685.9,406.4 685.9,408.6 685.7,410.9 685.5,413.1 685.2,415.3 684.8,417.5 684.4,419.7 683.8,421.9 683.2,424.1 682.5,426.2 681.7,428.3 680.8,430.4 679.9,432.5 678.8,434.5 677.7,436.5 676.6,438.4 675.3,440.4 674.0,442.2 672.6,444.1 671.2,445.8 669.7,447.6 668.1,449.2 666.5,450.8 664.8,452.4 663.0,453.9 661.2,455.3 659.3,456.7 657.4,458.0 655.5,459.2 653.5,460.4 651.4,461.5 649.4,462.5 647.3,463.4 645.1,464.3 642.9,465.1 640.7,465.8 638.5,466.4 636.3,467.0 634.0,467.4 631.7,467.8 629.5,468.1 627.2,468.3 624.9,468.5 622.6,468.5 620.3,468.5 618.0,468.4 615.7,468.2 613.4,467.9 611.2,467.5 608.9,467.1 606.7,466.5" fill="none" stroke="url(#bkL)" stroke-width="8" stroke-opacity="0.45"/><polygon points="680.8,402.7 680.9,406.6 680.7,410.5 680.3,414.4 679.6,418.3 678.6,422.1 677.3,425.8 675.8,429.5 674.0,433.0 671.9,436.5 669.7,439.7 667.2,442.9 664.5,445.8 661.5,448.6 658.4,451.2 655.2,453.5 651.7,455.7 648.2,457.5 644.5,459.2 640.7,460.6 636.8,461.7 632.8,462.6 628.9,463.1 624.8,463.4 620.8,463.5 616.8,463.2 612.9,462.7 608.9,461.9 605.1,460.8 601.4,459.5 597.7,457.9 594.2,456.1 590.9,454.0 587.7,451.7 584.7,449.1 581.9,446.4 579.3,443.5 576.9,440.4 574.8,437.2 572.9,433.8 571.2,430.2 569.8,426.6 568.7,422.9 567.9,419.1 567.3,415.2 567.0,411.3 567.0,407.4 567.2,403.5 567.8,399.7 568.6,395.8 569.6,392.1 571.0,388.4 572.6,384.8 574.4,381.3 576.5,377.9 578.8,374.7 581.3,371.7 584.0,368.8 586.9,366.1 590.0,363.6 593.3,361.3 596.7,359.3 600.2,357.5 603.8,355.9 607.6,354.6 611.4,353.5 615.2,352.7 619.1,352.1 623.1,351.8 627.0,351.8 630.9,352.0 634.8,352.5 638.7,353.3 642.4,354.3 646.1,355.6 649.7,357.1 653.1,358.9 656.4,360.9 659.6,363.1 662.6,365.6 665.4,368.2 668.0,371.1 670.4,374.1 672.6,377.3 674.5,380.6 676.2,384.1 677.7,387.6 678.9,391.3 679.8,395.1 680.4,398.9" fill="none" stroke="url(#spW)" stroke-width="7.5"/><polyline points="576.4,439.6 574.7,437.1 573.2,434.4 571.8,431.6 570.6,428.8 569.6,425.9 568.7,423.0 568.0,420.0 567.5,417.0 567.2,413.9 567.0,410.9 567.0,407.8 567.1,404.7 567.5,401.7 568.0,398.6 568.6,395.6 569.5,392.6 570.5,389.7 571.6,386.8 572.9,384.0 574.4,381.3 576.0,378.6 577.8,376.1 579.7,373.6 581.7,371.2 583.8,369.0 586.1,366.8 588.5,364.8 591.0,362.9 593.6,361.2 596.2,359.5 599.0,358.1 601.8,356.7 604.7,355.5 607.7,354.5 610.7,353.7 613.7,353.0 616.8,352.4 619.8,352.0 622.9,351.8 626.0,351.8 629.1,351.9 632.2,352.2 635.3,352.6 638.3,353.2 641.3,354.0 644.2,354.9 647.1,356.0 649.9,357.2 652.6,358.6 655.2,360.1 657.8,361.8 660.2,363.6 662.6,365.6 664.8,367.6 666.9,369.8 668.9,372.1 670.7,374.5 672.4,377.1 674.0,379.7 675.4,382.3" fill="none" stroke="url(#spR)" stroke-width="7.5"/><polyline points="920.5,368.3 921.4,370.4 922.1,372.5 922.8,374.6 923.5,376.8 924.0,378.9 924.5,381.1 924.9,383.3 925.1,385.5 925.4,387.7 925.5,390.0 925.5,392.2 925.5,394.4 925.4,396.6 925.2,398.9 924.9,401.1 924.5,403.3 924.1,405.4 923.5,407.6 922.9,409.7 922.2,411.9 921.4,413.9 920.6,416.0 919.7,418.0 918.6,420.0 917.6,422.0 916.4,423.9 915.2,425.8 913.9,427.6 912.5,429.4 911.0,431.1 909.5,432.7 908.0,434.4 906.3,435.9 904.6,437.4 902.9,438.8 901.1,440.2 899.2,441.5 897.3,442.7 895.4,443.9 893.4,445.0 891.4,446.0 889.3,446.9 887.2,447.8 885.0,448.6 882.9,449.3 880.7,449.9 878.4,450.5 876.2,450.9 873.9,451.3 871.7,451.6 869.4,451.8 867.1,452.0 864.8,452.0 862.5,452.0 860.2,451.9 857.9,451.7 855.6,451.4 853.3,451.0 851.0,450.6 848.8,450.1" fill="none" stroke="url(#bkL)" stroke-width="8" stroke-opacity="0.45"/><polygon points="920.2,386.3 920.5,390.2 920.5,394.1 920.2,398.0 919.7,401.8 918.8,405.6 917.7,409.4 916.4,413.0 914.7,416.6 912.8,420.0 910.7,423.3 908.4,426.4 905.8,429.4 903.0,432.1 900.0,434.7 896.8,437.1 893.4,439.2 889.9,441.1 886.3,442.7 882.6,444.1 878.7,445.2 874.8,446.1 870.8,446.7 866.8,447.0 862.8,447.0 858.8,446.8 854.8,446.2 850.8,445.4 846.9,444.4 843.1,443.0 839.4,441.4 835.8,439.6 832.3,437.5 829.1,435.2 825.9,432.7 823.0,430.0 820.3,427.0 817.7,423.9 815.4,420.7 813.4,417.3 811.6,413.8 810.0,410.1 808.7,406.4 807.7,402.6 806.9,398.8 806.5,394.9 806.3,391.0 806.4,387.1 806.7,383.2 807.4,379.4 808.3,375.6 809.4,371.9 810.9,368.3 812.6,364.9 814.5,361.5 816.7,358.3 819.0,355.2 821.6,352.4 824.4,349.7 827.4,347.2 830.6,344.9 833.9,342.9 837.3,341.0 840.9,339.5 844.6,338.1 848.4,337.0 852.2,336.2 856.1,335.7 860.0,335.4 864.0,335.3 867.9,335.6 871.8,336.1 875.7,336.9 879.6,337.9 883.3,339.2 887.0,340.7 890.5,342.5 893.9,344.5 897.2,346.7 900.3,349.1 903.2,351.8 906.0,354.6 908.5,357.6 910.8,360.8 912.9,364.2 914.8,367.6 916.4,371.2 917.8,374.9 918.8,378.6 919.7,382.4" fill="none" stroke="url(#spW)" stroke-width="7.5"/><polyline points="817.2,423.2 815.4,420.6 813.7,417.9 812.2,415.2 810.9,412.4 809.8,409.5 808.8,406.5 807.9,403.5 807.3,400.5 806.8,397.5 806.4,394.4 806.3,391.4 806.3,388.3 806.5,385.2 806.9,382.2 807.4,379.2 808.1,376.2 809.0,373.3 810.0,370.4 811.2,367.6 812.6,364.9 814.1,362.2 815.7,359.6 817.5,357.2 819.4,354.8 821.5,352.5 823.7,350.4 826.0,348.4 828.4,346.5 830.9,344.7 833.5,343.1 836.2,341.6 838.9,340.3 841.8,339.1 844.7,338.1 847.7,337.2 850.7,336.5 853.7,336.0 856.8,335.6 859.9,335.4 863.0,335.3 866.1,335.4 869.2,335.7 872.3,336.2 875.4,336.8 878.4,337.5 881.4,338.5 884.3,339.6 887.2,340.8 890.0,342.2 892.7,343.7 895.3,345.4 897.8,347.2 900.3,349.1 902.6,351.2 904.8,353.4 906.9,355.7 908.9,358.1 910.7,360.6 912.4,363.2 913.9,365.9" fill="none" stroke="url(#spR)" stroke-width="7.5"/><polyline points="523.0,405.0 532.6,342.3 586.0,320.0 625.3,322.7" fill="none" stroke="#8a80d8" stroke-opacity="0.7" stroke-width="7.5" stroke-linejoin="round"/><polyline points="625.3,322.7 650.5,318.0 660.0,312.0 669.5,305.3 806.4,270.5 844.5,254.5 862.5,259.3 875.4,268.9 922.0,312.3 941.2,342.9 957.3,376.6 971.8,410.3 978.2,442.4 973.4,463.5 933.2,486.0 920.4,490.2 760.0,501.3 744.0,503.0" fill="none" stroke="#6a58c8" stroke-opacity="0.74" stroke-width="7.5" stroke-linejoin="round"/><circle cx="532.6" cy="342.3" r="3.2" fill="#3a1ec8"/><circle cx="579.0" cy="324.0" r="3.2" fill="#3a1ec8"/><circle cx="650.5" cy="318.0" r="3.2" fill="#3a1ec8"/><circle cx="844.5" cy="254.5" r="3.4" fill="#3a1ec8"/><circle cx="862.5" cy="259.3" r="3.2" fill="#3a1ec8"/><circle cx="875.4" cy="268.9" r="1.8" fill="#3a1ec8"/><circle cx="922.0" cy="312.3" r="1.8" fill="#3a1ec8"/><circle cx="941.2" cy="342.9" r="1.6" fill="#3a1ec8"/><circle cx="972.5" cy="410.3" r="1.6" fill="#3a1ec8"/><circle cx="978.2" cy="437.0" r="1.8" fill="#3a1ec8"/><circle cx="975.5" cy="452.0" r="2.2" fill="#3a1ec8"/><circle cx="973.0" cy="463.0" r="3.2" fill="#3a1ec8"/><circle cx="933.0" cy="486.0" r="2.6" fill="#3a1ec8"/><circle cx="920.4" cy="490.2" r="2.6" fill="#3a1ec8"/><circle cx="590.0" cy="320.0" r="1.8" fill="#3a1ec8"/><circle cx="627.4" cy="322.1" r="2.0" fill="#3a1ec8"/><line x1="535" y1="418" x2="738" y2="502" stroke="#ece8c8" stroke-width="1"/><circle cx="735" cy="502" r="2.5" fill="#e8a0a8" fill-opacity="0.8"/><line x1="742.5" y1="503" x2="742" y2="480" stroke="#20e020" stroke-width="2"/><circle cx="743" cy="503.5" r="4" fill="#2a1ab8"/><line x1="540" y1="408" x2="539" y2="388" stroke="#a8a8f0" stroke-width="3" stroke-opacity="0.8"/><circle cx="522.5" cy="411" r="11.5" fill="#5548d0" fill-opacity="0.9"/><path d="M527 416 A11.5 11.5 0 0 1 515 420 L520 419 Z" fill="#777" fill-opacity="0.6"/><path d="M513.5 404.5 L523 412 M531 404.5 L535.5 409.5" stroke="#111" stroke-width="2"/><line x1="514.3" y1="389" x2="516" y2="402" stroke="#b00010" stroke-width="2.8"/><line x1="516" y1="410" x2="519.3" y2="432" stroke="#b00010" stroke-width="3.8"/><line x1="523" y1="410" x2="545.4" y2="413.6" stroke="#20e020" stroke-width="3"/><line x1="545" y1="413" x2="558" y2="415" stroke="#80e080" stroke-width="1.5"/></svg>
<svg style="position:absolute;left:14px;top:44px" width="18" height="18" viewBox="0 0 18 18"><path d="M4 7.8 V2.8 Q4 1.3 5.7 1.3 Q7.4 1.3 7.4 2.8 V6.3 H10 Q10.5 5.6 11 6.3 H13 Q13.5 5.6 14 6.3 H16 Q16.8 6.3 16.8 7.2 V14 Q16.8 16.6 14.5 16.6 H4 L1.3 14 V8.7 Q1.3 7.8 2.3 7.8 H4 Z" fill="#fff" stroke="#111" stroke-width="1.25"/><path d="M7.4 6.3 V11.5 M10.4 6.8 V10.5 M13.4 6.8 V10.5 M4 7.8 V11" stroke="#888" stroke-width="0.9" fill="none"/></svg>
<svg style="position:absolute;left:100px;top:45px" width="18" height="17" viewBox="0 0 18 17"><path d="M9 1 L13 5.5 H11 V11.5 H13 L9 16 L5 11.5 H7 V5.5 H5 Z" fill="#fff" stroke="#333" stroke-width="1" stroke-dasharray="2 1"/><path d="M1.5 4 V9.5 L4 8.5 H14 L16.5 9.5 V4 L14 5.5 H4 Z" fill="#fff" stroke="#333" stroke-width="1"/><rect x="8" y="5" width="2" height="7" fill="#bbb"/></svg>
<svg style="position:absolute;left:218px;top:45px" width="18" height="15" viewBox="0 0 18 15"><rect x="1.5" y="1.5" width="15" height="12" fill="#ecd6c4" stroke="#2a2a1a" stroke-width="1.4" stroke-dasharray="2 1.2"/><rect x="2.2" y="2.2" width="13.6" height="3" fill="#f6ecd2"/><path d="M17 9 V14 H12 Z" fill="#000"/></svg>
<svg style="position:absolute;left:295px;top:44px" width="19" height="19" viewBox="0 0 19 19"><path d="M8 1 H11 V8 H18 V11 H11 V18 H8 V11 H1 V8 H8 Z" fill="#fafafa" stroke="#7a7a7a" stroke-width="0.9" stroke-linejoin="miter"/><circle cx="9.5" cy="9.5" r="5.3" fill="#fafafa" stroke="#7a7a7a" stroke-width="1"/><path d="M6.8 7 h2 v2 h-2z M10.2 7 h2 v2 h-2z M6.8 10.2 h2 v2 h-2z M10.2 10.2 h2 v2 h-2z" fill="none" stroke="#8a8a8a" stroke-width="0.8"/></svg>
<svg style="position:absolute;left:414px;top:49px" width="18" height="8" viewBox="0 0 18 8"><rect x="1.6" y="1.6" width="14.8" height="5" rx="1" fill="#f3ecc8" stroke="#4a3c34" stroke-width="1.3"/><path d="M4 2.5 V5 M6 2.5 V4 M8 2.5 V5 M10 2.5 V4 M12 2.5 V5 M14 2.5 V4" stroke="#7a6a58" stroke-width="0.8"/><path d="M3 6.3 H15" stroke="#40b040" stroke-width="0.8" stroke-dasharray="1 1.5"/></svg>
<svg style="position:absolute;left:504.5px;top:45px" width="18" height="16" viewBox="0 0 18 16"><path d="M1.5 13.5 L7.5 8.5 L6.8 7.2 L16 1.5 L10.2 10.2 L9 9.5 L3 14.7 Z" fill="#3fe23f" stroke="#2fc02f" stroke-width="0.8" stroke-linejoin="round"/><circle cx="8.2" cy="5.5" r="0.6" fill="#000"/><circle cx="9.3" cy="7.8" r="0.6" fill="#000"/></svg>
<svg style="position:absolute;left:642.7px;top:45px" width="18" height="16" viewBox="0 0 18 16"><path d="M1.5 13.5 L7.5 8.5 L6.8 7.2 L16 1.5 L10.2 10.2 L9 9.5 L3 14.7 Z" fill="#3fe23f" stroke="#2fc02f" stroke-width="0.8" stroke-linejoin="round"/><circle cx="8.2" cy="5.5" r="0.6" fill="#000"/><circle cx="9.3" cy="7.8" r="0.6" fill="#000"/></svg>
<svg style="position:absolute;left:760px;top:44px" width="12" height="17" viewBox="0 0 12 17"><path d="M6 16 L2 9 Q0.8 6.8 1 5.5 Q1.3 1 6 1 Q10.7 1 11 5.5 Q11.2 6.8 10 9 Z" fill="#b8202e"/><path d="M2.2 8 Q4 11 6 10 Q8 11 9.8 8 L6 16 Z" fill="#6e2a2a"/><circle cx="6" cy="4.8" r="1.8" fill="#fff6e6"/></svg>
<svg style="position:absolute;left:874px;top:46px" width="14" height="14" viewBox="0 0 14 14"><path d="M4.5 1.2 H8.5 V4.5 H11.8 V8.5 H8.5 V11.8 H4.5 V8.5 H1.2 V4.5 H4.5 Z" fill="#9cc8ee" stroke="#3b5a7e" stroke-width="1.2" stroke-linejoin="round"/></svg>
<svg style="position:absolute;left:922px;top:50px" width="14" height="6" viewBox="0 0 14 6"><rect x="1.1" y="1.1" width="11.8" height="3.8" rx="1" fill="#9cc8ee" stroke="#3b5a7e" stroke-width="1.2"/></svg>
<svg style="position:absolute;left:937px;top:62px" width="6" height="3" viewBox="0 0 6 3"><path d="M0 0 H6 L3 3 Z" fill="#444"/></svg>
<svg style="position:absolute;left:2px;top:76px" width="18" height="18" viewBox="0 0 18 18"><defs><linearGradient id="mg" x1="0" x2="1"><stop offset="0" stop-color="#d86a7a"/><stop offset="0.35" stop-color="#b89a8a"/><stop offset="0.5" stop-color="#6ae86a"/><stop offset="0.68" stop-color="#80d080"/><stop offset="0.8" stop-color="#a890e0"/><stop offset="1" stop-color="#9a9ae8"/></linearGradient></defs><rect x="1.8" y="1.8" width="14.4" height="10.6" rx="0.8" fill="url(#mg)" stroke="#000" stroke-width="1.5"/><rect x="8" y="12.4" width="2" height="2.2" fill="#000"/><ellipse cx="9" cy="15.6" rx="4.8" ry="1.1" fill="#fff" stroke="#000" stroke-width="1.1"/></svg>
<svg style="position:absolute;left:24px;top:98px" width="13" height="13" viewBox="0 0 13 13"><polygon points="11.27,5.40 12.72,5.51 12.72,7.49 11.27,7.60 10.66,9.10 11.60,10.20 10.20,11.60 9.10,10.66 7.60,11.27 7.49,12.72 5.51,12.72 5.40,11.27 3.90,10.66 2.80,11.60 1.40,10.20 2.34,9.10 1.73,7.60 0.28,7.49 0.28,5.51 1.73,5.40 2.34,3.90 1.40,2.80 2.80,1.40 3.90,2.34 5.40,1.73 5.51,0.28 7.49,0.28 7.60,1.73 9.10,2.34 10.20,1.40 11.60,2.80 10.66,3.90" fill="#bfe0fa" stroke="#2f62a8" stroke-width="1.1" stroke-linejoin="round"/><circle cx="6.5" cy="6.5" r="2.3" fill="#fff" stroke="#2f62a8" stroke-width="1.1"/></svg>
<svg style="position:absolute;left:23.8px;top:173.8px" width="14" height="14" viewBox="0 0 14 14"><path d="M1 7.5 L3.2 6.5 L5 9.5 L12.5 0.8 L13 1.5 L5.3 13 L4.2 13 Z" fill="#2f9a2f" stroke="#1d6a1d" stroke-width="0.6" stroke-linejoin="round"/></svg>
<svg style="position:absolute;left:43.8px;top:192.8px" width="14" height="14" viewBox="0 0 14 14"><path d="M1 7.5 L3.2 6.5 L5 9.5 L12.5 0.8 L13 1.5 L5.3 13 L4.2 13 Z" fill="#2f9a2f" stroke="#1d6a1d" stroke-width="0.6" stroke-linejoin="round"/></svg>
<svg style="position:absolute;left:43.5px;top:268.8px" width="14" height="14" viewBox="0 0 14 14"><path d="M1 7.5 L3.2 6.5 L5 9.5 L12.5 0.8 L13 1.5 L5.3 13 L4.2 13 Z" fill="#2f9a2f" stroke="#1d6a1d" stroke-width="0.6" stroke-linejoin="round"/></svg>
<svg style="position:absolute;left:23.5px;top:213.5px" width="15" height="10" viewBox="0 0 15 10"><path d="M7.5 1 L14 5 L7.5 9 L1 5 Z M4.25 3 L10.75 7 M10.75 3 L4.25 7" fill="none" stroke="#222" stroke-width="1.5" stroke-linejoin="round"/></svg>
<svg style="position:absolute;left:22.8px;top:230px" width="16" height="16" viewBox="0 0 16 16"><rect x="0.00" y="0.00" width="2.35" height="2.3" fill="#5e5e5e"/><rect x="2.30" y="0.00" width="2.35" height="2.3" fill="#5e5e5e"/><rect x="4.60" y="0.00" width="2.35" height="2.3" fill="#5e5e5e"/><rect x="6.90" y="0.00" width="2.35" height="2.3" fill="#5e5e5e"/><rect x="9.20" y="0.00" width="2.35" height="2.3" fill="#f0f0f0"/><rect x="11.50" y="0.00" width="2.35" height="2.3" fill="#5e5e5e"/><rect x="13.80" y="0.00" width="2.35" height="2.3" fill="#5e5e5e"/><rect x="0.00" y="2.30" width="2.35" height="2.3" fill="#5e5e5e"/><rect x="2.30" y="2.30" width="2.35" height="2.3" fill="#5e5e5e"/><rect x="4.60" y="2.30" width="2.35" height="2.3" fill="#5e5e5e"/><rect x="6.90" y="2.30" width="2.35" height="2.3" fill="#5e5e5e"/><rect x="9.20" y="2.30" width="2.35" height="2.3" fill="#f0f0f0"/><rect x="11.50" y="2.30" width="2.35" height="2.3" fill="#5e5e5e"/><rect x="13.80" y="2.30" width="2.35" height="2.3" fill="#5e5e5e"/><rect x="0.00" y="4.60" width="2.35" height="2.3" fill="#5e5e5e"/><rect x="2.30" y="4.60" width="2.35" height="2.3" fill="#5e5e5e"/><rect x="4.60" y="4.60" width="2.35" height="2.3" fill="#5e5e5e"/><rect x="6.90" y="4.60" width="2.35" height="2.3" fill="#5e5e5e"/><rect x="9.20" y="4.60" width="2.35" height="2.3" fill="#f0f0f0"/><rect x="11.50" y="4.60" width="2.35" height="2.3" fill="#5e5e5e"/><rect x="13.80" y="4.60" width="2.35" height="2.3" fill="#5e5e5e"/><rect x="0.00" y="6.90" width="2.35" height="2.3" fill="#5e5e5e"/><rect x="2.30" y="6.90" width="2.35" height="2.3" fill="#5e5e5e"/><rect x="4.60" y="6.90" width="2.35" height="2.3" fill="#f0f0f0"/><rect x="6.90" y="6.90" width="2.35" height="2.3" fill="#f0f0f0"/><rect x="9.20" y="6.90" width="2.35" height="2.3" fill="#5e5e5e"/><rect x="11.50" y="6.90" width="2.35" height="2.3" fill="#5e5e5e"/><rect x="13.80" y="6.90" width="2.35" height="2.3" fill="#5e5e5e"/><rect x="0.00" y="9.20" width="2.35" height="2.3" fill="#5e5e5e"/><rect x="2.30" y="9.20" width="2.35" height="2.3" fill="#5e5e5e"/><rect x="4.60" y="9.20" width="2.35" height="2.3" fill="#f0f0f0"/><rect x="6.90" y="9.20" width="2.35" height="2.3" fill="#f0f0f0"/><rect x="9.20" y="9.20" width="2.35" height="2.3" fill="#f0f0f0"/><rect x="11.50" y="9.20" width="2.35" height="2.3" fill="#f0f0f0"/><rect x="13.80" y="9.20" width="2.35" height="2.3" fill="#f0f0f0"/><rect x="0.00" y="11.50" width="2.35" height="2.3" fill="#5e5e5e"/><rect x="2.30" y="11.50" width="2.35" height="2.3" fill="#f0f0f0"/><rect x="4.60" y="11.50" width="2.35" height="2.3" fill="#f0f0f0"/><rect x="6.90" y="11.50" width="2.35" height="2.3" fill="#f0f0f0"/><rect x="9.20" y="11.50" width="2.35" height="2.3" fill="#5e5e5e"/><rect x="11.50" y="11.50" width="2.35" height="2.3" fill="#5e5e5e"/><rect x="13.80" y="11.50" width="2.35" height="2.3" fill="#5e5e5e"/><rect x="0.00" y="13.80" width="2.35" height="2.3" fill="#5e5e5e"/><rect x="2.30" y="13.80" width="2.35" height="2.3" fill="#f0f0f0"/><rect x="4.60" y="13.80" width="2.35" height="2.3" fill="#f0f0f0"/><rect x="6.90" y="13.80" width="2.35" height="2.3" fill="#f0f0f0"/><rect x="9.20" y="13.80" width="2.35" height="2.3" fill="#5e5e5e"/><rect x="11.50" y="13.80" width="2.35" height="2.3" fill="#5e5e5e"/><rect x="13.80" y="13.80" width="2.35" height="2.3" fill="#5e5e5e"/></svg>
<svg style="position:absolute;left:22.5px;top:249.5px" width="17" height="16" viewBox="0 0 17 16"><ellipse cx="5.3" cy="2.2" rx="2" ry="1.2" fill="#3a3aa0"/><rect x="3.5" y="3" width="3.5" height="0.8" fill="#999"/><path d="M1 15 V8 L3 6 H6 V15 Z" fill="#111"/><path d="M6 8 H8.5 V12 H6.5 M8.5 10 Q10.5 9.5 10.8 12 L10.5 15 H7" fill="none" stroke="#111" stroke-width="1.4"/><path d="M12 15 L15.5 9" stroke="#111" stroke-width="1.3"/><rect x="3" y="9" width="1" height="5" fill="#bbb"/></svg>
<svg style="position:absolute;left:22.5px;top:439px" width="17" height="16" viewBox="0 0 17 16"><path d="M1.5 13.5 L10.5 5" stroke="#b01818" stroke-width="1.5"/><path d="M10.5 5 L9.5 1" stroke="#2a2aa0" stroke-width="1.3"/><path d="M10.5 5 L15.5 5" stroke="#70d870" stroke-width="1.8"/><path d="M5 9.5 L4.5 6" stroke="#3030a8" stroke-width="1.2"/><path d="M5 9.5 L8 10.5" stroke="#70d870" stroke-width="1.6"/><path d="M7.5 11 L6.8 8" stroke="#d8d870" stroke-width="0.8"/></svg>
<svg style="position:absolute;left:22.5px;top:462px" width="17" height="11" viewBox="0 0 17 11"><path d="M1.5 6 L4.5 4 L6 5 L8.5 3 L9.5 3.2 L10.5 7.5 L11.5 8.8 L13 7 L15.5 7.5" fill="none" stroke="#c01010" stroke-width="2" stroke-linejoin="round" stroke-linecap="round"/></svg>
<svg style="position:absolute;left:22.5px;top:476.5px" width="17" height="17" viewBox="0 0 17 17"><circle cx="4.8" cy="4.2" r="3.3" fill="#30c030"/><circle cx="4.3" cy="3.4" r="1.6" fill="#60e060"/><rect x="2.5" y="8" width="6" height="7" rx="1.5" fill="#c81828"/><rect x="3.2" y="8.6" width="3" height="2.4" fill="#e84050"/><rect x="10.8" y="5" width="5.8" height="6.5" rx="1.6" fill="#2828b8"/><rect x="11.5" y="5.6" width="3" height="2.2" fill="#5a5ae0"/></svg>
<svg style="position:absolute;left:23.5px;top:496.5px" width="16" height="16" viewBox="0 0 16 16"><rect x="6.8" y="1.2" width="1.7" height="1.7" fill="#2a78c8"/><rect x="1.2" y="4.5" width="1.7" height="1.7" fill="#2a78c8"/><rect x="3.5" y="4.2" width="1.7" height="1.7" fill="#2a78c8"/><rect x="5.0" y="3.5" width="1.7" height="1.7" fill="#2a78c8"/><rect x="9.8" y="4.0" width="1.7" height="1.7" fill="#2a78c8"/><rect x="12.5" y="5.0" width="1.7" height="1.7" fill="#2a78c8"/><rect x="2.2" y="7.8" width="1.7" height="1.7" fill="#2a78c8"/><rect x="4.0" y="8.8" width="1.7" height="1.7" fill="#2a78c8"/><rect x="7.2" y="8.0" width="1.7" height="1.7" fill="#2a78c8"/><rect x="9.6" y="7.8" width="1.7" height="1.7" fill="#2a78c8"/><rect x="12.8" y="9.3" width="1.7" height="1.7" fill="#2a78c8"/><rect x="4.5" y="12.3" width="1.7" height="1.7" fill="#2a78c8"/><rect x="8.8" y="12.0" width="1.7" height="1.7" fill="#2a78c8"/></svg>
</body></html>
